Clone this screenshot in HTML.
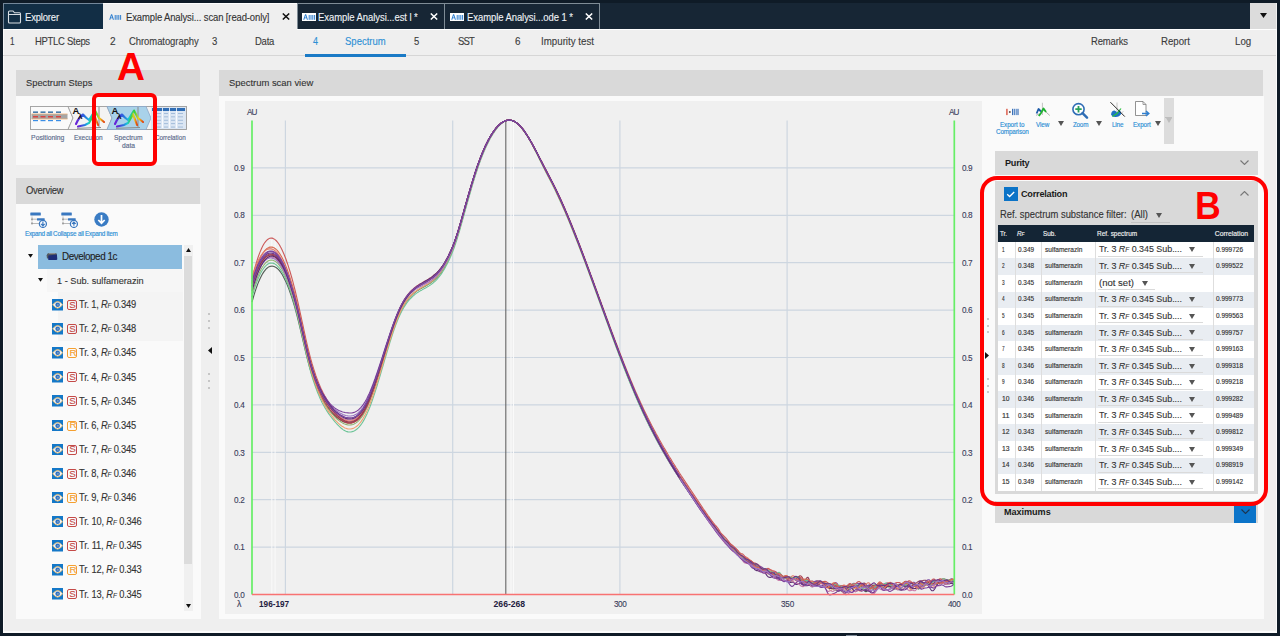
<!DOCTYPE html>
<html><head><meta charset="utf-8"><style>
*{margin:0;padding:0;box-sizing:border-box}
html,body{width:1280px;height:636px;overflow:hidden;background:#0f1b27;font-family:"Liberation Sans",sans-serif;color:#333}
.a{position:absolute}
.t{position:absolute;white-space:nowrap;line-height:1;transform-origin:0 0}
i{font-style:italic}
</style></head><body>
<div class="a" style="left:3px;top:3px;width:1274px;height:629px;background:#efefef"></div>
<div class="a" style="left:3px;top:631px;width:1274px;height:1.5px;background:#fbfbfb"></div>
<div class="a" style="left:846px;top:634.5px;width:11px;height:1.5px;background:#7f8c98"></div>
<div class="a" style="left:1276px;top:29px;width:1px;height:603px;background:#fbfbfb"></div>
<div class="a" style="left:3px;top:29px;width:1px;height:603px;background:#fbfbfb"></div>
<div class="a" style="left:3px;top:3px;width:1273px;height:26px;background:#172635"></div>
<div class="a" style="left:3px;top:29px;width:100px;height:1px;background:#fff"></div>
<div class="a" style="left:297px;top:29px;width:979px;height:1px;background:#fff"></div>
<div class="a" style="left:3px;top:3px;width:100px;height:26px;background:#122e45;border-top:1.5px solid #74879a;border-left:1px solid #74879a"></div>
<svg class="a" style="left:7px;top:10px" width="15" height="14" viewBox="0 0 15 14"><path d="M1.5 3.5 V2 Q1.5 1 2.5 1 H6 L7.5 2.8 H12.5 Q13.5 2.8 13.5 3.8 V12 Q13.5 13 12.5 13 H2.5 Q1.5 13 1.5 12 Z M1.5 4.5 H13.5" fill="none" stroke="#d8dde2" stroke-width="1.1"/></svg>
<div class="t" id="t1" style="left:24.70px;top:13.00px;font-size:10.2px;color:#eef1f4;-webkit-text-stroke:0.12px #eef1f4;transform:scaleX(0.9300);letter-spacing:-0.182px;">Explorer</div>
<div class="a" style="left:103px;top:3px;width:194px;height:27px;background:#efefef;border-top:1px solid #fdfdfd"></div>
<svg class="a" style="left:108px;top:12.5px" width="14" height="8" viewBox="0 0 14 8"><rect width="14" height="8" fill="transparent"/><path d="M1.2 6.8 L3.1 1.2 H4.1 L6 6.8 H4.9 L4.4 5.3 H2.8 L2.3 6.8 Z M3.05 4.4 H4.15 L3.6 2.6 Z" fill="#2f7fd0"/><rect x="6.7" y="2" width="1" height="4.8" fill="#2f7fd0"/><rect x="8.5" y="2" width="1" height="4.8" fill="#2f7fd0"/><rect x="10.3" y="2" width="1" height="4.8" fill="#2f7fd0"/><rect x="12.1" y="2" width="1" height="4.8" fill="#2f7fd0"/></svg>
<div class="t" id="t2" style="left:125.80px;top:13.00px;font-size:10.2px;color:#333;-webkit-text-stroke:0.12px #333;transform:scaleX(0.9300);letter-spacing:-0.128px;">Example Analysi... scan [read-only]</div>
<svg class="a" style="left:282px;top:13px" width="8" height="7" viewBox="0 0 8 7"><path d="M0.8 0.5 L7.2 6.5 M7.2 0.5 L0.8 6.5" stroke="#111" stroke-width="1.5"/></svg>
<div class="a" style="left:297px;top:3px;width:148px;height:26px;background:#172635;border:1px solid #7f8c96;border-bottom:none"></div>
<svg class="a" style="left:301.5px;top:12.5px" width="14" height="8" viewBox="0 0 14 8"><rect width="14" height="8" fill="#fff"/><path d="M1.2 6.8 L3.1 1.2 H4.1 L6 6.8 H4.9 L4.4 5.3 H2.8 L2.3 6.8 Z M3.05 4.4 H4.15 L3.6 2.6 Z" fill="#2f7fd0"/><rect x="6.7" y="2" width="1" height="4.8" fill="#2f7fd0"/><rect x="8.5" y="2" width="1" height="4.8" fill="#2f7fd0"/><rect x="10.3" y="2" width="1" height="4.8" fill="#2f7fd0"/><rect x="12.1" y="2" width="1" height="4.8" fill="#2f7fd0"/></svg>
<div class="t" id="t3" style="left:318.10px;top:13.00px;font-size:10.2px;color:#eef1f4;-webkit-text-stroke:0.12px #eef1f4;transform:scaleX(0.9300);letter-spacing:-0.059px;">Example Analysi...est l *</div>
<svg class="a" style="left:430px;top:13px" width="8" height="7" viewBox="0 0 8 7"><path d="M0.8 0.5 L7.2 6.5 M7.2 0.5 L0.8 6.5" stroke="#fff" stroke-width="1.5"/></svg>
<div class="a" style="left:444px;top:3px;width:156px;height:26px;background:#172635;border:1px solid #7f8c96;border-bottom:none"></div>
<svg class="a" style="left:450px;top:12.5px" width="14" height="8" viewBox="0 0 14 8"><rect width="14" height="8" fill="#fff"/><path d="M1.2 6.8 L3.1 1.2 H4.1 L6 6.8 H4.9 L4.4 5.3 H2.8 L2.3 6.8 Z M3.05 4.4 H4.15 L3.6 2.6 Z" fill="#2f7fd0"/><rect x="6.7" y="2" width="1" height="4.8" fill="#2f7fd0"/><rect x="8.5" y="2" width="1" height="4.8" fill="#2f7fd0"/><rect x="10.3" y="2" width="1" height="4.8" fill="#2f7fd0"/><rect x="12.1" y="2" width="1" height="4.8" fill="#2f7fd0"/></svg>
<div class="t" id="t4" style="left:466.60px;top:13.00px;font-size:10.2px;color:#eef1f4;-webkit-text-stroke:0.12px #eef1f4;transform:scaleX(0.9300);letter-spacing:-0.069px;">Example Analysi...ode 1 *</div>
<svg class="a" style="left:585px;top:13px" width="8" height="7" viewBox="0 0 8 7"><path d="M0.8 0.5 L7.2 6.5 M7.2 0.5 L0.8 6.5" stroke="#fff" stroke-width="1.5"/></svg>
<div class="a" style="left:1250px;top:3px;width:26px;height:26px;background:#dcdcdc"></div>
<svg class="a" style="left:1259.5px;top:12.5px" width="7" height="5" viewBox="0 0 7 5"><path d="M0 0 H7 L3.5 5Z" fill="#111"/></svg>
<div class="a" style="left:3px;top:54.5px;width:1273px;height:1.5px;background:#d6d6d6"></div>
<div class="a" style="left:305px;top:54px;width:101px;height:2.5px;background:#1a7ac6"></div>
<div class="t" id="t5" style="left:10.00px;top:37.00px;font-size:10.2px;color:#3c3c3c;-webkit-text-stroke:0.12px #3c3c3c;transform:scaleX(0.7934);">1</div>
<div class="t" id="t6" style="left:35.10px;top:37.00px;font-size:10.2px;color:#3c3c3c;-webkit-text-stroke:0.12px #3c3c3c;transform:scaleX(0.9300);letter-spacing:-0.303px;">HPTLC Steps</div>
<div class="t" id="t7" style="left:110.40px;top:37.00px;font-size:10.2px;color:#3c3c3c;-webkit-text-stroke:0.12px #3c3c3c;transform:scaleX(0.9873);">2</div>
<div class="t" id="t8" style="left:128.90px;top:37.00px;font-size:10.2px;color:#3c3c3c;-webkit-text-stroke:0.12px #3c3c3c;transform:scaleX(0.9300);letter-spacing:-0.064px;">Chromatography</div>
<div class="t" id="t9" style="left:211.50px;top:37.00px;font-size:10.2px;color:#3c3c3c;-webkit-text-stroke:0.12px #3c3c3c;transform:scaleX(0.9344);">3</div>
<div class="t" id="t10" style="left:254.90px;top:37.00px;font-size:10.2px;color:#3c3c3c;-webkit-text-stroke:0.12px #3c3c3c;transform:scaleX(0.9300);letter-spacing:-0.260px;">Data</div>
<div class="t" id="t11" style="left:312.50px;top:37.00px;font-size:10.2px;color:#2d8fd5;-webkit-text-stroke:0.12px #2d8fd5;transform:scaleX(0.8815);">4</div>
<div class="t" id="t12" style="left:345.40px;top:37.00px;font-size:10.2px;color:#2d8fd5;-webkit-text-stroke:0.12px #2d8fd5;transform:scaleX(0.9333);">Spectrum</div>
<div class="t" id="t13" style="left:413.75px;top:37.00px;font-size:10.2px;color:#3c3c3c;-webkit-text-stroke:0.12px #3c3c3c;transform:scaleX(0.9256);">5</div>
<div class="t" id="t14" style="left:458.25px;top:37.00px;font-size:10.2px;color:#3c3c3c;-webkit-text-stroke:0.12px #3c3c3c;transform:scaleX(0.9300);letter-spacing:-0.909px;">SST</div>
<div class="t" id="t15" style="left:514.50px;top:37.00px;font-size:10.2px;color:#3c3c3c;-webkit-text-stroke:0.12px #3c3c3c;transform:scaleX(0.9697);">6</div>
<div class="t" id="t16" style="left:540.75px;top:37.00px;font-size:10.2px;color:#3c3c3c;-webkit-text-stroke:0.12px #3c3c3c;transform:scaleX(0.9552);">Impurity test</div>
<div class="t" id="t17" style="left:1090.50px;top:37.00px;font-size:10.2px;color:#3c3c3c;-webkit-text-stroke:0.12px #3c3c3c;transform:scaleX(0.9300);letter-spacing:-0.163px;">Remarks</div>
<div class="t" id="t18" style="left:1161.00px;top:37.00px;font-size:10.2px;color:#3c3c3c;-webkit-text-stroke:0.12px #3c3c3c;transform:scaleX(0.9484);">Report</div>
<div class="t" id="t19" style="left:1234.80px;top:37.00px;font-size:10.2px;color:#3c3c3c;-webkit-text-stroke:0.12px #3c3c3c;transform:scaleX(0.9529);">Log</div>
<div class="a" style="left:16px;top:70px;width:184px;height:26px;background:#d9d9d9"></div>
<div class="t" id="t20" style="left:25.70px;top:78.00px;font-size:9.8px;color:#333;-webkit-text-stroke:0.12px #333;transform:scaleX(0.9512);">Spectrum Steps</div>
<div class="a" style="left:16px;top:96px;width:184px;height:68.5px;background:#fafafa"></div>
<svg class="a" style="left:29px;top:105px" width="160" height="27" viewBox="0 0 160 27">
<defs><linearGradient id="rb" x1="0" x2="1"><stop offset="0" stop-color="#6a1fd6"/><stop offset="0.3" stop-color="#2a6ae0"/><stop offset="0.5" stop-color="#18c8d8"/><stop offset="0.7" stop-color="#3ad040"/><stop offset="0.85" stop-color="#f0d020"/><stop offset="1" stop-color="#e04010"/></linearGradient></defs>
<rect x="1.5" y="1.5" width="156" height="23" fill="#f3f3f3" stroke="#9a9a9a" stroke-width="0.9"/>
<path d="M1.5 1.5 H39 L44 13 L39 24.5 H1.5Z" fill="#fafafa" stroke="#9a9a9a" stroke-width="0.8"/>
<rect x="2.5" y="9" width="36" height="5" fill="#a6a6a6"/><rect x="2.5" y="8.6" width="36" height="0.8" fill="#f0b27a"/><rect x="2.5" y="13.6" width="36" height="0.8" fill="#f0b27a"/>
<rect x="4" y="6.5" width="5" height="1.3" fill="#1d5f9a"/><rect x="4" y="11" width="5" height="1.5" fill="#d9433f"/><rect x="4" y="15" width="5" height="1.2" fill="#3a8ee6"/>
<rect x="11.5" y="6.5" width="5" height="1.3" fill="#1d5f9a"/><rect x="11.5" y="11" width="5" height="1.5" fill="#d9433f"/><rect x="11.5" y="15" width="5" height="1.2" fill="#3a8ee6"/>
<rect x="19" y="6.5" width="5" height="1.3" fill="#1d5f9a"/><rect x="19" y="11" width="5" height="1.5" fill="#d9433f"/><rect x="19" y="15" width="5" height="1.2" fill="#3a8ee6"/>
<rect x="27" y="6.5" width="5" height="1.3" fill="#1d5f9a"/><rect x="27" y="11" width="5" height="1.5" fill="#d9433f"/><rect x="27" y="15" width="5" height="1.2" fill="#3a8ee6"/>
<path d="M39 1.5 H78 L83 13 L78 24.5 H39 L44 13Z" fill="#f3f3f3" stroke="#9a9a9a" stroke-width="0.8"/>
<line x1="70" y1="2" x2="70" y2="22.5" stroke="#8a8a8a" stroke-width="1"/><path d="M47 19 Q50 12 54 9.5 Q57 13 60 15 L66 5.5 L70 13 L75 17" fill="none" stroke="url(#rb)" stroke-width="2.1" stroke-linejoin="round" stroke-linecap="round"/><path d="M49 21.5 L56 20 L60 18 L65 9.5 L69 20" fill="none" stroke="url(#rb)" stroke-width="2.1" stroke-linecap="round"/><line x1="48" y1="23.3" x2="72" y2="22.5" stroke="#8a8a8a" stroke-width="1"/><text x="43.5" y="9" font-size="9.5" font-weight="bold" font-family="Liberation Sans" fill="#111">A</text><text x="49" y="13.5" font-size="8" font-weight="bold" font-family="Liberation Sans" fill="#111">&#955;</text>
<path d="M78 1.5 H117 L122 13 L117 24.5 H78 L83 13Z" fill="#a9d2ea" stroke="#8aa6c8" stroke-width="0.8"/>
<line x1="109" y1="2" x2="109" y2="22.5" stroke="#8a8a8a" stroke-width="1"/><path d="M86 19 Q89 12 93 9.5 Q96 13 99 15 L105 5.5 L109 13 L114 17" fill="none" stroke="url(#rb)" stroke-width="2.1" stroke-linejoin="round" stroke-linecap="round"/><path d="M88 21.5 L95 20 L99 18 L104 9.5 L108 20" fill="none" stroke="url(#rb)" stroke-width="2.1" stroke-linecap="round"/><line x1="87" y1="23.3" x2="111" y2="22.5" stroke="#8a8a8a" stroke-width="1"/><text x="82.5" y="9" font-size="9.5" font-weight="bold" font-family="Liberation Sans" fill="#111">A</text><text x="88" y="13.5" font-size="8" font-weight="bold" font-family="Liberation Sans" fill="#111">&#955;</text>
<rect x="122" y="2" width="35" height="22" fill="#dbe6f3"/>
<rect x="123" y="3" width="33" height="3" fill="#2f6db5"/>
<rect x="124" y="8.0" width="8" height="0.9" fill="#9db8d8"/><rect x="135" y="8.0" width="4" height="0.9" fill="#9db8d8"/><rect x="142" y="8.0" width="4" height="0.9" fill="#9db8d8"/><rect x="149" y="8.0" width="5" height="0.9" fill="#9db8d8"/>
<rect x="124" y="11.4" width="8" height="0.9" fill="#9db8d8"/><rect x="135" y="11.4" width="4" height="0.9" fill="#9db8d8"/><rect x="142" y="11.4" width="4" height="0.9" fill="#9db8d8"/><rect x="149" y="11.4" width="5" height="0.9" fill="#9db8d8"/>
<rect x="124" y="14.8" width="8" height="0.9" fill="#9db8d8"/><rect x="135" y="14.8" width="4" height="0.9" fill="#9db8d8"/><rect x="142" y="14.8" width="4" height="0.9" fill="#9db8d8"/><rect x="149" y="14.8" width="5" height="0.9" fill="#9db8d8"/>
<rect x="124" y="18.2" width="8" height="0.9" fill="#9db8d8"/><rect x="135" y="18.2" width="4" height="0.9" fill="#9db8d8"/><rect x="142" y="18.2" width="4" height="0.9" fill="#9db8d8"/><rect x="149" y="18.2" width="5" height="0.9" fill="#9db8d8"/>
<rect x="124" y="21.6" width="8" height="0.9" fill="#9db8d8"/><rect x="135" y="21.6" width="4" height="0.9" fill="#9db8d8"/><rect x="142" y="21.6" width="4" height="0.9" fill="#9db8d8"/><rect x="149" y="21.6" width="5" height="0.9" fill="#9db8d8"/>
<line x1="133.5" y1="3" x2="133.5" y2="23" stroke="#fff" stroke-width="0.8"/>
<line x1="140.5" y1="3" x2="140.5" y2="23" stroke="#fff" stroke-width="0.8"/>
<line x1="147.5" y1="3" x2="147.5" y2="23" stroke="#fff" stroke-width="0.8"/>
</svg>
<div class="t" id="t21" style="left:31.10px;top:135.00px;font-size:6.8px;color:#5a6b8c;-webkit-text-stroke:0.15px #5a6b8c;">Positioning</div>
<div class="t" id="t22" style="left:73.70px;top:135.00px;font-size:6.8px;color:#5a6b8c;-webkit-text-stroke:0.15px #5a6b8c;transform:scaleX(0.9612);">Execution</div>
<div class="t" id="t23" style="left:113.80px;top:135.00px;font-size:6.8px;color:#5a6b8c;-webkit-text-stroke:0.15px #5a6b8c;transform:scaleX(0.9830);">Spectrum</div>
<div class="t" id="t24" style="left:121.60px;top:143.00px;font-size:6.8px;color:#5a6b8c;-webkit-text-stroke:0.15px #5a6b8c;transform:scaleX(0.9823);">data</div>
<div class="t" id="t25" style="left:155.30px;top:135.00px;font-size:6.8px;color:#5a6b8c;-webkit-text-stroke:0.15px #5a6b8c;transform:scaleX(0.9300);letter-spacing:-0.024px;">Correlation</div>
<div class="a" style="left:16px;top:178px;width:184px;height:26px;background:#d9d9d9"></div>
<div class="t" id="t26" style="left:25.90px;top:186.00px;font-size:10.2px;color:#333;-webkit-text-stroke:0.12px #333;transform:scaleX(0.9300);letter-spacing:-0.276px;">Overview</div>
<div class="a" style="left:16px;top:204px;width:184.5px;height:414.5px;background:#fafafa"></div>
<svg class="a" style="left:30px;top:212px" width="18" height="16" viewBox="0 0 18 16"><rect x="0.3" y="0.5" width="10.5" height="3" rx="0.5" fill="#3a78c0"/><path d="M2 3.5 V11.5" stroke="#aaa" stroke-width="0.8" stroke-dasharray="1 0.6" fill="none"/><path d="M2 7.2 H7 M2 11.5 H9" stroke="#aaa" stroke-width="0.8" fill="none"/><circle cx="2" cy="7.2" r="1" fill="#999"/><circle cx="2" cy="11.5" r="1" fill="#999"/><rect x="7" y="6.2" width="7.7" height="2.4" rx="0.4" fill="#3a78c0"/><circle cx="12.9" cy="11.9" r="3.5" fill="#fff" stroke="#3a78c0" stroke-width="1.3"/><path d="M12.9 9.6 V13.6 M11.1 11.9 L12.9 13.8 L14.7 11.9" stroke="#3a78c0" stroke-width="1.2" fill="none"/></svg>
<svg class="a" style="left:61px;top:212px" width="18" height="16" viewBox="0 0 18 16"><rect x="0.3" y="0.5" width="10.5" height="3" rx="0.5" fill="#3a78c0"/><path d="M2 3.5 V11.5" stroke="#aaa" stroke-width="0.8" stroke-dasharray="1 0.6" fill="none"/><path d="M2 7.2 H7 M2 11.5 H9" stroke="#aaa" stroke-width="0.8" fill="none"/><circle cx="2" cy="7.2" r="1" fill="#999"/><circle cx="2" cy="11.5" r="1" fill="#999"/><rect x="7" y="6.2" width="7.7" height="2.4" rx="0.4" fill="#3a78c0"/><circle cx="12.9" cy="11.9" r="3.5" fill="#fff" stroke="#3a78c0" stroke-width="1.3"/><path d="M12.9 13.8 V10 M11.1 11.9 L12.9 10 L14.7 11.9" stroke="#3a78c0" stroke-width="1.2" fill="none"/></svg>
<svg class="a" style="left:94px;top:211.5px" width="15" height="15" viewBox="0 0 15 15"><circle cx="7.5" cy="7.5" r="7.2" fill="#3a7cc4"/><path d="M7.5 3 V11 M4.3 8 L7.5 11.2 L10.7 8" stroke="#fff" stroke-width="1.7" fill="none"/></svg>
<div class="a" style="left:47px;top:268.5px;width:136px;height:23.5px;background:#f6f6f6"></div>
<div class="a" style="left:57.5px;top:292px;width:125.5px;height:49px;background:#f4f4f4"></div>
<div class="t" id="t27" style="left:24.80px;top:231.00px;font-size:6.8px;color:#2d8fd5;-webkit-text-stroke:0.15px #2d8fd5;transform:scaleX(0.9300);letter-spacing:-0.290px;">Expand all</div>
<div class="t" id="t28" style="left:53.10px;top:231.00px;font-size:6.8px;color:#2d8fd5;-webkit-text-stroke:0.15px #2d8fd5;transform:scaleX(0.9300);letter-spacing:-0.174px;">Collapse all</div>
<div class="t" id="t29" style="left:85.20px;top:231.00px;font-size:6.8px;color:#2d8fd5;-webkit-text-stroke:0.15px #2d8fd5;transform:scaleX(0.9300);letter-spacing:-0.251px;">Expand item</div>
<div class="a" style="left:38px;top:245px;width:144px;height:23.5px;background:#8bbcdf"></div>
<svg class="a" style="left:28.2px;top:254px" width="5" height="3.8" viewBox="0 0 5 3.8"><path d="M0 0 H5 L2.5 3.8Z" fill="#111"/></svg>
<svg class="a" style="left:46px;top:252px" width="12" height="9" viewBox="0 0 12 9"><path d="M0.6 3.5 Q0.8 1.2 3 1 H9.5 Q10.6 1 10.8 2.2 L10.8 5 L1 6.5Z" fill="#555a60"/><path d="M3 1.5 H9.5" stroke="#b0b0b0" stroke-width="0.6"/><path d="M2.3 3.4 L10.9 2.6 L11.3 7.2 Q11.2 7.9 10.2 7.9 L3.2 8.1 Q2.2 8.1 2.2 7.2Z" fill="#1c2c78"/></svg>
<div class="t" id="t30" style="left:61.50px;top:251.00px;font-size:10.6px;color:#222;-webkit-text-stroke:0.12px #222;transform:scaleX(0.9300);letter-spacing:-0.465px;">Developed 1c</div>
<svg class="a" style="left:38.2px;top:278px" width="5" height="3.8" viewBox="0 0 5 3.8"><path d="M0 0 H5 L2.5 3.8Z" fill="#111"/></svg>
<div class="t" id="t31" style="left:56.80px;top:276.00px;font-size:9.6px;color:#333;-webkit-text-stroke:0.12px #333;transform:scaleX(0.9564);">1 - Sub. sulfamerazin</div>
<div class="a" style="left:183.5px;top:245px;width:9px;height:366px;background:#f0f0f0"></div>
<div class="a" style="left:184px;top:256px;width:8px;height:308px;background:#dcdcdc"></div>
<svg class="a" style="left:185.5px;top:248px" width="5" height="4" viewBox="0 0 5 4"><path d="M0 4 H5 L2.5 0Z" fill="#111"/></svg>
<svg class="a" style="left:185.5px;top:603.5px" width="5" height="4" viewBox="0 0 5 4"><path d="M0 0 H5 L2.5 4Z" fill="#111"/></svg>
<svg class="a" style="left:52px;top:299.0px" width="11.3" height="11.5" viewBox="0 0 11.3 11.5"><rect width="11.3" height="11.5" fill="#1478c8"/><path d="M0.7 5.8 Q5.65 -0.9 10.6 5.8 Q5.65 12.5 0.7 5.8Z" fill="#eef4fb" stroke="#e9b968" stroke-width="0.9"/><circle cx="5.65" cy="5.8" r="2.3" fill="#2f72c2"/><circle cx="5.9" cy="5.8" r="0.9" fill="#8aa0b8"/></svg>
<div class="a" style="left:67px;top:300.0px;width:10px;height:10px;border:1.1px solid #c44a48;border-radius:2px"></div>
<div class="t" id="t32" style="left:69.20px;top:300.00px;font-size:9.8px;color:#c44a48;-webkit-text-stroke:0.12px #c44a48;">S</div>
<div class="t" id="t33" style="left:78.70px;top:300.00px;font-size:10px;color:#333;-webkit-text-stroke:0.12px #333;transform:scaleX(0.9300);letter-spacing:-0.224px;">Tr. 1, <i>R<span style="font-size:7px">F</span></i> 0.349</div>
<svg class="a" style="left:52px;top:323.1px" width="11.3" height="11.5" viewBox="0 0 11.3 11.5"><rect width="11.3" height="11.5" fill="#1478c8"/><path d="M0.7 5.8 Q5.65 -0.9 10.6 5.8 Q5.65 12.5 0.7 5.8Z" fill="#eef4fb" stroke="#e9b968" stroke-width="0.9"/><circle cx="5.65" cy="5.8" r="2.3" fill="#2f72c2"/><circle cx="5.9" cy="5.8" r="0.9" fill="#8aa0b8"/></svg>
<div class="a" style="left:67px;top:324.1px;width:10px;height:10px;border:1.1px solid #c44a48;border-radius:2px"></div>
<div class="t" id="t34" style="left:69.20px;top:324.00px;font-size:9.8px;color:#c44a48;-webkit-text-stroke:0.12px #c44a48;">S</div>
<div class="t" id="t35" style="left:78.70px;top:324.00px;font-size:10px;color:#333;-webkit-text-stroke:0.12px #333;transform:scaleX(0.9300);letter-spacing:-0.224px;">Tr. 2, <i>R<span style="font-size:7px">F</span></i> 0.348</div>
<svg class="a" style="left:52px;top:347.2px" width="11.3" height="11.5" viewBox="0 0 11.3 11.5"><rect width="11.3" height="11.5" fill="#1478c8"/><path d="M0.7 5.8 Q5.65 -0.9 10.6 5.8 Q5.65 12.5 0.7 5.8Z" fill="#eef4fb" stroke="#e9b968" stroke-width="0.9"/><circle cx="5.65" cy="5.8" r="2.3" fill="#2f72c2"/><circle cx="5.9" cy="5.8" r="0.9" fill="#8aa0b8"/></svg>
<div class="a" style="left:67px;top:348.2px;width:10px;height:10px;border:1.1px solid #f5a030;border-radius:2px"></div>
<div class="t" id="t36" style="left:69.40px;top:348.00px;font-size:9.8px;color:#f5a030;-webkit-text-stroke:0.12px #f5a030;">R</div>
<div class="t" id="t37" style="left:78.70px;top:348.00px;font-size:10px;color:#333;-webkit-text-stroke:0.12px #333;transform:scaleX(0.9300);letter-spacing:-0.224px;">Tr. 3, <i>R<span style="font-size:7px">F</span></i> 0.345</div>
<svg class="a" style="left:52px;top:371.3px" width="11.3" height="11.5" viewBox="0 0 11.3 11.5"><rect width="11.3" height="11.5" fill="#1478c8"/><path d="M0.7 5.8 Q5.65 -0.9 10.6 5.8 Q5.65 12.5 0.7 5.8Z" fill="#eef4fb" stroke="#e9b968" stroke-width="0.9"/><circle cx="5.65" cy="5.8" r="2.3" fill="#2f72c2"/><circle cx="5.9" cy="5.8" r="0.9" fill="#8aa0b8"/></svg>
<div class="a" style="left:67px;top:372.3px;width:10px;height:10px;border:1.1px solid #c44a48;border-radius:2px"></div>
<div class="t" id="t38" style="left:69.20px;top:372.00px;font-size:9.8px;color:#c44a48;-webkit-text-stroke:0.12px #c44a48;">S</div>
<div class="t" id="t39" style="left:78.70px;top:373.00px;font-size:10px;color:#333;-webkit-text-stroke:0.12px #333;transform:scaleX(0.9300);letter-spacing:-0.224px;">Tr. 4, <i>R<span style="font-size:7px">F</span></i> 0.345</div>
<svg class="a" style="left:52px;top:395.4px" width="11.3" height="11.5" viewBox="0 0 11.3 11.5"><rect width="11.3" height="11.5" fill="#1478c8"/><path d="M0.7 5.8 Q5.65 -0.9 10.6 5.8 Q5.65 12.5 0.7 5.8Z" fill="#eef4fb" stroke="#e9b968" stroke-width="0.9"/><circle cx="5.65" cy="5.8" r="2.3" fill="#2f72c2"/><circle cx="5.9" cy="5.8" r="0.9" fill="#8aa0b8"/></svg>
<div class="a" style="left:67px;top:396.4px;width:10px;height:10px;border:1.1px solid #c44a48;border-radius:2px"></div>
<div class="t" id="t40" style="left:69.20px;top:396.00px;font-size:9.8px;color:#c44a48;-webkit-text-stroke:0.12px #c44a48;">S</div>
<div class="t" id="t41" style="left:78.70px;top:397.00px;font-size:10px;color:#333;-webkit-text-stroke:0.12px #333;transform:scaleX(0.9300);letter-spacing:-0.224px;">Tr. 5, <i>R<span style="font-size:7px">F</span></i> 0.345</div>
<svg class="a" style="left:52px;top:419.5px" width="11.3" height="11.5" viewBox="0 0 11.3 11.5"><rect width="11.3" height="11.5" fill="#1478c8"/><path d="M0.7 5.8 Q5.65 -0.9 10.6 5.8 Q5.65 12.5 0.7 5.8Z" fill="#eef4fb" stroke="#e9b968" stroke-width="0.9"/><circle cx="5.65" cy="5.8" r="2.3" fill="#2f72c2"/><circle cx="5.9" cy="5.8" r="0.9" fill="#8aa0b8"/></svg>
<div class="a" style="left:67px;top:420.5px;width:10px;height:10px;border:1.1px solid #f5a030;border-radius:2px"></div>
<div class="t" id="t42" style="left:69.40px;top:420.00px;font-size:9.8px;color:#f5a030;-webkit-text-stroke:0.12px #f5a030;">R</div>
<div class="t" id="t43" style="left:78.70px;top:421.00px;font-size:10px;color:#333;-webkit-text-stroke:0.12px #333;transform:scaleX(0.9300);letter-spacing:-0.224px;">Tr. 6, <i>R<span style="font-size:7px">F</span></i> 0.345</div>
<svg class="a" style="left:52px;top:443.6px" width="11.3" height="11.5" viewBox="0 0 11.3 11.5"><rect width="11.3" height="11.5" fill="#1478c8"/><path d="M0.7 5.8 Q5.65 -0.9 10.6 5.8 Q5.65 12.5 0.7 5.8Z" fill="#eef4fb" stroke="#e9b968" stroke-width="0.9"/><circle cx="5.65" cy="5.8" r="2.3" fill="#2f72c2"/><circle cx="5.9" cy="5.8" r="0.9" fill="#8aa0b8"/></svg>
<div class="a" style="left:67px;top:444.6px;width:10px;height:10px;border:1.1px solid #c44a48;border-radius:2px"></div>
<div class="t" id="t44" style="left:69.20px;top:444.00px;font-size:9.8px;color:#c44a48;-webkit-text-stroke:0.12px #c44a48;">S</div>
<div class="t" id="t45" style="left:78.70px;top:445.00px;font-size:10px;color:#333;-webkit-text-stroke:0.12px #333;transform:scaleX(0.9300);letter-spacing:-0.224px;">Tr. 7, <i>R<span style="font-size:7px">F</span></i> 0.345</div>
<svg class="a" style="left:52px;top:467.7px" width="11.3" height="11.5" viewBox="0 0 11.3 11.5"><rect width="11.3" height="11.5" fill="#1478c8"/><path d="M0.7 5.8 Q5.65 -0.9 10.6 5.8 Q5.65 12.5 0.7 5.8Z" fill="#eef4fb" stroke="#e9b968" stroke-width="0.9"/><circle cx="5.65" cy="5.8" r="2.3" fill="#2f72c2"/><circle cx="5.9" cy="5.8" r="0.9" fill="#8aa0b8"/></svg>
<div class="a" style="left:67px;top:468.7px;width:10px;height:10px;border:1.1px solid #c44a48;border-radius:2px"></div>
<div class="t" id="t46" style="left:69.20px;top:469.00px;font-size:9.8px;color:#c44a48;-webkit-text-stroke:0.12px #c44a48;">S</div>
<div class="t" id="t47" style="left:78.70px;top:469.00px;font-size:10px;color:#333;-webkit-text-stroke:0.12px #333;transform:scaleX(0.9300);letter-spacing:-0.224px;">Tr. 8, <i>R<span style="font-size:7px">F</span></i> 0.346</div>
<svg class="a" style="left:52px;top:491.8px" width="11.3" height="11.5" viewBox="0 0 11.3 11.5"><rect width="11.3" height="11.5" fill="#1478c8"/><path d="M0.7 5.8 Q5.65 -0.9 10.6 5.8 Q5.65 12.5 0.7 5.8Z" fill="#eef4fb" stroke="#e9b968" stroke-width="0.9"/><circle cx="5.65" cy="5.8" r="2.3" fill="#2f72c2"/><circle cx="5.9" cy="5.8" r="0.9" fill="#8aa0b8"/></svg>
<div class="a" style="left:67px;top:492.8px;width:10px;height:10px;border:1.1px solid #f5a030;border-radius:2px"></div>
<div class="t" id="t48" style="left:69.40px;top:493.00px;font-size:9.8px;color:#f5a030;-webkit-text-stroke:0.12px #f5a030;">R</div>
<div class="t" id="t49" style="left:78.70px;top:493.00px;font-size:10px;color:#333;-webkit-text-stroke:0.12px #333;transform:scaleX(0.9300);letter-spacing:-0.224px;">Tr. 9, <i>R<span style="font-size:7px">F</span></i> 0.346</div>
<svg class="a" style="left:52px;top:515.9px" width="11.3" height="11.5" viewBox="0 0 11.3 11.5"><rect width="11.3" height="11.5" fill="#1478c8"/><path d="M0.7 5.8 Q5.65 -0.9 10.6 5.8 Q5.65 12.5 0.7 5.8Z" fill="#eef4fb" stroke="#e9b968" stroke-width="0.9"/><circle cx="5.65" cy="5.8" r="2.3" fill="#2f72c2"/><circle cx="5.9" cy="5.8" r="0.9" fill="#8aa0b8"/></svg>
<div class="a" style="left:67px;top:516.9px;width:10px;height:10px;border:1.1px solid #c44a48;border-radius:2px"></div>
<div class="t" id="t50" style="left:69.20px;top:517.00px;font-size:9.8px;color:#c44a48;-webkit-text-stroke:0.12px #c44a48;">S</div>
<div class="t" id="t51" style="left:78.70px;top:517.00px;font-size:10px;color:#333;-webkit-text-stroke:0.12px #333;transform:scaleX(0.9300);letter-spacing:-0.171px;">Tr. 10, <i>R<span style="font-size:7px">F</span></i> 0.346</div>
<svg class="a" style="left:52px;top:540.0px" width="11.3" height="11.5" viewBox="0 0 11.3 11.5"><rect width="11.3" height="11.5" fill="#1478c8"/><path d="M0.7 5.8 Q5.65 -0.9 10.6 5.8 Q5.65 12.5 0.7 5.8Z" fill="#eef4fb" stroke="#e9b968" stroke-width="0.9"/><circle cx="5.65" cy="5.8" r="2.3" fill="#2f72c2"/><circle cx="5.9" cy="5.8" r="0.9" fill="#8aa0b8"/></svg>
<div class="a" style="left:67px;top:541.0px;width:10px;height:10px;border:1.1px solid #c44a48;border-radius:2px"></div>
<div class="t" id="t52" style="left:69.20px;top:541.00px;font-size:9.8px;color:#c44a48;-webkit-text-stroke:0.12px #c44a48;">S</div>
<div class="t" id="t53" style="left:78.70px;top:541.00px;font-size:10px;color:#333;-webkit-text-stroke:0.12px #333;transform:scaleX(0.9300);letter-spacing:-0.121px;">Tr. 11, <i>R<span style="font-size:7px">F</span></i> 0.345</div>
<svg class="a" style="left:52px;top:564.1px" width="11.3" height="11.5" viewBox="0 0 11.3 11.5"><rect width="11.3" height="11.5" fill="#1478c8"/><path d="M0.7 5.8 Q5.65 -0.9 10.6 5.8 Q5.65 12.5 0.7 5.8Z" fill="#eef4fb" stroke="#e9b968" stroke-width="0.9"/><circle cx="5.65" cy="5.8" r="2.3" fill="#2f72c2"/><circle cx="5.9" cy="5.8" r="0.9" fill="#8aa0b8"/></svg>
<div class="a" style="left:67px;top:565.1px;width:10px;height:10px;border:1.1px solid #f5a030;border-radius:2px"></div>
<div class="t" id="t54" style="left:69.40px;top:565.00px;font-size:9.8px;color:#f5a030;-webkit-text-stroke:0.12px #f5a030;">R</div>
<div class="t" id="t55" style="left:78.70px;top:565.00px;font-size:10px;color:#333;-webkit-text-stroke:0.12px #333;transform:scaleX(0.9300);letter-spacing:-0.171px;">Tr. 12, <i>R<span style="font-size:7px">F</span></i> 0.343</div>
<svg class="a" style="left:52px;top:588.2px" width="11.3" height="11.5" viewBox="0 0 11.3 11.5"><rect width="11.3" height="11.5" fill="#1478c8"/><path d="M0.7 5.8 Q5.65 -0.9 10.6 5.8 Q5.65 12.5 0.7 5.8Z" fill="#eef4fb" stroke="#e9b968" stroke-width="0.9"/><circle cx="5.65" cy="5.8" r="2.3" fill="#2f72c2"/><circle cx="5.9" cy="5.8" r="0.9" fill="#8aa0b8"/></svg>
<div class="a" style="left:67px;top:589.2px;width:10px;height:10px;border:1.1px solid #c44a48;border-radius:2px"></div>
<div class="t" id="t56" style="left:69.20px;top:589.00px;font-size:9.8px;color:#c44a48;-webkit-text-stroke:0.12px #c44a48;">S</div>
<div class="t" id="t57" style="left:78.70px;top:590.00px;font-size:10px;color:#333;-webkit-text-stroke:0.12px #333;transform:scaleX(0.9300);letter-spacing:-0.171px;">Tr. 13, <i>R<span style="font-size:7px">F</span></i> 0.345</div>
<svg class="a" style="left:208px;top:347px" width="4" height="7" viewBox="0 0 4 7"><path d="M4 0 V7 L0 3.5Z" fill="#111"/></svg>
<div class="a" style="left:219px;top:70px;width:1044px;height:26px;background:#d9d9d9"></div>
<div class="t" id="t58" style="left:228.75px;top:78.00px;font-size:9.8px;color:#333;-webkit-text-stroke:0.12px #333;transform:scaleX(0.9610);">Spectrum scan view</div>
<div class="a" style="left:219px;top:96px;width:1044.5px;height:523px;background:#fafafa"></div>
<div class="a" style="left:225px;top:100.5px;width:756.5px;height:513.5px;background:#f0f0f0"></div>
<svg class="a" style="left:0;top:0" width="1280" height="636" viewBox="0 0 1280 636">
<line x1="252" y1="547.1" x2="954.3" y2="547.1" stroke="#cdd6e0" stroke-width="1.2"/>
<line x1="252" y1="499.7" x2="954.3" y2="499.7" stroke="#cdd6e0" stroke-width="1.2"/>
<line x1="252" y1="452.3" x2="954.3" y2="452.3" stroke="#cdd6e0" stroke-width="1.2"/>
<line x1="252" y1="404.9" x2="954.3" y2="404.9" stroke="#cdd6e0" stroke-width="1.2"/>
<line x1="252" y1="357.5" x2="954.3" y2="357.5" stroke="#cdd6e0" stroke-width="1.2"/>
<line x1="252" y1="310.1" x2="954.3" y2="310.1" stroke="#cdd6e0" stroke-width="1.2"/>
<line x1="252" y1="262.7" x2="954.3" y2="262.7" stroke="#cdd6e0" stroke-width="1.2"/>
<line x1="252" y1="215.3" x2="954.3" y2="215.3" stroke="#cdd6e0" stroke-width="1.2"/>
<line x1="252" y1="167.9" x2="954.3" y2="167.9" stroke="#cdd6e0" stroke-width="1.2"/>
<line x1="285.4" y1="120.5" x2="285.4" y2="594.5" stroke="#cdd6e0" stroke-width="1.2"/>
<line x1="452.7" y1="120.5" x2="452.7" y2="594.5" stroke="#cdd6e0" stroke-width="1.2"/>
<line x1="619.9" y1="120.5" x2="619.9" y2="594.5" stroke="#cdd6e0" stroke-width="1.2"/>
<line x1="787.1" y1="120.5" x2="787.1" y2="594.5" stroke="#cdd6e0" stroke-width="1.2"/>
<line x1="271.8" y1="240" x2="271.8" y2="594.5" stroke="#fafafa" stroke-width="1"/>
<line x1="275.1" y1="240" x2="275.1" y2="594.5" stroke="#fafafa" stroke-width="1"/>
<line x1="511" y1="122" x2="511" y2="594.5" stroke="#fafafa" stroke-width="1"/>
<line x1="513.5" y1="122" x2="513.5" y2="594.5" stroke="#fafafa" stroke-width="1"/>
<line x1="505.8" y1="122" x2="505.8" y2="594.5" stroke="#666" stroke-width="1.1"/>
<g fill="none" stroke-width="1.1" stroke-linejoin="round">
<path d="M252,302.2 L253,298.6 L254,295.1 L255,291.9 L256,288.9 L257,286.0 L258,283.4 L259,281.0 L260,278.7 L261,276.7 L262,274.8 L263,273.1 L264,271.6 L265,270.3 L266,269.2 L267,268.2 L268,267.4 L269,266.8 L270,266.4 L271,266.2 L272,266.1 L273,266.2 L274,266.5 L275,266.9 L276,267.5 L277,268.2 L278,269.1 L279,270.2 L280,271.4 L281,272.8 L282,274.3 L283,276.0 L284,277.9 L285,279.9 L286,282.0 L287,284.3 L288,286.8 L289,289.4 L290,292.2 L291,295.1 L292,298.1 L293,301.3 L294,304.7 L295,308.2 L296,311.8 L297,315.6 L298,319.5 L299,323.6 L300,327.8 L301,332.0 L302,336.3 L303,340.6 L304,344.9 L305,349.1 L306,353.3 L307,357.3 L308,361.2 L309,364.9 L310,368.5 L311,371.8 L312,375.0 L313,378.1 L314,380.9 L315,383.6 L316,386.2 L317,388.6 L318,390.9 L319,393.1 L320,395.1 L321,397.1 L322,398.9 L323,400.6 L324,402.3 L325,403.8 L326,405.3 L327,406.7 L328,408.0 L329,409.3 L330,410.5 L331,411.7 L332,412.8 L333,413.8 L334,414.8 L335,415.8 L336,416.7 L337,417.5 L338,418.3 L339,419.1 L340,419.7 L341,420.4 L342,420.9 L343,421.4 L344,421.9 L345,422.3 L346,422.6 L347,422.8 L348,422.9 L349,423.0 L350,423.0 L351,422.9 L352,422.6 L353,422.3 L354,421.9 L355,421.4 L356,420.7 L357,420.0 L358,419.1 L359,418.1 L360,417.0 L361,415.8 L362,414.4 L363,412.9 L364,411.3 L365,409.5 L366,407.6 L367,405.6 L368,403.4 L369,401.1 L370,398.7 L371,396.1 L372,393.5 L373,390.8 L374,388.0 L375,385.2 L376,382.3 L377,379.3 L378,376.2 L379,373.2 L380,370.1 L381,367.0 L382,363.8 L383,360.7 L384,357.5 L385,354.3 L386,351.2 L387,348.1 L388,345.0 L389,341.9 L390,338.9 L391,335.9 L392,333.0 L393,330.2 L394,327.4 L395,324.7 L396,322.1 L397,319.6 L398,317.2 L399,314.9 L400,312.7 L401,310.7 L402,308.7 L403,306.9 L404,305.2 L405,303.6 L406,302.1 L407,300.7 L408,299.4 L409,298.2 L410,297.0 L411,296.0 L412,295.0 L413,294.1 L414,293.2 L415,292.4 L416,291.6 L417,290.9 L418,290.3 L419,289.6 L420,289.0 L421,288.4 L422,287.9 L423,287.3 L424,286.8 L425,286.2 L426,285.7 L427,285.1 L428,284.5 L429,283.9 L430,283.2 L431,282.6 L432,281.8 L433,281.1 L434,280.2 L435,279.3 L436,278.4 L437,277.3 L438,276.2 L439,275.0 L440,273.7 L441,272.4 L442,270.9 L443,269.3 L444,267.7 L445,265.9 L446,264.1 L447,262.2 L448,260.2 L449,258.1 L450,256.0 L451,253.7 L452,251.3 L453,248.8 L454,246.2 L455,243.4 L456,240.4 L457,237.3 L458,234.1 L459,230.8 L460,227.3 L461,223.8 L462,220.3 L463,216.7 L464,213.1 L465,209.5 L466,205.9 L467,202.3 L468,198.8 L469,195.3 L470,191.8 L471,188.3 L472,184.9 L473,181.6 L474,178.3 L475,175.1 L476,172.0 L477,169.0 L478,166.0 L479,163.2 L480,160.4 L481,157.8 L482,155.2 L483,152.8 L484,150.4 L485,148.1 L486,145.9 L487,143.8 L488,141.8 L489,139.9 L490,138.1 L491,136.3 L492,134.6 L493,133.1 L494,131.6 L495,130.1 L496,128.8 L497,127.6 L498,126.4 L499,125.4 L500,124.4 L501,123.6 L502,122.8 L503,122.1 L504,121.5 L505,121.1 L506,120.7 L507,120.4 L508,120.2 L509,120.1 L510,120.2 L511,120.3 L512,120.5 L513,120.9 L514,121.3 L515,121.8 L516,122.5 L517,123.2 L518,124.0 L519,125.0 L520,126.0 L521,127.1 L522,128.3 L523,129.6 L524,130.9 L525,132.4 L526,133.9 L527,135.4 L528,137.0 L529,138.7 L530,140.4 L531,142.2 L532,144.0 L533,145.9 L534,147.8 L535,149.7 L536,151.6 L537,153.6 L538,155.6 L539,157.5 L540,159.5 L541,161.5 L542,163.5 L543,165.5 L544,167.5 L545,169.4 L546,171.4 L547,173.3 L548,175.3 L549,177.2 L550,179.2 L551,181.1 L552,183.1 L553,185.1 L554,187.1 L555,189.1 L556,191.1 L557,193.2 L558,195.3 L559,197.5 L560,199.6 L561,201.8 L562,204.1 L563,206.3 L564,208.6 L565,210.9 L566,213.2 L567,215.6 L568,218.0 L569,220.4 L570,222.8 L571,225.2 L572,227.7 L573,230.2 L574,232.7 L575,235.2 L576,237.8 L577,240.3 L578,242.9 L579,245.5 L580,248.1 L581,250.7 L582,253.4 L583,256.0 L584,258.7 L585,261.4 L586,264.0 L587,266.7 L588,269.4 L589,272.2 L590,274.9 L591,277.6 L592,280.3 L593,283.1 L594,285.8 L595,288.6 L596,291.3 L597,294.1 L598,296.8 L599,299.6 L600,302.3 L601,305.1 L602,307.8 L603,310.6 L604,313.3 L605,316.1 L606,318.8 L607,321.6 L608,324.3 L609,327.1 L610,329.8 L611,332.5 L612,335.2 L613,337.9 L614,340.6 L615,343.3 L616,346.0 L617,348.7 L618,351.3 L619,354.0 L620,356.6 L621,359.2 L622,361.8 L623,364.4 L624,367.0 L625,369.6 L626,372.1 L627,374.7 L628,377.2 L629,379.7 L630,382.2 L631,384.6 L632,387.0 L633,389.4 L634,391.8 L635,394.2 L636,396.6 L637,398.9 L638,401.2 L639,403.5 L640,405.7 L641,407.9 L642,410.1 L643,412.3 L644,414.5 L645,416.6 L646,418.7 L647,420.8 L648,422.8 L649,424.9 L650,426.9 L651,428.9 L652,430.9 L653,432.8 L654,434.7 L655,436.6 L656,438.5 L657,440.4 L658,442.2 L659,444.1 L660,445.9 L661,447.7 L662,449.5 L663,451.2 L664,453.0 L665,454.7 L666,456.4 L667,458.1 L668,459.8 L669,461.4 L670,463.1 L671,464.7 L672,466.3 L673,467.9 L674,469.5 L675,471.1 L676,472.7 L677,474.2 L678,475.8 L679,477.3 L680,478.9" stroke="#505c52"/>
<path d="M252,297.2 L253,293.7 L254,290.3 L255,287.2 L256,284.3 L257,281.6 L258,279.0 L259,276.7 L260,274.6 L261,272.6 L262,270.8 L263,269.2 L264,267.8 L265,266.6 L266,265.6 L267,264.7 L268,264.0 L269,263.5 L270,263.2 L271,263.1 L272,263.1 L273,263.3 L274,263.6 L275,264.1 L276,264.8 L277,265.6 L278,266.6 L279,267.7 L280,269.0 L281,270.4 L282,272.0 L283,273.7 L284,275.6 L285,277.6 L286,279.8 L287,282.2 L288,284.7 L289,287.3 L290,290.1 L291,293.1 L292,296.2 L293,299.5 L294,302.9 L295,306.5 L296,310.3 L297,314.2 L298,318.2 L299,322.4 L300,326.8 L301,331.2 L302,335.6 L303,340.1 L304,344.6 L305,349.0 L306,353.4 L307,357.6 L308,361.7 L309,365.6 L310,369.4 L311,373.0 L312,376.4 L313,379.6 L314,382.7 L315,385.6 L316,388.4 L317,391.0 L318,393.5 L319,395.9 L320,398.2 L321,400.3 L322,402.4 L323,404.3 L324,406.1 L325,407.9 L326,409.5 L327,411.1 L328,412.6 L329,414.1 L330,415.5 L331,416.8 L332,418.2 L333,419.4 L334,420.7 L335,421.9 L336,423.0 L337,424.1 L338,425.2 L339,426.2 L340,427.1 L341,428.0 L342,428.8 L343,429.6 L344,430.2 L345,430.8 L346,431.3 L347,431.6 L348,431.9 L349,432.0 L350,432.0 L351,431.9 L352,431.7 L353,431.4 L354,431.0 L355,430.5 L356,429.8 L357,429.0 L358,428.1 L359,427.1 L360,425.9 L361,424.6 L362,423.2 L363,421.6 L364,419.9 L365,418.0 L366,416.0 L367,413.9 L368,411.6 L369,409.2 L370,406.7 L371,404.0 L372,401.3 L373,398.4 L374,395.4 L375,392.3 L376,389.2 L377,386.0 L378,382.7 L379,379.4 L380,376.0 L381,372.6 L382,369.2 L383,365.8 L384,362.4 L385,358.9 L386,355.5 L387,352.1 L388,348.8 L389,345.5 L390,342.2 L391,339.0 L392,335.9 L393,332.9 L394,329.9 L395,327.1 L396,324.3 L397,321.7 L398,319.3 L399,316.9 L400,314.7 L401,312.7 L402,310.7 L403,308.9 L404,307.2 L405,305.6 L406,304.1 L407,302.7 L408,301.4 L409,300.2 L410,299.0 L411,298.0 L412,297.0 L413,296.1 L414,295.2 L415,294.4 L416,293.6 L417,292.9 L418,292.3 L419,291.6 L420,291.0 L421,290.4 L422,289.9 L423,289.3 L424,288.8 L425,288.2 L426,287.7 L427,287.1 L428,286.5 L429,285.9 L430,285.2 L431,284.6 L432,283.8 L433,283.1 L434,282.2 L435,281.3 L436,280.4 L437,279.3 L438,278.2 L439,277.0 L440,275.7 L441,274.4 L442,272.9 L443,271.3 L444,269.7 L445,268.0 L446,266.1 L447,264.2 L448,262.2 L449,260.2 L450,258.0 L451,255.7 L452,253.3 L453,250.8 L454,248.2 L455,245.4 L456,242.4 L457,239.3 L458,236.1 L459,232.7 L460,229.3 L461,225.7 L462,222.2 L463,218.6 L464,215.0 L465,211.4 L466,207.7 L467,204.1 L468,200.6 L469,197.0 L470,193.5 L471,190.0 L472,186.6 L473,183.2 L474,179.9 L475,176.7 L476,173.5 L477,170.5 L478,167.5 L479,164.6 L480,161.8 L481,159.1 L482,156.6 L483,154.1 L484,151.6 L485,149.3 L486,147.1 L487,145.0 L488,142.9 L489,140.9 L490,139.1 L491,137.3 L492,135.5 L493,133.9 L494,132.4 L495,130.9 L496,129.5 L497,128.2 L498,127.0 L499,125.9 L500,124.8 L501,123.9 L502,123.1 L503,122.3 L504,121.7 L505,121.2 L506,120.8 L507,120.4 L508,120.2 L509,120.2 L510,120.2 L511,120.3 L512,120.6 L513,120.9 L514,121.3 L515,121.9 L516,122.5 L517,123.3 L518,124.1 L519,125.1 L520,126.1 L521,127.2 L522,128.4 L523,129.8 L524,131.1 L525,132.6 L526,134.1 L527,135.7 L528,137.3 L529,139.0 L530,140.8 L531,142.6 L532,144.4 L533,146.3 L534,148.2 L535,150.2 L536,152.2 L537,154.1 L538,156.1 L539,158.2 L540,160.2 L541,162.2 L542,164.2 L543,166.2 L544,168.3 L545,170.2 L546,172.2 L547,174.2 L548,176.2 L549,178.1 L550,180.1 L551,182.0 L552,184.0 L553,186.0 L554,188.0 L555,190.1 L556,192.1 L557,194.2 L558,196.3 L559,198.5 L560,200.7 L561,202.9 L562,205.1 L563,207.3 L564,209.6 L565,211.9 L566,214.3 L567,216.6 L568,219.0 L569,221.4 L570,223.8 L571,226.3 L572,228.7 L573,231.2 L574,233.7 L575,236.2 L576,238.8 L577,241.3 L578,243.9 L579,246.5 L580,249.1 L581,251.7 L582,254.3 L583,257.0 L584,259.6 L585,262.3 L586,265.0 L587,267.7 L588,270.4 L589,273.1 L590,275.8 L591,278.5 L592,281.2 L593,284.0 L594,286.7 L595,289.4 L596,292.2 L597,294.9 L598,297.7 L599,300.4 L600,303.2 L601,305.9 L602,308.7 L603,311.4 L604,314.1 L605,316.9 L606,319.6 L607,322.4 L608,325.1 L609,327.8 L610,330.5 L611,333.3 L612,336.0 L613,338.7 L614,341.4 L615,344.0 L616,346.7 L617,349.4 L618,352.0 L619,354.7 L620,357.3 L621,359.9 L622,362.5 L623,365.1 L624,367.7 L625,370.3 L626,372.8 L627,375.3 L628,377.9 L629,380.4 L630,382.8 L631,385.3 L632,387.7 L633,390.1 L634,392.5 L635,394.8 L636,397.2 L637,399.5 L638,401.8 L639,404.0 L640,406.3 L641,408.5 L642,410.7 L643,412.9 L644,415.0 L645,417.1 L646,419.2 L647,421.3 L648,423.3 L649,425.4 L650,427.4 L651,429.4 L652,431.3 L653,433.3 L654,435.2 L655,437.1 L656,439.0 L657,440.8 L658,442.7 L659,444.5 L660,446.3 L661,448.1 L662,449.9 L663,451.6 L664,453.3 L665,455.1 L666,456.8 L667,458.5 L668,460.1 L669,461.8 L670,463.4 L671,465.1 L672,466.7 L673,468.3 L674,469.9 L675,471.4 L676,473.0 L677,474.5 L678,476.1 L679,477.6 L680,479.1" stroke="#6cc497"/>
<path d="M252,294.2 L253,290.6 L254,287.3 L255,284.2 L256,281.3 L257,278.5 L258,276.0 L259,273.7 L260,271.5 L261,269.5 L262,267.8 L263,266.2 L264,264.8 L265,263.6 L266,262.5 L267,261.7 L268,261.0 L269,260.5 L270,260.2 L271,260.1 L272,260.1 L273,260.3 L274,260.7 L275,261.2 L276,261.9 L277,262.7 L278,263.7 L279,264.9 L280,266.2 L281,267.6 L282,269.3 L283,271.0 L284,273.0 L285,275.1 L286,277.3 L287,279.7 L288,282.3 L289,285.0 L290,287.9 L291,290.9 L292,294.0 L293,297.4 L294,300.8 L295,304.4 L296,308.2 L297,312.1 L298,316.2 L299,320.4 L300,324.8 L301,329.2 L302,333.6 L303,338.1 L304,342.5 L305,346.9 L306,351.2 L307,355.4 L308,359.5 L309,363.4 L310,367.1 L311,370.6 L312,373.9 L313,377.1 L314,380.1 L315,383.0 L316,385.7 L317,388.2 L318,390.7 L319,393.0 L320,395.1 L321,397.2 L322,399.1 L323,401.0 L324,402.7 L325,404.4 L326,405.9 L327,407.4 L328,408.8 L329,410.2 L330,411.5 L331,412.7 L332,413.9 L333,415.0 L334,416.1 L335,417.1 L336,418.1 L337,419.0 L338,419.8 L339,420.6 L340,421.3 L341,422.0 L342,422.6 L343,423.2 L344,423.7 L345,424.1 L346,424.4 L347,424.7 L348,424.9 L349,425.0 L350,425.0 L351,424.9 L352,424.8 L353,424.5 L354,424.1 L355,423.6 L356,422.9 L357,422.2 L358,421.3 L359,420.3 L360,419.2 L361,418.0 L362,416.6 L363,415.1 L364,413.5 L365,411.7 L366,409.7 L367,407.7 L368,405.5 L369,403.1 L370,400.7 L371,398.1 L372,395.4 L373,392.6 L374,389.8 L375,386.8 L376,383.8 L377,380.7 L378,377.6 L379,374.4 L380,371.1 L381,367.9 L382,364.6 L383,361.3 L384,358.0 L385,354.7 L386,351.4 L387,348.1 L388,344.9 L389,341.7 L390,338.6 L391,335.5 L392,332.5 L393,329.5 L394,326.7 L395,323.9 L396,321.2 L397,318.7 L398,316.2 L399,313.9 L400,311.7 L401,309.7 L402,307.7 L403,305.9 L404,304.2 L405,302.7 L406,301.2 L407,299.8 L408,298.6 L409,297.4 L410,296.3 L411,295.3 L412,294.3 L413,293.5 L414,292.6 L415,291.9 L416,291.2 L417,290.5 L418,289.9 L419,289.3 L420,288.8 L421,288.2 L422,287.7 L423,287.2 L424,286.7 L425,286.1 L426,285.6 L427,285.1 L428,284.5 L429,283.9 L430,283.2 L431,282.6 L432,281.8 L433,281.1 L434,280.2 L435,279.3 L436,278.4 L437,277.3 L438,276.2 L439,275.0 L440,273.7 L441,272.4 L442,270.9 L443,269.3 L444,267.7 L445,265.9 L446,264.1 L447,262.2 L448,260.2 L449,258.1 L450,256.0 L451,253.7 L452,251.3 L453,248.8 L454,246.2 L455,243.4 L456,240.4 L457,237.3 L458,234.1 L459,230.8 L460,227.3 L461,223.8 L462,220.3 L463,216.7 L464,213.1 L465,209.5 L466,205.9 L467,202.3 L468,198.8 L469,195.3 L470,191.8 L471,188.3 L472,184.9 L473,181.6 L474,178.3 L475,175.1 L476,172.0 L477,169.0 L478,166.0 L479,163.2 L480,160.4 L481,157.8 L482,155.2 L483,152.8 L484,150.4 L485,148.1 L486,145.9 L487,143.8 L488,141.8 L489,139.9 L490,138.1 L491,136.3 L492,134.6 L493,133.1 L494,131.6 L495,130.1 L496,128.8 L497,127.6 L498,126.4 L499,125.4 L500,124.4 L501,123.6 L502,122.8 L503,122.1 L504,121.5 L505,121.1 L506,120.7 L507,120.4 L508,120.2 L509,120.1 L510,120.2 L511,120.3 L512,120.5 L513,120.9 L514,121.3 L515,121.8 L516,122.5 L517,123.2 L518,124.0 L519,125.0 L520,126.0 L521,127.1 L522,128.3 L523,129.6 L524,130.9 L525,132.4 L526,133.9 L527,135.4 L528,137.0 L529,138.7 L530,140.4 L531,142.2 L532,144.0 L533,145.9 L534,147.8 L535,149.7 L536,151.6 L537,153.6 L538,155.5 L539,157.5 L540,159.5 L541,161.5 L542,163.5 L543,165.5 L544,167.5 L545,169.4 L546,171.4 L547,173.3 L548,175.3 L549,177.2 L550,179.2 L551,181.1 L552,183.1 L553,185.0 L554,187.0 L555,189.1 L556,191.1 L557,193.2 L558,195.3 L559,197.5 L560,199.6 L561,201.8 L562,204.0 L563,206.3 L564,208.6 L565,210.9 L566,213.2 L567,215.5 L568,217.9 L569,220.3 L570,222.7 L571,225.2 L572,227.6 L573,230.1 L574,232.6 L575,235.1 L576,237.6 L577,240.2 L578,242.7 L579,245.3 L580,247.9 L581,250.5 L582,253.1 L583,255.8 L584,258.4 L585,261.1 L586,263.7 L587,266.4 L588,269.1 L589,271.8 L590,274.5 L591,277.2 L592,279.9 L593,282.6 L594,285.3 L595,288.1 L596,290.8 L597,293.5 L598,296.3 L599,299.0 L600,301.7 L601,304.5 L602,307.2 L603,309.9 L604,312.7 L605,315.4 L606,318.1 L607,320.8 L608,323.5 L609,326.2 L610,328.9 L611,331.6 L612,334.3 L613,337.0 L614,339.7 L615,342.4 L616,345.0 L617,347.7 L618,350.3 L619,352.9 L620,355.5 L621,358.1 L622,360.7 L623,363.3 L624,365.9 L625,368.4 L626,371.0 L627,373.5 L628,376.0 L629,378.5 L630,380.9 L631,383.4 L632,385.8 L633,388.2 L634,390.6 L635,393.0 L636,395.4 L637,397.7 L638,400.0 L639,402.3 L640,404.5 L641,406.8 L642,409.0 L643,411.2 L644,413.3 L645,415.5 L646,417.6 L647,419.7 L648,421.8 L649,423.8 L650,425.8 L651,427.8 L652,429.8 L653,431.8 L654,433.7 L655,435.7 L656,437.6 L657,439.5 L658,441.3 L659,443.2 L660,445.0 L661,446.8 L662,448.6 L663,450.4 L664,452.2 L665,453.9 L666,455.6 L667,457.4 L668,459.1 L669,460.8 L670,462.4 L671,464.1 L672,465.7 L673,467.4 L674,469.0 L675,470.6 L676,472.2 L677,473.8 L678,475.4 L679,476.9 L680,478.5" stroke="#94b070"/>
<path d="M252,289.2 L253,285.6 L254,282.2 L255,279.1 L256,276.1 L257,273.3 L258,270.8 L259,268.4 L260,266.2 L261,264.3 L262,262.5 L263,260.9 L264,259.5 L265,258.3 L266,257.3 L267,256.4 L268,255.8 L269,255.4 L270,255.1 L271,255.0 L272,255.1 L273,255.4 L274,255.8 L275,256.4 L276,257.2 L277,258.2 L278,259.3 L279,260.6 L280,262.0 L281,263.6 L282,265.4 L283,267.3 L284,269.4 L285,271.7 L286,274.1 L287,276.6 L288,279.3 L289,282.1 L290,285.1 L291,288.3 L292,291.6 L293,295.0 L294,298.5 L295,302.2 L296,306.1 L297,310.1 L298,314.2 L299,318.4 L300,322.8 L301,327.2 L302,331.7 L303,336.2 L304,340.7 L305,345.1 L306,349.5 L307,353.8 L308,358.0 L309,362.0 L310,365.9 L311,369.5 L312,373.0 L313,376.3 L314,379.5 L315,382.5 L316,385.4 L317,388.2 L318,390.8 L319,393.2 L320,395.6 L321,397.8 L322,399.9 L323,401.9 L324,403.9 L325,405.7 L326,407.4 L327,409.0 L328,410.6 L329,412.1 L330,413.5 L331,414.8 L332,416.2 L333,417.4 L334,418.6 L335,419.8 L336,420.9 L337,421.9 L338,422.9 L339,423.8 L340,424.7 L341,425.5 L342,426.2 L343,426.8 L344,427.4 L345,427.9 L346,428.3 L347,428.7 L348,428.9 L349,429.0 L350,429.0 L351,428.9 L352,428.7 L353,428.4 L354,428.0 L355,427.4 L356,426.8 L357,426.0 L358,425.1 L359,424.0 L360,422.9 L361,421.6 L362,420.1 L363,418.6 L364,416.8 L365,415.0 L366,413.0 L367,410.9 L368,408.6 L369,406.2 L370,403.7 L371,401.0 L372,398.3 L373,395.5 L374,392.5 L375,389.5 L376,386.4 L377,383.2 L378,380.0 L379,376.8 L380,373.5 L381,370.1 L382,366.8 L383,363.4 L384,360.0 L385,356.7 L386,353.3 L387,350.0 L388,346.7 L389,343.4 L390,340.2 L391,337.0 L392,334.0 L393,330.9 L394,328.0 L395,325.2 L396,322.5 L397,319.8 L398,317.3 L399,315.0 L400,312.7 L401,310.6 L402,308.6 L403,306.8 L404,305.0 L405,303.4 L406,301.8 L407,300.4 L408,299.0 L409,297.8 L410,296.6 L411,295.5 L412,294.5 L413,293.6 L414,292.7 L415,291.8 L416,291.1 L417,290.3 L418,289.6 L419,289.0 L420,288.3 L421,287.7 L422,287.1 L423,286.5 L424,286.0 L425,285.4 L426,284.8 L427,284.2 L428,283.6 L429,282.9 L430,282.2 L431,281.5 L432,280.8 L433,280.0 L434,279.1 L435,278.2 L436,277.2 L437,276.2 L438,275.1 L439,273.9 L440,272.6 L441,271.2 L442,269.7 L443,268.2 L444,266.5 L445,264.8 L446,263.0 L447,261.1 L448,259.1 L449,257.1 L450,254.9 L451,252.6 L452,250.3 L453,247.8 L454,245.2 L455,242.4 L456,239.5 L457,236.4 L458,233.2 L459,229.8 L460,226.4 L461,222.9 L462,219.4 L463,215.9 L464,212.3 L465,208.7 L466,205.2 L467,201.6 L468,198.1 L469,194.6 L470,191.2 L471,187.8 L472,184.4 L473,181.1 L474,177.8 L475,174.7 L476,171.6 L477,168.6 L478,165.7 L479,162.9 L480,160.2 L481,157.6 L482,155.0 L483,152.6 L484,150.3 L485,148.0 L486,145.9 L487,143.8 L488,141.8 L489,139.9 L490,138.1 L491,136.3 L492,134.7 L493,133.1 L494,131.6 L495,130.2 L496,128.9 L497,127.6 L498,126.5 L499,125.4 L500,124.5 L501,123.6 L502,122.8 L503,122.1 L504,121.6 L505,121.1 L506,120.7 L507,120.4 L508,120.2 L509,120.1 L510,120.2 L511,120.3 L512,120.5 L513,120.9 L514,121.3 L515,121.8 L516,122.5 L517,123.2 L518,124.0 L519,125.0 L520,126.0 L521,127.1 L522,128.3 L523,129.6 L524,130.9 L525,132.4 L526,133.9 L527,135.4 L528,137.0 L529,138.7 L530,140.4 L531,142.2 L532,144.0 L533,145.9 L534,147.8 L535,149.7 L536,151.6 L537,153.6 L538,155.5 L539,157.5 L540,159.5 L541,161.5 L542,163.5 L543,165.5 L544,167.5 L545,169.4 L546,171.4 L547,173.3 L548,175.2 L549,177.2 L550,179.1 L551,181.1 L552,183.0 L553,185.0 L554,187.0 L555,189.0 L556,191.1 L557,193.1 L558,195.2 L559,197.4 L560,199.5 L561,201.7 L562,204.0 L563,206.2 L564,208.5 L565,210.8 L566,213.1 L567,215.5 L568,217.8 L569,220.2 L570,222.6 L571,225.1 L572,227.5 L573,230.0 L574,232.5 L575,235.0 L576,237.6 L577,240.1 L578,242.7 L579,245.3 L580,247.9 L581,250.5 L582,253.1 L583,255.7 L584,258.4 L585,261.0 L586,263.7 L587,266.4 L588,269.1 L589,271.8 L590,274.5 L591,277.2 L592,279.9 L593,282.6 L594,285.3 L595,288.1 L596,290.8 L597,293.5 L598,296.3 L599,299.0 L600,301.7 L601,304.4 L602,307.2 L603,309.9 L604,312.6 L605,315.3 L606,318.1 L607,320.8 L608,323.5 L609,326.2 L610,328.9 L611,331.6 L612,334.3 L613,336.9 L614,339.6 L615,342.2 L616,344.9 L617,347.5 L618,350.2 L619,352.8 L620,355.4 L621,357.9 L622,360.5 L623,363.1 L624,365.6 L625,368.2 L626,370.7 L627,373.2 L628,375.6 L629,378.1 L630,380.5 L631,383.0 L632,385.4 L633,387.8 L634,390.1 L635,392.5 L636,394.8 L637,397.1 L638,399.4 L639,401.7 L640,403.9 L641,406.1 L642,408.3 L643,410.5 L644,412.6 L645,414.7 L646,416.8 L647,418.9 L648,420.9 L649,422.9 L650,424.9 L651,426.9 L652,428.9 L653,430.8 L654,432.7 L655,434.6 L656,436.5 L657,438.3 L658,440.2 L659,442.0 L660,443.8 L661,445.6 L662,447.4 L663,449.1 L664,450.9 L665,452.6 L666,454.3 L667,456.0 L668,457.7 L669,459.4 L670,461.0 L671,462.7 L672,464.3 L673,465.9 L674,467.5 L675,469.1 L676,470.7 L677,472.3 L678,473.8 L679,475.4 L680,477.0" stroke="#f0a070"/>
<path d="M252,279.2 L253,275.0 L254,271.1 L255,267.4 L256,263.9 L257,260.6 L258,257.5 L259,254.7 L260,252.1 L261,249.7 L262,247.5 L263,245.6 L264,243.8 L265,242.3 L266,241.1 L267,240.0 L268,239.2 L269,238.6 L270,238.2 L271,238.0 L272,238.1 L273,238.4 L274,238.9 L275,239.6 L276,240.5 L277,241.5 L278,242.8 L279,244.3 L280,245.9 L281,247.7 L282,249.7 L283,251.9 L284,254.2 L285,256.7 L286,259.3 L287,262.2 L288,265.1 L289,268.3 L290,271.5 L291,275.0 L292,278.5 L293,282.2 L294,286.1 L295,290.0 L296,294.1 L297,298.4 L298,302.7 L299,307.2 L300,311.8 L301,316.4 L302,321.0 L303,325.7 L304,330.4 L305,334.9 L306,339.5 L307,343.9 L308,348.1 L309,352.2 L310,356.1 L311,359.8 L312,363.4 L313,366.7 L314,369.9 L315,373.0 L316,375.9 L317,378.6 L318,381.3 L319,383.8 L320,386.1 L321,388.4 L322,390.5 L323,392.6 L324,394.5 L325,396.4 L326,398.1 L327,399.8 L328,401.4 L329,403.0 L330,404.5 L331,405.9 L332,407.4 L333,408.7 L334,410.1 L335,411.3 L336,412.6 L337,413.8 L338,414.9 L339,415.9 L340,416.9 L341,417.9 L342,418.7 L343,419.5 L344,420.2 L345,420.8 L346,421.2 L347,421.6 L348,421.9 L349,422.0 L350,422.0 L351,422.0 L352,421.8 L353,421.5 L354,421.1 L355,420.6 L356,420.0 L357,419.2 L358,418.4 L359,417.4 L360,416.3 L361,415.0 L362,413.7 L363,412.2 L364,410.5 L365,408.7 L366,406.8 L367,404.7 L368,402.5 L369,400.1 L370,397.7 L371,395.1 L372,392.4 L373,389.6 L374,386.7 L375,383.7 L376,380.6 L377,377.5 L378,374.3 L379,371.1 L380,367.8 L381,364.5 L382,361.2 L383,357.8 L384,354.5 L385,351.1 L386,347.8 L387,344.5 L388,341.2 L389,338.0 L390,334.8 L391,331.7 L392,328.6 L393,325.7 L394,322.8 L395,320.0 L396,317.3 L397,314.7 L398,312.2 L399,309.9 L400,307.7 L401,305.7 L402,303.7 L403,301.9 L404,300.2 L405,298.6 L406,297.1 L407,295.7 L408,294.4 L409,293.2 L410,292.0 L411,291.0 L412,290.0 L413,289.1 L414,288.2 L415,287.4 L416,286.6 L417,285.9 L418,285.3 L419,284.6 L420,284.0 L421,283.4 L422,282.9 L423,282.3 L424,281.8 L425,281.2 L426,280.7 L427,280.1 L428,279.5 L429,278.9 L430,278.2 L431,277.6 L432,276.9 L433,276.1 L434,275.3 L435,274.5 L436,273.6 L437,272.7 L438,271.6 L439,270.5 L440,269.3 L441,268.0 L442,266.7 L443,265.2 L444,263.7 L445,262.1 L446,260.4 L447,258.6 L448,256.7 L449,254.7 L450,252.6 L451,250.4 L452,248.1 L453,245.7 L454,243.1 L455,240.4 L456,237.5 L457,234.4 L458,231.3 L459,228.0 L460,224.6 L461,221.1 L462,217.6 L463,214.1 L464,210.6 L465,207.0 L466,203.5 L467,200.0 L468,196.5 L469,193.0 L470,189.6 L471,186.2 L472,182.9 L473,179.6 L474,176.4 L475,173.2 L476,170.2 L477,167.2 L478,164.3 L479,161.6 L480,158.9 L481,156.3 L482,153.8 L483,151.4 L484,149.1 L485,146.8 L486,144.7 L487,142.7 L488,140.7 L489,138.8 L490,137.1 L491,135.4 L492,133.8 L493,132.2 L494,130.8 L495,129.5 L496,128.2 L497,127.0 L498,125.9 L499,125.0 L500,124.1 L501,123.3 L502,122.5 L503,121.9 L504,121.4 L505,120.9 L506,120.6 L507,120.4 L508,120.2 L509,120.1 L510,120.2 L511,120.3 L512,120.5 L513,120.9 L514,121.3 L515,121.8 L516,122.4 L517,123.1 L518,123.9 L519,124.8 L520,125.8 L521,126.8 L522,128.0 L523,129.2 L524,130.5 L525,131.9 L526,133.4 L527,134.9 L528,136.4 L529,138.1 L530,139.7 L531,141.4 L532,143.2 L533,145.0 L534,146.8 L535,148.7 L536,150.5 L537,152.4 L538,154.3 L539,156.3 L540,158.2 L541,160.1 L542,162.1 L543,164.0 L544,165.9 L545,167.8 L546,169.7 L547,171.6 L548,173.5 L549,175.4 L550,177.3 L551,179.2 L552,181.2 L553,183.1 L554,185.1 L555,187.1 L556,189.1 L557,191.2 L558,193.2 L559,195.4 L560,197.5 L561,199.7 L562,201.9 L563,204.2 L564,206.5 L565,208.8 L566,211.1 L567,213.4 L568,215.8 L569,218.2 L570,220.6 L571,223.0 L572,225.5 L573,228.0 L574,230.5 L575,233.0 L576,235.5 L577,238.1 L578,240.6 L579,243.2 L580,245.8 L581,248.4 L582,251.0 L583,253.7 L584,256.3 L585,259.0 L586,261.7 L587,264.3 L588,267.0 L589,269.7 L590,272.4 L591,275.1 L592,277.8 L593,280.5 L594,283.3 L595,286.0 L596,288.7 L597,291.4 L598,294.2 L599,296.9 L600,299.6 L601,302.3 L602,305.1 L603,307.8 L604,310.5 L605,313.2 L606,315.9 L607,318.6 L608,321.3 L609,324.0 L610,326.7 L611,329.4 L612,332.1 L613,334.8 L614,337.4 L615,340.1 L616,342.7 L617,345.3 L618,348.0 L619,350.6 L620,353.2 L621,355.7 L622,358.3 L623,360.9 L624,363.4 L625,365.9 L626,368.4 L627,370.9 L628,373.4 L629,375.8 L630,378.3 L631,380.7 L632,383.0 L633,385.4 L634,387.7 L635,390.1 L636,392.4 L637,394.6 L638,396.9 L639,399.1 L640,401.3 L641,403.5 L642,405.6 L643,407.8 L644,409.9 L645,411.9 L646,414.0 L647,416.0 L648,418.1 L649,420.0 L650,422.0 L651,424.0 L652,425.9 L653,427.8 L654,429.7 L655,431.6 L656,433.5 L657,435.3 L658,437.1 L659,438.9 L660,440.7 L661,442.5 L662,444.3 L663,446.0 L664,447.7 L665,449.4 L666,451.1 L667,452.8 L668,454.5 L669,456.2 L670,457.8 L671,459.4 L672,461.1 L673,462.7 L674,464.3 L675,465.9 L676,467.5 L677,469.0 L678,470.6 L679,472.2 L680,473.7" stroke="#cc5a5a"/>
<path d="M252,282.2 L253,278.5 L254,275.1 L255,271.8 L256,268.8 L257,265.9 L258,263.3 L259,260.9 L260,258.6 L261,256.6 L262,254.8 L263,253.1 L264,251.7 L265,250.4 L266,249.4 L267,248.5 L268,247.9 L269,247.4 L270,247.1 L271,247.0 L272,247.1 L273,247.4 L274,247.8 L275,248.5 L276,249.3 L277,250.2 L278,251.4 L279,252.7 L280,254.1 L281,255.8 L282,257.6 L283,259.5 L284,261.7 L285,263.9 L286,266.4 L287,269.0 L288,271.7 L289,274.6 L290,277.6 L291,280.8 L292,284.1 L293,287.6 L294,291.2 L295,295.0 L296,298.9 L297,302.9 L298,307.1 L299,311.4 L300,315.8 L301,320.2 L302,324.8 L303,329.3 L304,333.8 L305,338.3 L306,342.7 L307,347.0 L308,351.2 L309,355.2 L310,359.1 L311,362.7 L312,366.2 L313,369.5 L314,372.6 L315,375.6 L316,378.5 L317,381.2 L318,383.8 L319,386.2 L320,388.6 L321,390.8 L322,392.9 L323,394.9 L324,396.8 L325,398.6 L326,400.3 L327,402.0 L328,403.5 L329,405.0 L330,406.5 L331,407.9 L332,409.2 L333,410.5 L334,411.8 L335,413.0 L336,414.2 L337,415.3 L338,416.3 L339,417.3 L340,418.3 L341,419.1 L342,419.9 L343,420.6 L344,421.3 L345,421.8 L346,422.3 L347,422.6 L348,422.9 L349,423.0 L350,423.0 L351,423.0 L352,422.8 L353,422.5 L354,422.1 L355,421.6 L356,421.0 L357,420.2 L358,419.4 L359,418.4 L360,417.3 L361,416.0 L362,414.7 L363,413.2 L364,411.5 L365,409.7 L366,407.8 L367,405.7 L368,403.5 L369,401.1 L370,398.7 L371,396.1 L372,393.4 L373,390.6 L374,387.7 L375,384.7 L376,381.6 L377,378.5 L378,375.3 L379,372.1 L380,368.8 L381,365.5 L382,362.2 L383,358.8 L384,355.5 L385,352.1 L386,348.8 L387,345.5 L388,342.2 L389,339.0 L390,335.8 L391,332.7 L392,329.6 L393,326.7 L394,323.8 L395,321.0 L396,318.3 L397,315.7 L398,313.2 L399,310.9 L400,308.7 L401,306.7 L402,304.7 L403,302.9 L404,301.2 L405,299.6 L406,298.1 L407,296.7 L408,295.4 L409,294.2 L410,293.0 L411,292.0 L412,291.0 L413,290.1 L414,289.2 L415,288.4 L416,287.6 L417,286.9 L418,286.3 L419,285.6 L420,285.0 L421,284.4 L422,283.9 L423,283.3 L424,282.8 L425,282.2 L426,281.7 L427,281.1 L428,280.5 L429,279.9 L430,279.2 L431,278.6 L432,277.9 L433,277.1 L434,276.3 L435,275.4 L436,274.5 L437,273.5 L438,272.4 L439,271.2 L440,270.0 L441,268.6 L442,267.2 L443,265.7 L444,264.1 L445,262.4 L446,260.6 L447,258.8 L448,256.9 L449,254.8 L450,252.7 L451,250.5 L452,248.2 L453,245.7 L454,243.1 L455,240.4 L456,237.5 L457,234.4 L458,231.3 L459,228.0 L460,224.6 L461,221.1 L462,217.6 L463,214.1 L464,210.6 L465,207.0 L466,203.5 L467,200.0 L468,196.5 L469,193.0 L470,189.6 L471,186.2 L472,182.9 L473,179.6 L474,176.4 L475,173.2 L476,170.2 L477,167.2 L478,164.3 L479,161.6 L480,158.9 L481,156.3 L482,153.8 L483,151.4 L484,149.1 L485,146.8 L486,144.7 L487,142.7 L488,140.7 L489,138.8 L490,137.1 L491,135.4 L492,133.8 L493,132.2 L494,130.8 L495,129.5 L496,128.2 L497,127.0 L498,125.9 L499,125.0 L500,124.1 L501,123.3 L502,122.5 L503,121.9 L504,121.4 L505,120.9 L506,120.6 L507,120.4 L508,120.2 L509,120.1 L510,120.2 L511,120.3 L512,120.5 L513,120.9 L514,121.3 L515,121.8 L516,122.4 L517,123.1 L518,124.0 L519,124.9 L520,125.9 L521,127.0 L522,128.2 L523,129.4 L524,130.7 L525,132.1 L526,133.6 L527,135.2 L528,136.7 L529,138.4 L530,140.1 L531,141.8 L532,143.6 L533,145.4 L534,147.3 L535,149.2 L536,151.1 L537,153.0 L538,154.9 L539,156.9 L540,158.9 L541,160.8 L542,162.8 L543,164.8 L544,166.7 L545,168.6 L546,170.6 L547,172.5 L548,174.4 L549,176.3 L550,178.2 L551,180.2 L552,182.1 L553,184.1 L554,186.0 L555,188.1 L556,190.1 L557,192.2 L558,194.3 L559,196.4 L560,198.6 L561,200.8 L562,203.0 L563,205.2 L564,207.5 L565,209.8 L566,212.1 L567,214.5 L568,216.8 L569,219.2 L570,221.7 L571,224.1 L572,226.6 L573,229.0 L574,231.5 L575,234.1 L576,236.6 L577,239.2 L578,241.7 L579,244.3 L580,246.9 L581,249.5 L582,252.1 L583,254.8 L584,257.4 L585,260.1 L586,262.8 L587,265.4 L588,268.1 L589,270.8 L590,273.5 L591,276.3 L592,279.0 L593,281.7 L594,284.4 L595,287.1 L596,289.9 L597,292.6 L598,295.3 L599,298.1 L600,300.8 L601,303.6 L602,306.3 L603,309.0 L604,311.7 L605,314.5 L606,317.2 L607,319.9 L608,322.6 L609,325.3 L610,328.0 L611,330.7 L612,333.4 L613,336.1 L614,338.8 L615,341.4 L616,344.1 L617,346.7 L618,349.3 L619,352.0 L620,354.6 L621,357.2 L622,359.7 L623,362.3 L624,364.9 L625,367.4 L626,369.9 L627,372.4 L628,374.9 L629,377.4 L630,379.8 L631,382.2 L632,384.7 L633,387.1 L634,389.4 L635,391.8 L636,394.1 L637,396.5 L638,398.7 L639,401.0 L640,403.2 L641,405.5 L642,407.7 L643,409.8 L644,412.0 L645,414.1 L646,416.2 L647,418.3 L648,420.3 L649,422.3 L650,424.3 L651,426.3 L652,428.3 L653,430.3 L654,432.2 L655,434.1 L656,436.0 L657,437.8 L658,439.7 L659,441.5 L660,443.4 L661,445.2 L662,446.9 L663,448.7 L664,450.5 L665,452.2 L666,453.9 L667,455.6 L668,457.3 L669,459.0 L670,460.7 L671,462.3 L672,464.0 L673,465.6 L674,467.2 L675,468.9 L676,470.5 L677,472.1 L678,473.6 L679,475.2 L680,476.8" stroke="#d86a50"/>
<path d="M252,287.2 L253,283.7 L254,280.4 L255,277.3 L256,274.4 L257,271.7 L258,269.2 L259,266.9 L260,264.8 L261,262.9 L262,261.2 L263,259.6 L264,258.3 L265,257.1 L266,256.1 L267,255.4 L268,254.7 L269,254.3 L270,254.1 L271,254.0 L272,254.1 L273,254.4 L274,254.8 L275,255.4 L276,256.2 L277,257.1 L278,258.2 L279,259.4 L280,260.8 L281,262.4 L282,264.1 L283,266.0 L284,268.0 L285,270.2 L286,272.6 L287,275.1 L288,277.7 L289,280.5 L290,283.4 L291,286.5 L292,289.8 L293,293.1 L294,296.7 L295,300.3 L296,304.1 L297,308.1 L298,312.2 L299,316.4 L300,320.8 L301,325.2 L302,329.6 L303,334.1 L304,338.6 L305,343.1 L306,347.4 L307,351.7 L308,355.9 L309,359.8 L310,363.6 L311,367.2 L312,370.7 L313,373.9 L314,377.0 L315,380.0 L316,382.8 L317,385.4 L318,388.0 L319,390.4 L320,392.6 L321,394.8 L322,396.8 L323,398.7 L324,400.5 L325,402.2 L326,403.8 L327,405.4 L328,406.8 L329,408.2 L330,409.5 L331,410.7 L332,411.9 L333,413.0 L334,414.1 L335,415.1 L336,416.1 L337,417.0 L338,417.8 L339,418.6 L340,419.3 L341,420.0 L342,420.6 L343,421.2 L344,421.7 L345,422.1 L346,422.4 L347,422.7 L348,422.9 L349,423.0 L350,423.0 L351,422.9 L352,422.8 L353,422.5 L354,422.1 L355,421.6 L356,420.9 L357,420.2 L358,419.3 L359,418.3 L360,417.2 L361,416.0 L362,414.6 L363,413.1 L364,411.5 L365,409.7 L366,407.7 L367,405.7 L368,403.5 L369,401.1 L370,398.7 L371,396.1 L372,393.4 L373,390.6 L374,387.8 L375,384.8 L376,381.8 L377,378.7 L378,375.6 L379,372.4 L380,369.2 L381,365.9 L382,362.7 L383,359.4 L384,356.1 L385,352.8 L386,349.5 L387,346.3 L388,343.1 L389,339.9 L390,336.7 L391,333.6 L392,330.6 L393,327.7 L394,324.8 L395,322.0 L396,319.3 L397,316.8 L398,314.3 L399,311.9 L400,309.7 L401,307.6 L402,305.7 L403,303.8 L404,302.1 L405,300.4 L406,298.9 L407,297.4 L408,296.1 L409,294.8 L410,293.6 L411,292.5 L412,291.5 L413,290.5 L414,289.6 L415,288.8 L416,288.0 L417,287.2 L418,286.5 L419,285.9 L420,285.2 L421,284.6 L422,284.0 L423,283.4 L424,282.8 L425,282.3 L426,281.7 L427,281.1 L428,280.5 L429,279.9 L430,279.2 L431,278.6 L432,277.9 L433,277.1 L434,276.3 L435,275.5 L436,274.6 L437,273.7 L438,272.6 L439,271.5 L440,270.3 L441,269.0 L442,267.7 L443,266.2 L444,264.7 L445,263.1 L446,261.4 L447,259.6 L448,257.7 L449,255.7 L450,253.6 L451,251.4 L452,249.1 L453,246.7 L454,244.1 L455,241.4 L456,238.5 L457,235.4 L458,232.2 L459,228.9 L460,225.5 L461,222.0 L462,218.5 L463,215.0 L464,211.4 L465,207.8 L466,204.3 L467,200.7 L468,197.2 L469,193.7 L470,190.2 L471,186.8 L472,183.4 L473,180.1 L474,176.8 L475,173.6 L476,170.5 L477,167.5 L478,164.6 L479,161.8 L480,159.1 L481,156.4 L482,153.9 L483,151.5 L484,149.1 L485,146.9 L486,144.7 L487,142.7 L488,140.7 L489,138.8 L490,137.1 L491,135.4 L492,133.8 L493,132.2 L494,130.8 L495,129.5 L496,128.2 L497,127.0 L498,125.9 L499,125.0 L500,124.1 L501,123.3 L502,122.5 L503,121.9 L504,121.4 L505,121.0 L506,120.6 L507,120.4 L508,120.2 L509,120.1 L510,120.2 L511,120.3 L512,120.5 L513,120.9 L514,121.3 L515,121.8 L516,122.4 L517,123.1 L518,124.0 L519,124.9 L520,125.9 L521,127.0 L522,128.2 L523,129.4 L524,130.7 L525,132.2 L526,133.6 L527,135.2 L528,136.7 L529,138.4 L530,140.1 L531,141.8 L532,143.6 L533,145.4 L534,147.3 L535,149.2 L536,151.1 L537,153.0 L538,155.0 L539,156.9 L540,158.9 L541,160.8 L542,162.8 L543,164.8 L544,166.7 L545,168.7 L546,170.6 L547,172.5 L548,174.4 L549,176.3 L550,178.3 L551,180.2 L552,182.1 L553,184.1 L554,186.1 L555,188.1 L556,190.1 L557,192.2 L558,194.3 L559,196.4 L560,198.6 L561,200.8 L562,203.0 L563,205.3 L564,207.6 L565,209.9 L566,212.2 L567,214.5 L568,216.9 L569,219.3 L570,221.7 L571,224.2 L572,226.6 L573,229.1 L574,231.6 L575,234.2 L576,236.7 L577,239.3 L578,241.8 L579,244.4 L580,247.0 L581,249.7 L582,252.3 L583,254.9 L584,257.6 L585,260.3 L586,262.9 L587,265.6 L588,268.3 L589,271.0 L590,273.7 L591,276.5 L592,279.2 L593,281.9 L594,284.7 L595,287.4 L596,290.1 L597,292.9 L598,295.6 L599,298.4 L600,301.1 L601,303.9 L602,306.6 L603,309.4 L604,312.1 L605,314.8 L606,317.6 L607,320.3 L608,323.0 L609,325.8 L610,328.5 L611,331.2 L612,333.9 L613,336.6 L614,339.3 L615,342.0 L616,344.6 L617,347.3 L618,349.9 L619,352.6 L620,355.2 L621,357.8 L622,360.4 L623,363.0 L624,365.5 L625,368.1 L626,370.6 L627,373.2 L628,375.7 L629,378.1 L630,380.6 L631,383.1 L632,385.5 L633,387.9 L634,390.3 L635,392.6 L636,395.0 L637,397.3 L638,399.6 L639,401.8 L640,404.1 L641,406.3 L642,408.5 L643,410.7 L644,412.8 L645,414.9 L646,417.0 L647,419.1 L648,421.2 L649,423.2 L650,425.2 L651,427.2 L652,429.2 L653,431.1 L654,433.1 L655,435.0 L656,436.9 L657,438.7 L658,440.6 L659,442.4 L660,444.2 L661,446.0 L662,447.8 L663,449.6 L664,451.3 L665,453.1 L666,454.8 L667,456.5 L668,458.2 L669,459.8 L670,461.5 L671,463.1 L672,464.8 L673,466.4 L674,468.0 L675,469.6 L676,471.2 L677,472.8 L678,474.3 L679,475.9 L680,477.4" stroke="#a8404e"/>
<path d="M252,290.2 L253,286.7 L254,283.4 L255,280.3 L256,277.4 L257,274.7 L258,272.2 L259,269.9 L260,267.8 L261,265.9 L262,264.2 L263,262.6 L264,261.3 L265,260.1 L266,259.1 L267,258.4 L268,257.7 L269,257.3 L270,257.1 L271,257.0 L272,257.1 L273,257.4 L274,257.8 L275,258.4 L276,259.1 L277,260.0 L278,261.0 L279,262.2 L280,263.5 L281,265.0 L282,266.7 L283,268.5 L284,270.4 L285,272.5 L286,274.7 L287,277.1 L288,279.7 L289,282.4 L290,285.2 L291,288.2 L292,291.4 L293,294.6 L294,298.1 L295,301.7 L296,305.4 L297,309.3 L298,313.3 L299,317.5 L300,321.8 L301,326.1 L302,330.5 L303,334.9 L304,339.3 L305,343.7 L306,348.0 L307,352.1 L308,356.2 L309,360.0 L310,363.7 L311,367.2 L312,370.5 L313,373.6 L314,376.6 L315,379.4 L316,382.1 L317,384.7 L318,387.1 L319,389.3 L320,391.5 L321,393.5 L322,395.4 L323,397.2 L324,398.9 L325,400.5 L326,402.1 L327,403.5 L328,404.9 L329,406.2 L330,407.5 L331,408.7 L332,409.8 L333,410.9 L334,411.9 L335,412.8 L336,413.7 L337,414.5 L338,415.3 L339,416.0 L340,416.7 L341,417.3 L342,417.8 L343,418.3 L344,418.8 L345,419.2 L346,419.5 L347,419.7 L348,419.9 L349,420.0 L350,420.0 L351,420.0 L352,419.8 L353,419.5 L354,419.2 L355,418.7 L356,418.1 L357,417.4 L358,416.6 L359,415.7 L360,414.7 L361,413.5 L362,412.2 L363,410.7 L364,409.1 L365,407.4 L366,405.5 L367,403.5 L368,401.4 L369,399.1 L370,396.7 L371,394.1 L372,391.5 L373,388.8 L374,386.0 L375,383.1 L376,380.1 L377,377.1 L378,374.1 L379,371.0 L380,367.8 L381,364.6 L382,361.5 L383,358.2 L384,355.0 L385,351.8 L386,348.6 L387,345.5 L388,342.3 L389,339.2 L390,336.2 L391,333.1 L392,330.2 L393,327.3 L394,324.5 L395,321.8 L396,319.2 L397,316.6 L398,314.2 L399,311.9 L400,309.7 L401,307.7 L402,305.7 L403,303.9 L404,302.2 L405,300.6 L406,299.1 L407,297.7 L408,296.4 L409,295.2 L410,294.0 L411,293.0 L412,292.0 L413,291.1 L414,290.2 L415,289.4 L416,288.6 L417,287.9 L418,287.3 L419,286.6 L420,286.0 L421,285.4 L422,284.9 L423,284.3 L424,283.8 L425,283.2 L426,282.7 L427,282.1 L428,281.5 L429,280.9 L430,280.2 L431,279.6 L432,278.9 L433,278.1 L434,277.3 L435,276.4 L436,275.5 L437,274.5 L438,273.4 L439,272.2 L440,271.0 L441,269.6 L442,268.2 L443,266.7 L444,265.1 L445,263.4 L446,261.6 L447,259.8 L448,257.9 L449,255.8 L450,253.7 L451,251.5 L452,249.2 L453,246.7 L454,244.1 L455,241.4 L456,238.5 L457,235.4 L458,232.2 L459,228.9 L460,225.5 L461,222.0 L462,218.5 L463,215.0 L464,211.4 L465,207.8 L466,204.3 L467,200.7 L468,197.2 L469,193.7 L470,190.2 L471,186.8 L472,183.4 L473,180.1 L474,176.8 L475,173.6 L476,170.5 L477,167.5 L478,164.6 L479,161.8 L480,159.1 L481,156.4 L482,153.9 L483,151.5 L484,149.1 L485,146.9 L486,144.7 L487,142.7 L488,140.7 L489,138.8 L490,137.1 L491,135.4 L492,133.8 L493,132.2 L494,130.8 L495,129.5 L496,128.2 L497,127.0 L498,125.9 L499,125.0 L500,124.1 L501,123.3 L502,122.5 L503,121.9 L504,121.4 L505,121.0 L506,120.6 L507,120.4 L508,120.2 L509,120.1 L510,120.2 L511,120.3 L512,120.5 L513,120.9 L514,121.3 L515,121.8 L516,122.4 L517,123.1 L518,124.0 L519,124.9 L520,125.9 L521,127.0 L522,128.2 L523,129.4 L524,130.7 L525,132.2 L526,133.6 L527,135.2 L528,136.8 L529,138.4 L530,140.1 L531,141.8 L532,143.6 L533,145.4 L534,147.3 L535,149.2 L536,151.1 L537,153.0 L538,155.0 L539,156.9 L540,158.9 L541,160.8 L542,162.8 L543,164.8 L544,166.7 L545,168.7 L546,170.6 L547,172.5 L548,174.4 L549,176.3 L550,178.3 L551,180.2 L552,182.1 L553,184.1 L554,186.1 L555,188.1 L556,190.1 L557,192.2 L558,194.3 L559,196.5 L560,198.6 L561,200.8 L562,203.0 L563,205.3 L564,207.6 L565,209.9 L566,212.2 L567,214.6 L568,216.9 L569,219.3 L570,221.8 L571,224.2 L572,226.7 L573,229.2 L574,231.7 L575,234.2 L576,236.7 L577,239.3 L578,241.9 L579,244.5 L580,247.1 L581,249.7 L582,252.3 L583,255.0 L584,257.6 L585,260.3 L586,263.0 L587,265.7 L588,268.4 L589,271.1 L590,273.8 L591,276.5 L592,279.3 L593,282.0 L594,284.7 L595,287.5 L596,290.2 L597,293.0 L598,295.7 L599,298.5 L600,301.2 L601,304.0 L602,306.7 L603,309.5 L604,312.2 L605,315.0 L606,317.7 L607,320.4 L608,323.2 L609,325.9 L610,328.6 L611,331.3 L612,334.1 L613,336.8 L614,339.4 L615,342.1 L616,344.8 L617,347.5 L618,350.1 L619,352.8 L620,355.4 L621,358.0 L622,360.6 L623,363.2 L624,365.8 L625,368.3 L626,370.9 L627,373.4 L628,375.9 L629,378.4 L630,380.9 L631,383.4 L632,385.8 L633,388.2 L634,390.7 L635,393.0 L636,395.4 L637,397.8 L638,400.1 L639,402.4 L640,404.6 L641,406.9 L642,409.1 L643,411.3 L644,413.5 L645,415.6 L646,417.8 L647,419.9 L648,422.0 L649,424.0 L650,426.1 L651,428.1 L652,430.1 L653,432.0 L654,434.0 L655,435.9 L656,437.9 L657,439.8 L658,441.6 L659,443.5 L660,445.3 L661,447.2 L662,449.0 L663,450.8 L664,452.5 L665,454.3 L666,456.0 L667,457.8 L668,459.5 L669,461.2 L670,462.9 L671,464.5 L672,466.2 L673,467.8 L674,469.5 L675,471.1 L676,472.7 L677,474.3 L678,475.9 L679,477.5 L680,479.0" stroke="#c77aa8"/>
<path d="M252,288.2 L253,284.9 L254,281.9 L255,279.1 L256,276.4 L257,273.9 L258,271.7 L259,269.6 L260,267.6 L261,265.9 L262,264.3 L263,263.0 L264,261.7 L265,260.7 L266,259.8 L267,259.1 L268,258.6 L269,258.2 L270,258.0 L271,258.0 L272,258.1 L273,258.4 L274,258.8 L275,259.4 L276,260.1 L277,260.9 L278,262.0 L279,263.1 L280,264.5 L281,265.9 L282,267.6 L283,269.3 L284,271.3 L285,273.3 L286,275.5 L287,277.9 L288,280.4 L289,283.1 L290,285.9 L291,288.8 L292,291.9 L293,295.1 L294,298.5 L295,302.0 L296,305.7 L297,309.5 L298,313.5 L299,317.6 L300,321.8 L301,326.0 L302,330.3 L303,334.7 L304,339.0 L305,343.2 L306,347.4 L307,351.5 L308,355.4 L309,359.1 L310,362.7 L311,366.1 L312,369.3 L313,372.3 L314,375.2 L315,377.9 L316,380.5 L317,382.9 L318,385.2 L319,387.3 L320,389.4 L321,391.3 L322,393.1 L323,394.8 L324,396.4 L325,398.0 L326,399.4 L327,400.8 L328,402.1 L329,403.3 L330,404.5 L331,405.6 L332,406.7 L333,407.6 L334,408.6 L335,409.4 L336,410.3 L337,411.0 L338,411.7 L339,412.4 L340,413.0 L341,413.5 L342,414.0 L343,414.5 L344,414.9 L345,415.2 L346,415.5 L347,415.7 L348,415.9 L349,416.0 L350,416.0 L351,416.0 L352,415.8 L353,415.6 L354,415.3 L355,414.8 L356,414.3 L357,413.7 L358,412.9 L359,412.0 L360,411.0 L361,409.9 L362,408.7 L363,407.3 L364,405.8 L365,404.1 L366,402.3 L367,400.3 L368,398.2 L369,396.0 L370,393.7 L371,391.2 L372,388.6 L373,386.0 L374,383.2 L375,380.4 L376,377.5 L377,374.6 L378,371.6 L379,368.5 L380,365.4 L381,362.3 L382,359.2 L383,356.1 L384,352.9 L385,349.8 L386,346.6 L387,343.5 L388,340.5 L389,337.4 L390,334.4 L391,331.5 L392,328.6 L393,325.8 L394,323.1 L395,320.4 L396,317.8 L397,315.4 L398,313.1 L399,310.8 L400,308.7 L401,306.8 L402,304.9 L403,303.2 L404,301.5 L405,300.0 L406,298.6 L407,297.3 L408,296.1 L409,294.9 L410,293.9 L411,292.9 L412,292.0 L413,291.2 L414,290.4 L415,289.7 L416,289.0 L417,288.4 L418,287.8 L419,287.2 L420,286.7 L421,286.2 L422,285.7 L423,285.1 L424,284.6 L425,284.1 L426,283.6 L427,283.1 L428,282.5 L429,281.9 L430,281.2 L431,280.6 L432,279.9 L433,279.1 L434,278.3 L435,277.4 L436,276.5 L437,275.5 L438,274.4 L439,273.2 L440,272.0 L441,270.6 L442,269.2 L443,267.7 L444,266.1 L445,264.4 L446,262.6 L447,260.8 L448,258.9 L449,256.8 L450,254.7 L451,252.5 L452,250.2 L453,247.7 L454,245.1 L455,242.4 L456,239.5 L457,236.4 L458,233.2 L459,229.9 L460,226.5 L461,223.1 L462,219.6 L463,216.0 L464,212.5 L465,208.9 L466,205.4 L467,201.8 L468,198.3 L469,194.8 L470,191.3 L471,187.9 L472,184.5 L473,181.2 L474,178.0 L475,174.8 L476,171.7 L477,168.7 L478,165.8 L479,163.0 L480,160.3 L481,157.6 L482,155.1 L483,152.7 L484,150.3 L485,148.0 L486,145.9 L487,143.8 L488,141.8 L489,139.9 L490,138.1 L491,136.3 L492,134.7 L493,133.1 L494,131.6 L495,130.2 L496,128.9 L497,127.6 L498,126.5 L499,125.4 L500,124.5 L501,123.6 L502,122.8 L503,122.1 L504,121.6 L505,121.1 L506,120.7 L507,120.4 L508,120.2 L509,120.1 L510,120.2 L511,120.3 L512,120.5 L513,120.9 L514,121.3 L515,121.8 L516,122.4 L517,123.1 L518,124.0 L519,124.9 L520,125.9 L521,127.0 L522,128.2 L523,129.4 L524,130.7 L525,132.1 L526,133.6 L527,135.2 L528,136.7 L529,138.4 L530,140.1 L531,141.8 L532,143.6 L533,145.4 L534,147.3 L535,149.2 L536,151.1 L537,153.0 L538,155.0 L539,156.9 L540,158.9 L541,160.8 L542,162.8 L543,164.8 L544,166.7 L545,168.6 L546,170.6 L547,172.5 L548,174.4 L549,176.3 L550,178.2 L551,180.2 L552,182.1 L553,184.1 L554,186.1 L555,188.1 L556,190.1 L557,192.2 L558,194.3 L559,196.4 L560,198.6 L561,200.8 L562,203.0 L563,205.3 L564,207.5 L565,209.8 L566,212.2 L567,214.5 L568,216.9 L569,219.3 L570,221.7 L571,224.2 L572,226.6 L573,229.1 L574,231.6 L575,234.1 L576,236.7 L577,239.2 L578,241.8 L579,244.4 L580,247.0 L581,249.6 L582,252.2 L583,254.9 L584,257.5 L585,260.2 L586,262.9 L587,265.6 L588,268.3 L589,271.0 L590,273.7 L591,276.4 L592,279.1 L593,281.8 L594,284.6 L595,287.3 L596,290.1 L597,292.8 L598,295.5 L599,298.3 L600,301.0 L601,303.8 L602,306.5 L603,309.2 L604,312.0 L605,314.7 L606,317.5 L607,320.2 L608,322.9 L609,325.6 L610,328.3 L611,331.0 L612,333.7 L613,336.4 L614,339.1 L615,341.8 L616,344.4 L617,347.1 L618,349.7 L619,352.4 L620,355.0 L621,357.6 L622,360.2 L623,362.8 L624,365.3 L625,367.9 L626,370.4 L627,372.9 L628,375.4 L629,377.9 L630,380.3 L631,382.8 L632,385.3 L633,387.7 L634,390.1 L635,392.5 L636,394.8 L637,397.2 L638,399.5 L639,401.8 L640,404.0 L641,406.3 L642,408.5 L643,410.7 L644,412.8 L645,415.0 L646,417.1 L647,419.2 L648,421.3 L649,423.3 L650,425.4 L651,427.4 L652,429.4 L653,431.3 L654,433.3 L655,435.2 L656,437.1 L657,439.0 L658,440.9 L659,442.8 L660,444.6 L661,446.4 L662,448.2 L663,450.0 L664,451.8 L665,453.5 L666,455.3 L667,457.0 L668,458.7 L669,460.4 L670,462.1 L671,463.8 L672,465.4 L673,467.1 L674,468.7 L675,470.3 L676,472.0 L677,473.6 L678,475.2 L679,476.7 L680,478.3" stroke="#9b75c4"/>
<path d="M252,277.2 L253,274.0 L254,271.0 L255,268.3 L256,265.7 L257,263.3 L258,261.1 L259,259.1 L260,257.3 L261,255.6 L262,254.2 L263,252.9 L264,251.8 L265,250.9 L266,250.1 L267,249.6 L268,249.1 L269,248.9 L270,248.8 L271,248.9 L272,249.1 L273,249.5 L274,250.0 L275,250.8 L276,251.6 L277,252.7 L278,253.9 L279,255.3 L280,256.8 L281,258.5 L282,260.3 L283,262.3 L284,264.5 L285,266.8 L286,269.2 L287,271.8 L288,274.6 L289,277.5 L290,280.5 L291,283.7 L292,287.1 L293,290.5 L294,294.2 L295,297.9 L296,301.8 L297,305.9 L298,310.0 L299,314.3 L300,318.8 L301,323.2 L302,327.8 L303,332.3 L304,336.8 L305,341.3 L306,345.7 L307,350.0 L308,354.2 L309,358.1 L310,361.9 L311,365.5 L312,368.9 L313,372.2 L314,375.3 L315,378.2 L316,381.0 L317,383.7 L318,386.2 L319,388.5 L320,390.8 L321,392.9 L322,394.9 L323,396.8 L324,398.6 L325,400.3 L326,401.9 L327,403.4 L328,404.8 L329,406.2 L330,407.5 L331,408.7 L332,409.9 L333,411.0 L334,412.1 L335,413.1 L336,414.1 L337,415.0 L338,415.8 L339,416.6 L340,417.3 L341,418.0 L342,418.6 L343,419.2 L344,419.7 L345,420.1 L346,420.4 L347,420.7 L348,420.9 L349,421.0 L350,421.0 L351,420.9 L352,420.7 L353,420.4 L354,420.0 L355,419.5 L356,418.9 L357,418.1 L358,417.2 L359,416.2 L360,415.1 L361,413.9 L362,412.5 L363,411.0 L364,409.3 L365,407.6 L366,405.6 L367,403.6 L368,401.4 L369,399.1 L370,396.7 L371,394.1 L372,391.5 L373,388.8 L374,385.9 L375,383.0 L376,380.0 L377,377.0 L378,373.9 L379,370.7 L380,367.6 L381,364.3 L382,361.1 L383,357.8 L384,354.6 L385,351.3 L386,348.1 L387,344.9 L388,341.7 L389,338.5 L390,335.4 L391,332.4 L392,329.4 L393,326.4 L394,323.6 L395,320.9 L396,318.2 L397,315.7 L398,313.2 L399,310.9 L400,308.7 L401,306.7 L402,304.7 L403,302.9 L404,301.2 L405,299.5 L406,298.0 L407,296.6 L408,295.2 L409,293.9 L410,292.8 L411,291.7 L412,290.6 L413,289.7 L414,288.7 L415,287.9 L416,287.1 L417,286.3 L418,285.6 L419,284.9 L420,284.3 L421,283.7 L422,283.1 L423,282.5 L424,281.9 L425,281.3 L426,280.7 L427,280.1 L428,279.5 L429,278.9 L430,278.2 L431,277.6 L432,276.9 L433,276.1 L434,275.3 L435,274.5 L436,273.6 L437,272.7 L438,271.6 L439,270.5 L440,269.3 L441,268.0 L442,266.7 L443,265.2 L444,263.7 L445,262.1 L446,260.4 L447,258.6 L448,256.7 L449,254.7 L450,252.6 L451,250.4 L452,248.1 L453,245.7 L454,243.1 L455,240.4 L456,237.5 L457,234.4 L458,231.3 L459,228.0 L460,224.6 L461,221.1 L462,217.6 L463,214.1 L464,210.6 L465,207.0 L466,203.5 L467,200.0 L468,196.5 L469,193.0 L470,189.6 L471,186.2 L472,182.9 L473,179.6 L474,176.4 L475,173.2 L476,170.2 L477,167.2 L478,164.3 L479,161.6 L480,158.9 L481,156.3 L482,153.8 L483,151.4 L484,149.1 L485,146.8 L486,144.7 L487,142.7 L488,140.7 L489,138.8 L490,137.1 L491,135.4 L492,133.8 L493,132.2 L494,130.8 L495,129.5 L496,128.2 L497,127.0 L498,125.9 L499,125.0 L500,124.1 L501,123.3 L502,122.5 L503,121.9 L504,121.4 L505,120.9 L506,120.6 L507,120.4 L508,120.2 L509,120.1 L510,120.2 L511,120.3 L512,120.5 L513,120.9 L514,121.3 L515,121.8 L516,122.5 L517,123.2 L518,124.0 L519,125.0 L520,126.0 L521,127.1 L522,128.3 L523,129.6 L524,130.9 L525,132.4 L526,133.9 L527,135.4 L528,137.0 L529,138.7 L530,140.4 L531,142.2 L532,144.0 L533,145.9 L534,147.8 L535,149.7 L536,151.6 L537,153.6 L538,155.5 L539,157.5 L540,159.5 L541,161.5 L542,163.5 L543,165.5 L544,167.5 L545,169.4 L546,171.4 L547,173.3 L548,175.2 L549,177.2 L550,179.1 L551,181.1 L552,183.0 L553,185.0 L554,187.0 L555,189.0 L556,191.1 L557,193.2 L558,195.3 L559,197.4 L560,199.6 L561,201.8 L562,204.0 L563,206.2 L564,208.5 L565,210.8 L566,213.1 L567,215.5 L568,217.8 L569,220.2 L570,222.6 L571,225.0 L572,227.5 L573,230.0 L574,232.5 L575,235.0 L576,237.5 L577,240.0 L578,242.6 L579,245.2 L580,247.7 L581,250.3 L582,253.0 L583,255.6 L584,258.2 L585,260.9 L586,263.5 L587,266.2 L588,268.9 L589,271.5 L590,274.2 L591,276.9 L592,279.6 L593,282.3 L594,285.0 L595,287.7 L596,290.5 L597,293.2 L598,295.9 L599,298.6 L600,301.3 L601,304.0 L602,306.7 L603,309.5 L604,312.2 L605,314.9 L606,317.6 L607,320.3 L608,323.0 L609,325.7 L610,328.4 L611,331.0 L612,333.7 L613,336.4 L614,339.0 L615,341.7 L616,344.3 L617,346.9 L618,349.5 L619,352.1 L620,354.7 L621,357.3 L622,359.9 L623,362.4 L624,365.0 L625,367.5 L626,370.0 L627,372.5 L628,375.0 L629,377.4 L630,379.8 L631,382.3 L632,384.6 L633,387.0 L634,389.4 L635,391.7 L636,394.0 L637,396.3 L638,398.6 L639,400.8 L640,403.0 L641,405.2 L642,407.4 L643,409.5 L644,411.7 L645,413.8 L646,415.8 L647,417.9 L648,419.9 L649,421.9 L650,423.9 L651,425.9 L652,427.8 L653,429.7 L654,431.7 L655,433.5 L656,435.4 L657,437.3 L658,439.1 L659,440.9 L660,442.7 L661,444.5 L662,446.2 L663,448.0 L664,449.7 L665,451.4 L666,453.1 L667,454.8 L668,456.5 L669,458.2 L670,459.8 L671,461.5 L672,463.1 L673,464.7 L674,466.3 L675,467.9 L676,469.5 L677,471.0 L678,472.6 L679,474.1 L680,475.7" stroke="#e07a6a"/>
<path d="M252,281.2 L253,277.9 L254,274.8 L255,271.9 L256,269.3 L257,266.8 L258,264.5 L259,262.4 L260,260.5 L261,258.7 L262,257.2 L263,255.8 L264,254.6 L265,253.6 L266,252.8 L267,252.1 L268,251.6 L269,251.2 L270,251.0 L271,251.0 L272,251.1 L273,251.4 L274,251.8 L275,252.4 L276,253.2 L277,254.2 L278,255.3 L279,256.6 L280,258.0 L281,259.6 L282,261.4 L283,263.3 L284,265.4 L285,267.7 L286,270.1 L287,272.6 L288,275.3 L289,278.1 L290,281.1 L291,284.3 L292,287.6 L293,291.0 L294,294.5 L295,298.2 L296,302.1 L297,306.1 L298,310.2 L299,314.4 L300,318.8 L301,323.2 L302,327.6 L303,332.1 L304,336.5 L305,340.9 L306,345.1 L307,349.3 L308,353.3 L309,357.2 L310,360.8 L311,364.3 L312,367.5 L313,370.7 L314,373.6 L315,376.4 L316,379.0 L317,381.5 L318,383.8 L319,386.0 L320,388.1 L321,390.1 L322,391.9 L323,393.7 L324,395.3 L325,396.9 L326,398.3 L327,399.7 L328,401.1 L329,402.3 L330,403.5 L331,404.6 L332,405.6 L333,406.5 L334,407.4 L335,408.1 L336,408.8 L337,409.4 L338,410.0 L339,410.5 L340,410.9 L341,411.3 L342,411.7 L343,412.0 L344,412.2 L345,412.5 L346,412.7 L347,412.8 L348,412.9 L349,413.0 L350,413.0 L351,413.0 L352,412.9 L353,412.7 L354,412.4 L355,412.0 L356,411.5 L357,410.9 L358,410.2 L359,409.4 L360,408.4 L361,407.4 L362,406.2 L363,404.9 L364,403.4 L365,401.8 L366,400.1 L367,398.2 L368,396.1 L369,394.0 L370,391.7 L371,389.2 L372,386.7 L373,384.1 L374,381.4 L375,378.7 L376,375.8 L377,372.9 L378,370.0 L379,367.0 L380,364.0 L381,360.9 L382,357.8 L383,354.7 L384,351.6 L385,348.5 L386,345.5 L387,342.4 L388,339.4 L389,336.4 L390,333.4 L391,330.5 L392,327.6 L393,324.8 L394,322.1 L395,319.5 L396,316.9 L397,314.4 L398,312.1 L399,309.9 L400,307.7 L401,305.7 L402,303.8 L403,302.1 L404,300.4 L405,298.9 L406,297.4 L407,296.0 L408,294.8 L409,293.6 L410,292.5 L411,291.5 L412,290.6 L413,289.7 L414,288.9 L415,288.1 L416,287.4 L417,286.7 L418,286.1 L419,285.5 L420,284.9 L421,284.3 L422,283.8 L423,283.2 L424,282.7 L425,282.2 L426,281.6 L427,281.1 L428,280.5 L429,279.9 L430,279.2 L431,278.6 L432,277.9 L433,277.1 L434,276.3 L435,275.4 L436,274.5 L437,273.5 L438,272.4 L439,271.2 L440,270.0 L441,268.6 L442,267.2 L443,265.7 L444,264.1 L445,262.4 L446,260.6 L447,258.8 L448,256.9 L449,254.8 L450,252.7 L451,250.5 L452,248.2 L453,245.7 L454,243.1 L455,240.4 L456,237.5 L457,234.4 L458,231.3 L459,228.0 L460,224.6 L461,221.1 L462,217.6 L463,214.1 L464,210.6 L465,207.0 L466,203.5 L467,200.0 L468,196.5 L469,193.0 L470,189.6 L471,186.2 L472,182.9 L473,179.6 L474,176.4 L475,173.2 L476,170.2 L477,167.2 L478,164.3 L479,161.6 L480,158.9 L481,156.3 L482,153.8 L483,151.4 L484,149.1 L485,146.8 L486,144.7 L487,142.7 L488,140.7 L489,138.8 L490,137.1 L491,135.4 L492,133.8 L493,132.2 L494,130.8 L495,129.5 L496,128.2 L497,127.0 L498,125.9 L499,125.0 L500,124.1 L501,123.3 L502,122.5 L503,121.9 L504,121.4 L505,121.0 L506,120.6 L507,120.4 L508,120.2 L509,120.1 L510,120.2 L511,120.3 L512,120.5 L513,120.9 L514,121.3 L515,121.8 L516,122.4 L517,123.1 L518,124.0 L519,124.9 L520,125.9 L521,127.0 L522,128.2 L523,129.4 L524,130.7 L525,132.2 L526,133.6 L527,135.2 L528,136.8 L529,138.4 L530,140.1 L531,141.8 L532,143.6 L533,145.4 L534,147.3 L535,149.2 L536,151.1 L537,153.0 L538,155.0 L539,156.9 L540,158.9 L541,160.8 L542,162.8 L543,164.8 L544,166.7 L545,168.7 L546,170.6 L547,172.5 L548,174.4 L549,176.3 L550,178.3 L551,180.2 L552,182.1 L553,184.1 L554,186.1 L555,188.1 L556,190.1 L557,192.2 L558,194.3 L559,196.5 L560,198.6 L561,200.8 L562,203.0 L563,205.3 L564,207.6 L565,209.9 L566,212.2 L567,214.6 L568,216.9 L569,219.3 L570,221.8 L571,224.2 L572,226.7 L573,229.2 L574,231.7 L575,234.2 L576,236.7 L577,239.3 L578,241.9 L579,244.5 L580,247.1 L581,249.7 L582,252.3 L583,255.0 L584,257.6 L585,260.3 L586,263.0 L587,265.7 L588,268.4 L589,271.1 L590,273.8 L591,276.5 L592,279.3 L593,282.0 L594,284.7 L595,287.5 L596,290.2 L597,293.0 L598,295.7 L599,298.5 L600,301.2 L601,304.0 L602,306.7 L603,309.5 L604,312.2 L605,315.0 L606,317.7 L607,320.4 L608,323.2 L609,325.9 L610,328.6 L611,331.3 L612,334.1 L613,336.8 L614,339.4 L615,342.1 L616,344.8 L617,347.5 L618,350.1 L619,352.8 L620,355.4 L621,358.0 L622,360.6 L623,363.2 L624,365.8 L625,368.3 L626,370.9 L627,373.4 L628,375.9 L629,378.4 L630,380.9 L631,383.4 L632,385.8 L633,388.2 L634,390.7 L635,393.0 L636,395.4 L637,397.8 L638,400.1 L639,402.4 L640,404.6 L641,406.9 L642,409.1 L643,411.3 L644,413.5 L645,415.6 L646,417.8 L647,419.9 L648,422.0 L649,424.0 L650,426.1 L651,428.1 L652,430.1 L653,432.0 L654,434.0 L655,435.9 L656,437.9 L657,439.8 L658,441.6 L659,443.5 L660,445.3 L661,447.2 L662,449.0 L663,450.8 L664,452.5 L665,454.3 L666,456.0 L667,457.8 L668,459.5 L669,461.2 L670,462.9 L671,464.5 L672,466.2 L673,467.8 L674,469.5 L675,471.1 L676,472.7 L677,474.3 L678,475.9 L679,477.5 L680,479.0" stroke="#7b3f9a"/>
<path d="M252,286.2 L253,282.8 L254,279.7 L255,276.8 L256,274.0 L257,271.5 L258,269.1 L259,267.0 L260,265.0 L261,263.2 L262,261.6 L263,260.2 L264,258.9 L265,257.8 L266,256.9 L267,256.2 L268,255.7 L269,255.3 L270,255.0 L271,255.0 L272,255.1 L273,255.4 L274,255.8 L275,256.4 L276,257.1 L277,258.0 L278,259.1 L279,260.3 L280,261.6 L281,263.2 L282,264.8 L283,266.7 L284,268.6 L285,270.8 L286,273.1 L287,275.5 L288,278.1 L289,280.8 L290,283.7 L291,286.8 L292,289.9 L293,293.3 L294,296.8 L295,300.4 L296,304.2 L297,308.1 L298,312.2 L299,316.4 L300,320.8 L301,325.2 L302,329.6 L303,334.1 L304,338.5 L305,342.9 L306,347.2 L307,351.4 L308,355.5 L309,359.4 L310,363.1 L311,366.6 L312,369.9 L313,373.1 L314,376.1 L315,379.0 L316,381.7 L317,384.2 L318,386.7 L319,389.0 L320,391.1 L321,393.2 L322,395.1 L323,397.0 L324,398.7 L325,400.4 L326,401.9 L327,403.4 L328,404.8 L329,406.2 L330,407.5 L331,408.7 L332,409.9 L333,411.1 L334,412.2 L335,413.3 L336,414.3 L337,415.3 L338,416.2 L339,417.0 L340,417.9 L341,418.6 L342,419.3 L343,419.9 L344,420.5 L345,421.0 L346,421.4 L347,421.7 L348,421.9 L349,422.0 L350,422.0 L351,421.9 L352,421.8 L353,421.5 L354,421.1 L355,420.6 L356,419.9 L357,419.2 L358,418.3 L359,417.3 L360,416.2 L361,415.0 L362,413.6 L363,412.1 L364,410.5 L365,408.7 L366,406.7 L367,404.7 L368,402.5 L369,400.1 L370,397.7 L371,395.1 L372,392.4 L373,389.6 L374,386.8 L375,383.8 L376,380.8 L377,377.7 L378,374.6 L379,371.4 L380,368.1 L381,364.9 L382,361.6 L383,358.3 L384,355.0 L385,351.7 L386,348.4 L387,345.1 L388,341.9 L389,338.7 L390,335.6 L391,332.5 L392,329.5 L393,326.5 L394,323.7 L395,320.9 L396,318.2 L397,315.7 L398,313.2 L399,310.9 L400,308.7 L401,306.7 L402,304.7 L403,302.9 L404,301.2 L405,299.6 L406,298.1 L407,296.7 L408,295.4 L409,294.2 L410,293.0 L411,292.0 L412,291.0 L413,290.1 L414,289.2 L415,288.4 L416,287.6 L417,286.9 L418,286.3 L419,285.6 L420,285.0 L421,284.4 L422,283.9 L423,283.3 L424,282.8 L425,282.2 L426,281.7 L427,281.1 L428,280.5 L429,279.9 L430,279.2 L431,278.6 L432,277.9 L433,277.1 L434,276.3 L435,275.4 L436,274.5 L437,273.5 L438,272.4 L439,271.2 L440,270.0 L441,268.6 L442,267.2 L443,265.7 L444,264.1 L445,262.4 L446,260.6 L447,258.8 L448,256.9 L449,254.8 L450,252.7 L451,250.5 L452,248.2 L453,245.7 L454,243.1 L455,240.4 L456,237.5 L457,234.4 L458,231.3 L459,228.0 L460,224.6 L461,221.1 L462,217.6 L463,214.1 L464,210.6 L465,207.0 L466,203.5 L467,200.0 L468,196.5 L469,193.0 L470,189.6 L471,186.2 L472,182.9 L473,179.6 L474,176.4 L475,173.2 L476,170.2 L477,167.2 L478,164.3 L479,161.6 L480,158.9 L481,156.3 L482,153.8 L483,151.4 L484,149.1 L485,146.8 L486,144.7 L487,142.7 L488,140.7 L489,138.8 L490,137.1 L491,135.4 L492,133.8 L493,132.2 L494,130.8 L495,129.5 L496,128.2 L497,127.0 L498,125.9 L499,125.0 L500,124.1 L501,123.3 L502,122.5 L503,121.9 L504,121.4 L505,120.9 L506,120.6 L507,120.4 L508,120.2 L509,120.1 L510,120.2 L511,120.3 L512,120.5 L513,120.9 L514,121.3 L515,121.8 L516,122.4 L517,123.1 L518,124.0 L519,124.9 L520,125.9 L521,127.0 L522,128.2 L523,129.4 L524,130.7 L525,132.1 L526,133.6 L527,135.2 L528,136.7 L529,138.4 L530,140.1 L531,141.8 L532,143.6 L533,145.4 L534,147.3 L535,149.2 L536,151.1 L537,153.0 L538,154.9 L539,156.9 L540,158.9 L541,160.8 L542,162.8 L543,164.8 L544,166.7 L545,168.6 L546,170.6 L547,172.5 L548,174.4 L549,176.3 L550,178.2 L551,180.2 L552,182.1 L553,184.1 L554,186.1 L555,188.1 L556,190.1 L557,192.2 L558,194.3 L559,196.4 L560,198.6 L561,200.8 L562,203.0 L563,205.2 L564,207.5 L565,209.8 L566,212.1 L567,214.5 L568,216.9 L569,219.3 L570,221.7 L571,224.1 L572,226.6 L573,229.1 L574,231.6 L575,234.1 L576,236.6 L577,239.2 L578,241.8 L579,244.3 L580,246.9 L581,249.6 L582,252.2 L583,254.8 L584,257.5 L585,260.1 L586,262.8 L587,265.5 L588,268.2 L589,270.9 L590,273.6 L591,276.3 L592,279.0 L593,281.8 L594,284.5 L595,287.2 L596,290.0 L597,292.7 L598,295.4 L599,298.2 L600,300.9 L601,303.7 L602,306.4 L603,309.1 L604,311.9 L605,314.6 L606,317.3 L607,320.0 L608,322.8 L609,325.5 L610,328.2 L611,330.9 L612,333.6 L613,336.3 L614,338.9 L615,341.6 L616,344.3 L617,346.9 L618,349.5 L619,352.2 L620,354.8 L621,357.4 L622,360.0 L623,362.5 L624,365.1 L625,367.6 L626,370.1 L627,372.7 L628,375.1 L629,377.6 L630,380.1 L631,382.5 L632,384.9 L633,387.3 L634,389.7 L635,392.1 L636,394.4 L637,396.7 L638,399.0 L639,401.2 L640,403.5 L641,405.7 L642,407.9 L643,410.0 L644,412.2 L645,414.3 L646,416.4 L647,418.5 L648,420.5 L649,422.5 L650,424.5 L651,426.5 L652,428.5 L653,430.4 L654,432.3 L655,434.2 L656,436.1 L657,438.0 L658,439.8 L659,441.7 L660,443.5 L661,445.3 L662,447.1 L663,448.8 L664,450.6 L665,452.3 L666,454.0 L667,455.7 L668,457.4 L669,459.1 L670,460.7 L671,462.4 L672,464.0 L673,465.7 L674,467.3 L675,468.9 L676,470.5 L677,472.0 L678,473.6 L679,475.2 L680,476.7" stroke="#8e3a5a"/>
<path d="M252,283.2 L253,279.9 L254,276.8 L255,274.0 L256,271.3 L257,268.8 L258,266.5 L259,264.4 L260,262.5 L261,260.8 L262,259.2 L263,257.9 L264,256.7 L265,255.6 L266,254.8 L267,254.1 L268,253.6 L269,253.2 L270,253.0 L271,253.0 L272,253.1 L273,253.4 L274,253.8 L275,254.4 L276,255.2 L277,256.1 L278,257.2 L279,258.5 L280,259.9 L281,261.5 L282,263.2 L283,265.1 L284,267.1 L285,269.3 L286,271.7 L287,274.2 L288,276.8 L289,279.6 L290,282.6 L291,285.7 L292,288.9 L293,292.3 L294,295.8 L295,299.4 L296,303.2 L297,307.2 L298,311.2 L299,315.4 L300,319.8 L301,324.1 L302,328.6 L303,333.0 L304,337.4 L305,341.8 L306,346.0 L307,350.2 L308,354.2 L309,358.1 L310,361.8 L311,365.3 L312,368.6 L313,371.7 L314,374.7 L315,377.5 L316,380.2 L317,382.7 L318,385.1 L319,387.4 L320,389.5 L321,391.5 L322,393.4 L323,395.2 L324,396.9 L325,398.6 L326,400.1 L327,401.5 L328,402.9 L329,404.2 L330,405.5 L331,406.7 L332,407.8 L333,408.9 L334,409.9 L335,410.8 L336,411.7 L337,412.5 L338,413.3 L339,414.0 L340,414.7 L341,415.3 L342,415.8 L343,416.3 L344,416.8 L345,417.2 L346,417.5 L347,417.7 L348,417.9 L349,418.0 L350,418.0 L351,418.0 L352,417.8 L353,417.5 L354,417.2 L355,416.7 L356,416.1 L357,415.4 L358,414.6 L359,413.7 L360,412.7 L361,411.5 L362,410.2 L363,408.7 L364,407.1 L365,405.4 L366,403.5 L367,401.5 L368,399.4 L369,397.1 L370,394.7 L371,392.1 L372,389.5 L373,386.8 L374,384.0 L375,381.2 L376,378.3 L377,375.3 L378,372.2 L379,369.2 L380,366.1 L381,363.0 L382,359.8 L383,356.7 L384,353.5 L385,350.3 L386,347.2 L387,344.1 L388,341.0 L389,337.9 L390,334.9 L391,331.9 L392,329.0 L393,326.2 L394,323.4 L395,320.7 L396,318.1 L397,315.6 L398,313.2 L399,310.9 L400,308.7 L401,306.7 L402,304.7 L403,302.9 L404,301.2 L405,299.6 L406,298.1 L407,296.7 L408,295.4 L409,294.2 L410,293.0 L411,292.0 L412,291.0 L413,290.1 L414,289.2 L415,288.4 L416,287.6 L417,286.9 L418,286.3 L419,285.6 L420,285.0 L421,284.4 L422,283.9 L423,283.3 L424,282.8 L425,282.2 L426,281.7 L427,281.1 L428,280.5 L429,279.9 L430,279.2 L431,278.6 L432,277.9 L433,277.1 L434,276.3 L435,275.4 L436,274.5 L437,273.5 L438,272.4 L439,271.2 L440,270.0 L441,268.6 L442,267.2 L443,265.7 L444,264.1 L445,262.4 L446,260.6 L447,258.8 L448,256.9 L449,254.8 L450,252.7 L451,250.5 L452,248.2 L453,245.7 L454,243.1 L455,240.4 L456,237.5 L457,234.4 L458,231.3 L459,228.0 L460,224.6 L461,221.1 L462,217.6 L463,214.1 L464,210.6 L465,207.0 L466,203.5 L467,200.0 L468,196.5 L469,193.0 L470,189.6 L471,186.2 L472,182.9 L473,179.6 L474,176.4 L475,173.2 L476,170.2 L477,167.2 L478,164.3 L479,161.6 L480,158.9 L481,156.3 L482,153.8 L483,151.4 L484,149.1 L485,146.8 L486,144.7 L487,142.7 L488,140.7 L489,138.8 L490,137.1 L491,135.4 L492,133.8 L493,132.2 L494,130.8 L495,129.5 L496,128.2 L497,127.0 L498,125.9 L499,125.0 L500,124.1 L501,123.3 L502,122.5 L503,121.9 L504,121.4 L505,121.0 L506,120.6 L507,120.4 L508,120.2 L509,120.1 L510,120.2 L511,120.3 L512,120.5 L513,120.9 L514,121.3 L515,121.8 L516,122.4 L517,123.1 L518,124.0 L519,124.9 L520,125.9 L521,127.0 L522,128.2 L523,129.4 L524,130.7 L525,132.2 L526,133.6 L527,135.2 L528,136.7 L529,138.4 L530,140.1 L531,141.8 L532,143.6 L533,145.4 L534,147.3 L535,149.2 L536,151.1 L537,153.0 L538,155.0 L539,156.9 L540,158.9 L541,160.8 L542,162.8 L543,164.8 L544,166.7 L545,168.7 L546,170.6 L547,172.5 L548,174.4 L549,176.3 L550,178.3 L551,180.2 L552,182.1 L553,184.1 L554,186.1 L555,188.1 L556,190.1 L557,192.2 L558,194.3 L559,196.4 L560,198.6 L561,200.8 L562,203.0 L563,205.3 L564,207.6 L565,209.9 L566,212.2 L567,214.5 L568,216.9 L569,219.3 L570,221.7 L571,224.2 L572,226.6 L573,229.1 L574,231.6 L575,234.2 L576,236.7 L577,239.3 L578,241.8 L579,244.4 L580,247.0 L581,249.7 L582,252.3 L583,254.9 L584,257.6 L585,260.3 L586,262.9 L587,265.6 L588,268.3 L589,271.0 L590,273.7 L591,276.5 L592,279.2 L593,281.9 L594,284.7 L595,287.4 L596,290.1 L597,292.9 L598,295.6 L599,298.4 L600,301.1 L601,303.9 L602,306.6 L603,309.4 L604,312.1 L605,314.8 L606,317.6 L607,320.3 L608,323.0 L609,325.8 L610,328.5 L611,331.2 L612,333.9 L613,336.6 L614,339.3 L615,342.0 L616,344.6 L617,347.3 L618,349.9 L619,352.6 L620,355.2 L621,357.8 L622,360.4 L623,363.0 L624,365.5 L625,368.1 L626,370.6 L627,373.2 L628,375.7 L629,378.1 L630,380.6 L631,383.1 L632,385.5 L633,387.9 L634,390.3 L635,392.6 L636,395.0 L637,397.3 L638,399.6 L639,401.8 L640,404.1 L641,406.3 L642,408.5 L643,410.7 L644,412.8 L645,414.9 L646,417.0 L647,419.1 L648,421.2 L649,423.2 L650,425.2 L651,427.2 L652,429.2 L653,431.1 L654,433.1 L655,435.0 L656,436.9 L657,438.7 L658,440.6 L659,442.4 L660,444.2 L661,446.0 L662,447.8 L663,449.6 L664,451.3 L665,453.1 L666,454.8 L667,456.5 L668,458.2 L669,459.8 L670,461.5 L671,463.1 L672,464.8 L673,466.4 L674,468.0 L675,469.6 L676,471.2 L677,472.8 L678,474.3 L679,475.9 L680,477.4" stroke="#6a3488"/>
<path d="M252,291.2 L253,287.6 L254,284.2 L255,281.0 L256,278.0 L257,275.2 L258,272.6 L259,270.2 L260,268.0 L261,266.0 L262,264.2 L263,262.5 L264,261.1 L265,259.8 L266,258.8 L267,257.9 L268,257.2 L269,256.6 L270,256.3 L271,256.1 L272,256.1 L273,256.3 L274,256.6 L275,257.1 L276,257.8 L277,258.6 L278,259.7 L279,260.8 L280,262.2 L281,263.7 L282,265.3 L283,267.1 L284,269.1 L285,271.2 L286,273.5 L287,275.9 L288,278.5 L289,281.2 L290,284.1 L291,287.1 L292,290.3 L293,293.6 L294,297.1 L295,300.7 L296,304.4 L297,308.3 L298,312.3 L299,316.5 L300,320.8 L301,325.1 L302,329.5 L303,333.8 L304,338.2 L305,342.5 L306,346.7 L307,350.8 L308,354.8 L309,358.6 L310,362.2 L311,365.6 L312,368.9 L313,372.0 L314,374.9 L315,377.7 L316,380.3 L317,382.8 L318,385.1 L319,387.4 L320,389.5 L321,391.5 L322,393.4 L323,395.1 L324,396.8 L325,398.5 L326,400.0 L327,401.5 L328,402.9 L329,404.2 L330,405.5 L331,406.7 L332,407.9 L333,409.0 L334,410.1 L335,411.1 L336,412.1 L337,413.0 L338,413.8 L339,414.6 L340,415.3 L341,416.0 L342,416.6 L343,417.2 L344,417.7 L345,418.1 L346,418.4 L347,418.7 L348,418.9 L349,419.0 L350,419.0 L351,419.0 L352,418.8 L353,418.5 L354,418.2 L355,417.7 L356,417.1 L357,416.4 L358,415.6 L359,414.7 L360,413.7 L361,412.5 L362,411.2 L363,409.7 L364,408.1 L365,406.4 L366,404.5 L367,402.5 L368,400.4 L369,398.1 L370,395.7 L371,393.1 L372,390.5 L373,387.8 L374,385.0 L375,382.1 L376,379.1 L377,376.1 L378,373.1 L379,370.0 L380,366.8 L381,363.6 L382,360.5 L383,357.2 L384,354.0 L385,350.8 L386,347.6 L387,344.5 L388,341.3 L389,338.2 L390,335.2 L391,332.1 L392,329.2 L393,326.3 L394,323.5 L395,320.8 L396,318.2 L397,315.6 L398,313.2 L399,310.9 L400,308.7 L401,306.7 L402,304.7 L403,302.9 L404,301.2 L405,299.5 L406,298.0 L407,296.6 L408,295.2 L409,293.9 L410,292.8 L411,291.7 L412,290.6 L413,289.7 L414,288.7 L415,287.9 L416,287.1 L417,286.3 L418,285.6 L419,284.9 L420,284.3 L421,283.7 L422,283.1 L423,282.5 L424,281.9 L425,281.3 L426,280.7 L427,280.1 L428,279.5 L429,278.9 L430,278.2 L431,277.6 L432,276.9 L433,276.1 L434,275.3 L435,274.5 L436,273.6 L437,272.7 L438,271.6 L439,270.5 L440,269.3 L441,268.0 L442,266.7 L443,265.2 L444,263.7 L445,262.1 L446,260.4 L447,258.6 L448,256.7 L449,254.7 L450,252.6 L451,250.4 L452,248.1 L453,245.7 L454,243.1 L455,240.4 L456,237.5 L457,234.4 L458,231.3 L459,228.0 L460,224.6 L461,221.1 L462,217.6 L463,214.1 L464,210.6 L465,207.0 L466,203.5 L467,200.0 L468,196.5 L469,193.0 L470,189.6 L471,186.2 L472,182.9 L473,179.6 L474,176.4 L475,173.2 L476,170.2 L477,167.2 L478,164.3 L479,161.6 L480,158.9 L481,156.3 L482,153.8 L483,151.4 L484,149.1 L485,146.8 L486,144.7 L487,142.7 L488,140.7 L489,138.8 L490,137.1 L491,135.4 L492,133.8 L493,132.2 L494,130.8 L495,129.5 L496,128.2 L497,127.0 L498,125.9 L499,125.0 L500,124.1 L501,123.3 L502,122.5 L503,121.9 L504,121.4 L505,121.0 L506,120.6 L507,120.4 L508,120.2 L509,120.1 L510,120.2 L511,120.3 L512,120.5 L513,120.9 L514,121.3 L515,121.8 L516,122.4 L517,123.1 L518,124.0 L519,124.9 L520,125.9 L521,127.0 L522,128.2 L523,129.4 L524,130.7 L525,132.1 L526,133.6 L527,135.2 L528,136.7 L529,138.4 L530,140.1 L531,141.8 L532,143.6 L533,145.4 L534,147.3 L535,149.2 L536,151.1 L537,153.0 L538,155.0 L539,156.9 L540,158.9 L541,160.8 L542,162.8 L543,164.8 L544,166.7 L545,168.6 L546,170.6 L547,172.5 L548,174.4 L549,176.3 L550,178.2 L551,180.2 L552,182.1 L553,184.1 L554,186.1 L555,188.1 L556,190.1 L557,192.2 L558,194.3 L559,196.4 L560,198.6 L561,200.8 L562,203.0 L563,205.3 L564,207.5 L565,209.8 L566,212.2 L567,214.5 L568,216.9 L569,219.3 L570,221.7 L571,224.2 L572,226.6 L573,229.1 L574,231.6 L575,234.1 L576,236.7 L577,239.2 L578,241.8 L579,244.4 L580,247.0 L581,249.6 L582,252.2 L583,254.9 L584,257.5 L585,260.2 L586,262.9 L587,265.6 L588,268.3 L589,271.0 L590,273.7 L591,276.4 L592,279.1 L593,281.8 L594,284.6 L595,287.3 L596,290.1 L597,292.8 L598,295.5 L599,298.3 L600,301.0 L601,303.8 L602,306.5 L603,309.2 L604,312.0 L605,314.7 L606,317.5 L607,320.2 L608,322.9 L609,325.6 L610,328.3 L611,331.0 L612,333.7 L613,336.4 L614,339.1 L615,341.8 L616,344.4 L617,347.1 L618,349.7 L619,352.4 L620,355.0 L621,357.6 L622,360.2 L623,362.8 L624,365.3 L625,367.9 L626,370.4 L627,372.9 L628,375.4 L629,377.9 L630,380.3 L631,382.8 L632,385.3 L633,387.7 L634,390.1 L635,392.5 L636,394.8 L637,397.2 L638,399.5 L639,401.8 L640,404.0 L641,406.3 L642,408.5 L643,410.7 L644,412.8 L645,415.0 L646,417.1 L647,419.2 L648,421.3 L649,423.3 L650,425.4 L651,427.4 L652,429.4 L653,431.3 L654,433.3 L655,435.2 L656,437.1 L657,439.0 L658,440.9 L659,442.8 L660,444.6 L661,446.4 L662,448.2 L663,450.0 L664,451.8 L665,453.5 L666,455.3 L667,457.0 L668,458.7 L669,460.4 L670,462.1 L671,463.8 L672,465.4 L673,467.1 L674,468.7 L675,470.3 L676,472.0 L677,473.6 L678,475.2 L679,476.7 L680,478.3" stroke="#5b2d72"/>
<path d="M252,284.2 L253,280.7 L254,277.4 L255,274.4 L256,271.5 L257,268.8 L258,266.4 L259,264.1 L260,262.0 L261,260.1 L262,258.4 L263,256.9 L264,255.6 L265,254.5 L266,253.5 L267,252.7 L268,252.2 L269,251.8 L270,251.5 L271,251.5 L272,251.6 L273,251.9 L274,252.4 L275,253.0 L276,253.8 L277,254.8 L278,255.9 L279,257.3 L280,258.7 L281,260.4 L282,262.2 L283,264.1 L284,266.2 L285,268.5 L286,270.9 L287,273.5 L288,276.2 L289,279.0 L290,282.0 L291,285.2 L292,288.5 L293,291.9 L294,295.5 L295,299.2 L296,303.1 L297,307.0 L298,311.2 L299,315.4 L300,319.8 L301,324.2 L302,328.6 L303,333.1 L304,337.5 L305,341.9 L306,346.2 L307,350.4 L308,354.5 L309,358.4 L310,362.1 L311,365.6 L312,368.9 L313,372.1 L314,375.1 L315,378.0 L316,380.7 L317,383.2 L318,385.7 L319,388.0 L320,390.1 L321,392.2 L322,394.1 L323,396.0 L324,397.7 L325,399.4 L326,400.9 L327,402.4 L328,403.8 L329,405.2 L330,406.5 L331,407.7 L332,408.8 L333,409.9 L334,410.9 L335,411.8 L336,412.6 L337,413.3 L338,414.0 L339,414.7 L340,415.2 L341,415.8 L342,416.2 L343,416.6 L344,417.0 L345,417.3 L346,417.6 L347,417.8 L348,417.9 L349,418.0 L350,418.0 L351,418.0 L352,417.8 L353,417.5 L354,417.2 L355,416.7 L356,416.1 L357,415.4 L358,414.6 L359,413.7 L360,412.7 L361,411.5 L362,410.2 L363,408.7 L364,407.1 L365,405.4 L366,403.5 L367,401.5 L368,399.4 L369,397.1 L370,394.7 L371,392.1 L372,389.5 L373,386.8 L374,384.0 L375,381.1 L376,378.1 L377,375.1 L378,372.0 L379,368.9 L380,365.7 L381,362.6 L382,359.4 L383,356.1 L384,352.9 L385,349.7 L386,346.5 L387,343.3 L388,340.2 L389,337.1 L390,334.0 L391,331.0 L392,328.0 L393,325.2 L394,322.4 L395,319.7 L396,317.1 L397,314.5 L398,312.2 L399,309.9 L400,307.7 L401,305.7 L402,303.8 L403,302.0 L404,300.3 L405,298.8 L406,297.3 L407,296.0 L408,294.7 L409,293.5 L410,292.4 L411,291.4 L412,290.5 L413,289.6 L414,288.8 L415,288.0 L416,287.3 L417,286.6 L418,286.0 L419,285.4 L420,284.8 L421,284.3 L422,283.8 L423,283.2 L424,282.7 L425,282.2 L426,281.6 L427,281.1 L428,280.5 L429,279.9 L430,279.2 L431,278.6 L432,277.9 L433,277.1 L434,276.3 L435,275.4 L436,274.5 L437,273.5 L438,272.4 L439,271.2 L440,270.0 L441,268.6 L442,267.2 L443,265.7 L444,264.1 L445,262.4 L446,260.6 L447,258.8 L448,256.9 L449,254.8 L450,252.7 L451,250.5 L452,248.2 L453,245.7 L454,243.1 L455,240.4 L456,237.5 L457,234.4 L458,231.3 L459,228.0 L460,224.6 L461,221.1 L462,217.6 L463,214.1 L464,210.6 L465,207.0 L466,203.5 L467,200.0 L468,196.5 L469,193.0 L470,189.6 L471,186.2 L472,182.9 L473,179.6 L474,176.4 L475,173.2 L476,170.2 L477,167.2 L478,164.3 L479,161.6 L480,158.9 L481,156.3 L482,153.8 L483,151.4 L484,149.1 L485,146.8 L486,144.7 L487,142.7 L488,140.7 L489,138.8 L490,137.1 L491,135.4 L492,133.8 L493,132.2 L494,130.8 L495,129.5 L496,128.2 L497,127.0 L498,125.9 L499,125.0 L500,124.1 L501,123.3 L502,122.5 L503,121.9 L504,121.4 L505,120.9 L506,120.6 L507,120.4 L508,120.2 L509,120.1 L510,120.2 L511,120.3 L512,120.5 L513,120.9 L514,121.3 L515,121.8 L516,122.4 L517,123.1 L518,124.0 L519,124.9 L520,125.9 L521,127.0 L522,128.2 L523,129.4 L524,130.7 L525,132.1 L526,133.6 L527,135.2 L528,136.7 L529,138.4 L530,140.1 L531,141.8 L532,143.6 L533,145.4 L534,147.3 L535,149.2 L536,151.1 L537,153.0 L538,154.9 L539,156.9 L540,158.9 L541,160.8 L542,162.8 L543,164.8 L544,166.7 L545,168.6 L546,170.6 L547,172.5 L548,174.4 L549,176.3 L550,178.2 L551,180.2 L552,182.1 L553,184.1 L554,186.0 L555,188.1 L556,190.1 L557,192.2 L558,194.3 L559,196.4 L560,198.6 L561,200.8 L562,203.0 L563,205.2 L564,207.5 L565,209.8 L566,212.1 L567,214.5 L568,216.8 L569,219.2 L570,221.7 L571,224.1 L572,226.6 L573,229.0 L574,231.5 L575,234.1 L576,236.6 L577,239.2 L578,241.7 L579,244.3 L580,246.9 L581,249.5 L582,252.1 L583,254.8 L584,257.4 L585,260.1 L586,262.8 L587,265.4 L588,268.1 L589,270.8 L590,273.5 L591,276.3 L592,279.0 L593,281.7 L594,284.4 L595,287.1 L596,289.9 L597,292.6 L598,295.3 L599,298.1 L600,300.8 L601,303.6 L602,306.3 L603,309.0 L604,311.7 L605,314.5 L606,317.2 L607,319.9 L608,322.6 L609,325.3 L610,328.0 L611,330.7 L612,333.4 L613,336.1 L614,338.8 L615,341.4 L616,344.1 L617,346.7 L618,349.3 L619,352.0 L620,354.6 L621,357.2 L622,359.7 L623,362.3 L624,364.9 L625,367.4 L626,369.9 L627,372.4 L628,374.9 L629,377.4 L630,379.8 L631,382.2 L632,384.7 L633,387.0 L634,389.4 L635,391.8 L636,394.1 L637,396.4 L638,398.7 L639,401.0 L640,403.2 L641,405.4 L642,407.6 L643,409.8 L644,411.9 L645,414.0 L646,416.1 L647,418.2 L648,420.2 L649,422.2 L650,424.2 L651,426.2 L652,428.2 L653,430.1 L654,432.0 L655,434.0 L656,435.8 L657,437.7 L658,439.5 L659,441.4 L660,443.2 L661,445.0 L662,446.8 L663,448.5 L664,450.3 L665,452.0 L666,453.7 L667,455.4 L668,457.1 L669,458.8 L670,460.5 L671,462.1 L672,463.8 L673,465.4 L674,467.0 L675,468.6 L676,470.2 L677,471.8 L678,473.4 L679,474.9 L680,476.5" stroke="#7d4aa2"/>
<path d="M680,478.9 L681,480.4 L682,481.9 L683,483.4 L684,484.9 L685,486.4 L686,487.8 L687,489.3 L688,490.8 L689,492.2 L690,493.7 L691,495.1 L692,496.6 L693,498.0 L694,499.4 L695,500.9 L696,502.2 L697,503.6 L698,505.1 L699,506.5 L700,507.9 L701,509.4 L702,510.8 L703,512.2 L704,513.7 L705,515.1 L706,516.5 L707,517.9 L708,519.2 L709,520.6 L710,521.9 L711,523.2 L712,524.5 L713,525.7 L714,526.8 L715,528.0 L716,529.2 L717,530.4 L718,531.7 L719,533.0 L720,534.3 L721,535.7 L722,537.2 L723,538.7 L724,539.9 L725,540.9 L726,541.9 L727,542.9 L728,543.9 L729,544.8 L730,545.7 L731,546.6 L732,547.4 L733,548.2 L734,549.1 L735,550.2 L736,551.4 L737,552.6 L738,553.6 L739,554.4 L740,555.1 L741,556.0 L742,557.2 L743,558.4 L744,559.3 L745,559.9 L746,560.6 L747,561.4 L748,562.0 L749,562.4 L750,562.6 L751,562.8 L752,563.3 L753,563.8 L754,564.3 L755,564.6 L756,564.6 L757,564.7 L758,565.4 L759,566.4 L760,567.5 L761,568.5 L762,569.5 L763,570.1 L764,570.2 L765,570.1 L766,570.0 L767,570.0 L768,570.3 L769,570.9 L770,571.9 L771,573.0 L772,573.8 L773,574.1 L774,574.3 L775,574.8 L776,575.3 L777,575.6 L778,575.8 L779,576.1 L780,576.7 L781,577.2 L782,577.6 L783,577.9 L784,578.3 L785,578.6 L786,578.2 L787,577.3 L788,576.7 L789,576.8 L790,577.7 L791,578.4 L792,578.3 L793,578.2 L794,578.7 L795,579.7 L796,580.4 L797,580.5 L798,580.1 L799,579.9 L800,580.6 L801,582.1 L802,583.8 L803,584.8 L804,584.7 L805,583.5 L806,581.9 L807,580.5 L808,580.2 L809,580.8 L810,581.9 L811,583.0 L812,583.8 L813,584.2 L814,583.9 L815,583.5 L816,583.6 L817,584.2 L818,584.5 L819,584.1 L820,583.3 L821,582.6 L822,582.0 L823,581.8 L824,582.1 L825,582.9 L826,583.9 L827,584.7 L828,585.4 L829,586.0 L830,586.8 L831,587.9 L832,588.7 L833,588.6 L834,587.4 L835,585.9 L836,585.7 L837,587.1 L838,588.8 L839,589.4 L840,588.9 L841,587.9 L842,587.0 L843,586.6 L844,587.0 L845,588.2 L846,589.3 L847,589.6 L848,589.0 L849,588.1 L850,587.5 L851,587.6 L852,587.9 L853,588.1 L854,587.9 L855,587.3 L856,586.9 L857,586.7 L858,586.3 L859,585.9 L860,585.9 L861,586.7 L862,587.8 L863,589.0 L864,590.3 L865,591.4 L866,591.7 L867,591.2 L868,590.0 L869,588.9 L870,588.2 L871,587.6 L872,586.6 L873,585.6 L874,585.1 L875,585.1 L876,585.2 L877,585.1 L878,584.9 L879,585.2 L880,585.8 L881,586.8 L882,587.8 L883,588.5 L884,588.3 L885,587.3 L886,586.3 L887,585.6 L888,585.4 L889,585.1 L890,584.9 L891,584.9 L892,585.5 L893,586.5 L894,587.3 L895,587.3 L896,586.7 L897,586.1 L898,585.7 L899,585.3 L900,585.0 L901,584.9 L902,584.9 L903,584.2 L904,582.8 L905,581.6 L906,581.5 L907,582.3 L908,583.9 L909,585.6 L910,586.8 L911,587.5 L912,587.5 L913,586.8 L914,585.9 L915,585.7 L916,586.6 L917,588.0 L918,588.9 L919,588.9 L920,588.1 L921,587.0 L922,586.0 L923,585.6 L924,585.7 L925,585.5 L926,584.6 L927,583.8 L928,583.8 L929,584.3 L930,584.8 L931,585.2 L932,585.3 L933,585.1 L934,584.7 L935,584.3 L936,584.1 L937,583.8 L938,583.5 L939,583.4 L940,583.5 L941,583.6 L942,583.3 L943,582.5 L944,581.5 L945,580.8 L946,581.0 L947,582.1 L948,583.4 L949,583.9 L950,583.6 L951,583.0 L952,582.9 L953,583.1 L954,583.0" stroke="#505c52"/>
<path d="M680,478.5 L681,480.0 L682,481.6 L683,483.1 L684,484.6 L685,486.1 L686,487.7 L687,489.2 L688,490.6 L689,492.1 L690,493.6 L691,495.1 L692,496.6 L693,498.1 L694,499.6 L695,501.0 L696,502.5 L697,503.9 L698,505.4 L699,506.9 L700,508.3 L701,509.8 L702,511.2 L703,512.7 L704,514.2 L705,515.6 L706,517.1 L707,518.5 L708,519.8 L709,521.2 L710,522.6 L711,524.0 L712,525.5 L713,526.9 L714,528.1 L715,529.2 L716,530.3 L717,531.5 L718,532.8 L719,534.1 L720,535.4 L721,536.6 L722,537.8 L723,538.9 L724,540.0 L725,541.1 L726,542.3 L727,543.5 L728,544.6 L729,545.7 L730,546.6 L731,547.5 L732,548.4 L733,549.4 L734,550.4 L735,551.4 L736,552.3 L737,553.2 L738,554.3 L739,555.3 L740,556.3 L741,557.2 L742,558.0 L743,558.7 L744,559.6 L745,560.4 L746,561.1 L747,561.7 L748,562.5 L749,563.2 L750,563.7 L751,564.1 L752,564.7 L753,565.7 L754,566.8 L755,567.6 L756,567.9 L757,567.9 L758,567.7 L759,567.7 L760,568.0 L761,568.8 L762,569.7 L763,570.5 L764,571.2 L765,571.7 L766,572.1 L767,572.8 L768,573.6 L769,574.4 L770,574.8 L771,575.0 L772,575.1 L773,575.0 L774,574.7 L775,574.5 L776,574.4 L777,574.6 L778,575.3 L779,576.4 L780,577.4 L781,577.9 L782,577.9 L783,577.8 L784,577.9 L785,578.1 L786,578.4 L787,578.9 L788,579.8 L789,581.0 L790,581.4 L791,580.7 L792,579.3 L793,578.1 L794,577.6 L795,577.5 L796,577.5 L797,577.0 L798,576.5 L799,576.7 L800,578.0 L801,580.0 L802,581.5 L803,581.9 L804,581.6 L805,581.2 L806,580.9 L807,580.9 L808,581.2 L809,581.5 L810,581.8 L811,582.2 L812,582.7 L813,583.1 L814,582.9 L815,582.0 L816,581.2 L817,581.1 L818,581.5 L819,582.0 L820,582.2 L821,582.3 L822,582.4 L823,582.8 L824,583.6 L825,584.7 L826,585.8 L827,586.7 L828,587.1 L829,587.2 L830,587.2 L831,587.5 L832,588.2 L833,589.0 L834,589.7 L835,590.2 L836,590.6 L837,590.7 L838,590.1 L839,589.5 L840,589.8 L841,591.0 L842,591.8 L843,591.9 L844,591.7 L845,591.2 L846,590.3 L847,589.4 L848,588.7 L849,587.9 L850,587.0 L851,586.1 L852,585.6 L853,585.6 L854,586.3 L855,587.5 L856,588.3 L857,588.7 L858,588.7 L859,588.0 L860,586.7 L861,585.1 L862,583.8 L863,583.7 L864,585.1 L865,587.2 L866,588.6 L867,588.7 L868,588.5 L869,588.2 L870,587.8 L871,587.1 L872,586.7 L873,587.1 L874,587.9 L875,588.4 L876,588.3 L877,587.5 L878,586.4 L879,585.4 L880,585.3 L881,585.9 L882,586.8 L883,587.1 L884,586.8 L885,586.4 L886,586.3 L887,586.7 L888,587.0 L889,587.1 L890,587.2 L891,587.8 L892,588.7 L893,589.4 L894,589.6 L895,589.1 L896,588.6 L897,588.6 L898,589.1 L899,589.4 L900,589.3 L901,588.6 L902,587.6 L903,586.6 L904,585.6 L905,584.8 L906,584.6 L907,584.9 L908,585.5 L909,585.9 L910,586.0 L911,585.9 L912,585.4 L913,584.7 L914,584.4 L915,584.6 L916,584.9 L917,585.2 L918,585.9 L919,587.2 L920,588.1 L921,588.1 L922,587.6 L923,587.0 L924,586.5 L925,585.5 L926,584.1 L927,583.0 L928,582.8 L929,583.5 L930,584.5 L931,585.1 L932,585.2 L933,584.9 L934,584.4 L935,583.4 L936,582.5 L937,582.0 L938,581.8 L939,581.3 L940,580.7 L941,580.3 L942,580.5 L943,581.0 L944,581.4 L945,581.5 L946,581.7 L947,582.1 L948,582.3 L949,582.3 L950,582.1 L951,581.7 L952,581.1 L953,580.8 L954,580.8" stroke="#94b070"/>
<path d="M680,477.4 L681,479.0 L682,480.5 L683,482.0 L684,483.5 L685,485.0 L686,486.5 L687,488.0 L688,489.5 L689,491.0 L690,492.5 L691,493.9 L692,495.4 L693,496.9 L694,498.4 L695,499.8 L696,501.3 L697,502.8 L698,504.2 L699,505.7 L700,507.2 L701,508.7 L702,510.1 L703,511.5 L704,512.9 L705,514.3 L706,515.8 L707,517.2 L708,518.5 L709,519.8 L710,521.1 L711,522.4 L712,523.7 L713,525.1 L714,526.4 L715,527.7 L716,528.9 L717,530.1 L718,531.2 L719,532.5 L720,533.7 L721,534.9 L722,536.2 L723,537.6 L724,539.0 L725,540.3 L726,541.5 L727,542.4 L728,543.3 L729,544.1 L730,545.0 L731,545.9 L732,546.6 L733,547.2 L734,547.9 L735,548.8 L736,549.8 L737,551.0 L738,552.2 L739,553.2 L740,554.1 L741,554.9 L742,555.9 L743,557.1 L744,558.1 L745,558.9 L746,559.8 L747,560.9 L748,562.2 L749,563.2 L750,563.8 L751,564.0 L752,564.2 L753,564.5 L754,564.9 L755,565.4 L756,565.7 L757,565.9 L758,566.4 L759,567.3 L760,568.3 L761,569.2 L762,569.9 L763,570.4 L764,570.6 L765,570.5 L766,570.2 L767,570.1 L768,570.7 L769,571.8 L770,573.0 L771,574.1 L772,574.8 L773,575.2 L774,575.3 L775,575.2 L776,574.9 L777,574.8 L778,575.0 L779,575.3 L780,575.4 L781,575.4 L782,575.6 L783,576.2 L784,576.6 L785,576.7 L786,576.5 L787,576.4 L788,576.7 L789,577.8 L790,579.2 L791,580.2 L792,580.4 L793,580.0 L794,579.4 L795,578.9 L796,578.6 L797,578.2 L798,577.5 L799,576.5 L800,575.8 L801,576.0 L802,577.1 L803,578.7 L804,580.4 L805,581.9 L806,582.8 L807,582.7 L808,582.1 L809,581.6 L810,581.4 L811,581.2 L812,581.1 L813,581.4 L814,581.9 L815,582.1 L816,581.6 L817,581.1 L818,581.0 L819,581.1 L820,581.1 L821,581.4 L822,582.6 L823,584.3 L824,585.9 L825,586.8 L826,587.1 L827,587.1 L828,587.0 L829,586.8 L830,586.1 L831,585.3 L832,584.9 L833,585.1 L834,585.5 L835,586.0 L836,586.9 L837,587.8 L838,588.3 L839,588.2 L840,588.1 L841,588.1 L842,587.9 L843,587.6 L844,587.5 L845,588.2 L846,589.0 L847,588.8 L848,587.2 L849,585.0 L850,583.9 L851,584.5 L852,586.1 L853,587.3 L854,587.6 L855,587.0 L856,586.0 L857,585.4 L858,585.3 L859,585.5 L860,585.8 L861,586.3 L862,586.9 L863,587.1 L864,586.9 L865,586.6 L866,586.5 L867,586.4 L868,586.0 L869,585.2 L870,584.6 L871,584.6 L872,585.1 L873,586.1 L874,586.9 L875,587.2 L876,586.8 L877,585.6 L878,583.9 L879,582.5 L880,582.2 L881,582.8 L882,584.0 L883,585.2 L884,585.9 L885,585.9 L886,585.7 L887,585.9 L888,586.2 L889,586.2 L890,585.8 L891,585.6 L892,585.9 L893,586.5 L894,587.1 L895,587.5 L896,587.5 L897,586.9 L898,586.0 L899,585.2 L900,584.6 L901,584.0 L902,583.5 L903,583.0 L904,582.6 L905,582.4 L906,582.6 L907,583.3 L908,584.7 L909,586.4 L910,587.5 L911,587.1 L912,585.9 L913,585.0 L914,585.2 L915,586.3 L916,587.2 L917,587.4 L918,586.6 L919,585.2 L920,583.5 L921,582.4 L922,582.1 L923,582.4 L924,582.7 L925,582.8 L926,582.9 L927,583.1 L928,583.0 L929,582.2 L930,581.7 L931,582.1 L932,583.0 L933,583.7 L934,583.7 L935,583.2 L936,582.7 L937,582.4 L938,582.1 L939,581.9 L940,581.6 L941,581.4 L942,581.1 L943,580.5 L944,579.9 L945,579.7 L946,580.3 L947,581.0 L948,581.3 L949,581.0 L950,580.8 L951,581.0 L952,581.3 L953,581.3 L954,581.3" stroke="#a8404e"/>
<path d="M680,476.7 L681,478.3 L682,479.8 L683,481.3 L684,482.8 L685,484.4 L686,485.9 L687,487.4 L688,488.9 L689,490.3 L690,491.8 L691,493.3 L692,494.8 L693,496.3 L694,497.7 L695,499.2 L696,500.6 L697,502.1 L698,503.6 L699,505.1 L700,506.5 L701,508.0 L702,509.4 L703,510.9 L704,512.3 L705,513.7 L706,515.1 L707,516.4 L708,517.9 L709,519.3 L710,520.7 L711,522.1 L712,523.4 L713,524.8 L714,526.2 L715,527.5 L716,528.8 L717,530.1 L718,531.4 L719,532.6 L720,533.7 L721,534.9 L722,536.1 L723,537.2 L724,538.4 L725,539.6 L726,540.9 L727,542.2 L728,543.6 L729,544.9 L730,546.0 L731,546.7 L732,547.4 L733,548.0 L734,548.7 L735,549.7 L736,550.6 L737,551.6 L738,552.7 L739,553.9 L740,555.1 L741,556.0 L742,556.7 L743,557.1 L744,557.4 L745,557.7 L746,558.3 L747,559.4 L748,560.8 L749,562.0 L750,563.0 L751,563.6 L752,564.2 L753,564.8 L754,565.2 L755,565.4 L756,565.5 L757,565.9 L758,566.5 L759,567.0 L760,567.3 L761,567.5 L762,568.0 L763,568.6 L764,568.8 L765,569.0 L766,569.4 L767,570.2 L768,570.9 L769,571.6 L770,572.2 L771,572.8 L772,573.1 L773,573.2 L774,573.3 L775,573.7 L776,574.5 L777,575.3 L778,576.0 L779,576.7 L780,577.1 L781,577.2 L782,577.2 L783,576.8 L784,576.2 L785,576.1 L786,576.8 L787,577.7 L788,578.4 L789,578.9 L790,579.5 L791,580.0 L792,580.1 L793,579.5 L794,578.7 L795,578.2 L796,578.0 L797,577.7 L798,577.4 L799,577.3 L800,577.8 L801,579.0 L802,580.2 L803,580.9 L804,580.9 L805,580.2 L806,579.0 L807,577.6 L808,577.4 L809,579.1 L810,582.1 L811,584.9 L812,585.8 L813,584.8 L814,583.2 L815,582.4 L816,582.9 L817,584.0 L818,584.8 L819,584.7 L820,583.8 L821,582.7 L822,582.2 L823,583.1 L824,584.6 L825,585.8 L826,586.1 L827,585.9 L828,585.9 L829,586.3 L830,587.0 L831,587.3 L832,586.8 L833,585.8 L834,585.0 L835,584.8 L836,585.2 L837,586.0 L838,587.2 L839,588.6 L840,589.6 L841,590.0 L842,589.6 L843,588.8 L844,587.9 L845,587.2 L846,586.4 L847,585.7 L848,585.4 L849,585.8 L850,586.4 L851,586.6 L852,586.3 L853,586.3 L854,586.9 L855,587.7 L856,588.0 L857,587.7 L858,587.4 L859,587.1 L860,586.7 L861,585.8 L862,584.6 L863,583.5 L864,583.1 L865,583.4 L866,584.3 L867,585.8 L868,587.2 L869,587.9 L870,588.1 L871,588.2 L872,588.7 L873,589.3 L874,590.0 L875,590.3 L876,589.9 L877,588.7 L878,587.1 L879,586.1 L880,586.1 L881,587.0 L882,588.3 L883,588.8 L884,588.1 L885,586.4 L886,584.4 L887,583.1 L888,583.3 L889,584.7 L890,586.1 L891,586.7 L892,586.3 L893,585.8 L894,585.6 L895,585.9 L896,586.4 L897,586.6 L898,586.6 L899,586.1 L900,585.4 L901,584.8 L902,584.3 L903,583.6 L904,582.5 L905,581.5 L906,581.2 L907,581.9 L908,583.8 L909,586.2 L910,587.9 L911,588.3 L912,587.6 L913,586.3 L914,584.9 L915,583.6 L916,582.9 L917,582.4 L918,581.7 L919,581.1 L920,580.9 L921,581.0 L922,580.9 L923,580.5 L924,580.3 L925,580.3 L926,580.4 L927,580.7 L928,581.6 L929,583.1 L930,584.7 L931,585.7 L932,585.7 L933,584.5 L934,582.9 L935,581.8 L936,581.4 L937,581.1 L938,580.4 L939,579.8 L940,579.7 L941,580.4 L942,581.5 L943,582.5 L944,583.0 L945,583.0 L946,582.8 L947,582.8 L948,582.8 L949,582.8 L950,583.0 L951,583.0 L952,582.4 L953,581.3 L954,580.1" stroke="#8e3a5a"/>
<path d="M680,477.0 L681,478.5 L682,480.0 L683,481.5 L684,483.1 L685,484.6 L686,486.1 L687,487.6 L688,489.1 L689,490.6 L690,492.0 L691,493.5 L692,495.0 L693,496.5 L694,498.0 L695,499.4 L696,500.9 L697,502.4 L698,503.8 L699,505.3 L700,506.8 L701,508.2 L702,509.6 L703,511.0 L704,512.4 L705,513.9 L706,515.3 L707,516.7 L708,518.1 L709,519.4 L710,520.8 L711,522.2 L712,523.6 L713,525.0 L714,526.4 L715,527.8 L716,529.3 L717,530.7 L718,532.1 L719,533.4 L720,534.5 L721,535.6 L722,536.7 L723,537.7 L724,538.8 L725,539.7 L726,540.8 L727,542.1 L728,543.6 L729,545.0 L730,545.9 L731,546.5 L732,547.1 L733,547.9 L734,548.9 L735,549.9 L736,550.9 L737,552.0 L738,553.3 L739,554.6 L740,555.6 L741,556.4 L742,557.3 L743,558.1 L744,558.7 L745,559.1 L746,559.3 L747,559.6 L748,560.1 L749,560.9 L750,561.9 L751,562.8 L752,563.8 L753,565.0 L754,566.4 L755,567.5 L756,567.8 L757,567.7 L758,567.6 L759,568.1 L760,569.0 L761,569.7 L762,570.0 L763,570.1 L764,570.4 L765,571.2 L766,572.2 L767,573.0 L768,573.5 L769,573.8 L770,573.6 L771,573.2 L772,572.9 L773,573.3 L774,574.5 L775,575.8 L776,576.9 L777,577.7 L778,578.1 L779,578.2 L780,577.8 L781,577.4 L782,577.0 L783,577.2 L784,577.7 L785,578.2 L786,578.4 L787,578.5 L788,579.1 L789,580.3 L790,581.3 L791,581.3 L792,580.5 L793,579.4 L794,578.9 L795,579.2 L796,579.8 L797,580.3 L798,580.5 L799,580.8 L800,581.2 L801,581.5 L802,581.8 L803,582.5 L804,583.5 L805,584.2 L806,584.2 L807,584.0 L808,583.8 L809,583.7 L810,583.5 L811,583.2 L812,583.4 L813,584.1 L814,584.7 L815,584.8 L816,584.3 L817,583.4 L818,582.5 L819,582.1 L820,582.1 L821,582.2 L822,582.3 L823,582.5 L824,582.7 L825,582.8 L826,583.2 L827,584.2 L828,586.1 L829,588.4 L830,590.2 L831,590.6 L832,589.7 L833,588.5 L834,587.9 L835,587.8 L836,587.6 L837,587.3 L838,587.1 L839,586.8 L840,586.5 L841,586.6 L842,586.9 L843,587.4 L844,588.3 L845,589.5 L846,590.3 L847,590.1 L848,589.6 L849,589.4 L850,589.8 L851,590.3 L852,590.3 L853,589.6 L854,588.7 L855,588.2 L856,588.3 L857,589.0 L858,589.9 L859,590.7 L860,591.2 L861,591.1 L862,590.5 L863,589.6 L864,589.0 L865,588.9 L866,589.2 L867,589.9 L868,590.6 L869,590.8 L870,590.1 L871,588.9 L872,588.0 L873,587.6 L874,587.7 L875,588.1 L876,588.5 L877,588.9 L878,588.7 L879,588.0 L880,587.2 L881,587.2 L882,588.0 L883,588.5 L884,588.2 L885,587.2 L886,586.1 L887,585.3 L888,584.9 L889,584.9 L890,585.4 L891,586.0 L892,585.8 L893,584.9 L894,583.9 L895,583.3 L896,583.5 L897,584.3 L898,585.0 L899,585.4 L900,585.4 L901,584.9 L902,584.3 L903,583.9 L904,583.6 L905,583.0 L906,582.7 L907,583.3 L908,585.3 L909,587.6 L910,589.3 L911,589.7 L912,589.2 L913,588.1 L914,586.9 L915,585.9 L916,585.2 L917,584.8 L918,584.7 L919,585.3 L920,586.3 L921,587.4 L922,587.9 L923,587.9 L924,587.0 L925,585.5 L926,584.3 L927,584.0 L928,584.4 L929,584.9 L930,585.5 L931,586.5 L932,587.4 L933,587.4 L934,586.4 L935,584.7 L936,583.0 L937,581.8 L938,581.5 L939,582.0 L940,582.8 L941,583.0 L942,582.9 L943,582.7 L944,582.8 L945,583.1 L946,583.6 L947,583.9 L948,583.7 L949,583.1 L950,582.2 L951,581.1 L952,580.2 L953,579.8 L954,580.0" stroke="#f0a070"/>
<path d="M680,478.3 L681,479.9 L682,481.4 L683,483.0 L684,484.5 L685,486.1 L686,487.6 L687,489.1 L688,490.6 L689,492.1 L690,493.6 L691,495.1 L692,496.6 L693,498.2 L694,499.7 L695,501.2 L696,502.7 L697,504.2 L698,505.7 L699,507.2 L700,508.7 L701,510.1 L702,511.6 L703,513.0 L704,514.4 L705,515.8 L706,517.2 L707,518.7 L708,520.1 L709,521.6 L710,523.0 L711,524.4 L712,525.6 L713,526.9 L714,528.1 L715,529.4 L716,530.9 L717,532.3 L718,533.7 L719,535.0 L720,536.1 L721,537.2 L722,538.5 L723,539.9 L724,541.4 L725,542.8 L726,543.9 L727,544.9 L728,545.8 L729,546.9 L730,548.1 L731,549.2 L732,550.3 L733,551.1 L734,551.9 L735,552.5 L736,553.3 L737,554.2 L738,555.3 L739,556.5 L740,557.6 L741,558.6 L742,559.3 L743,559.9 L744,560.6 L745,561.4 L746,562.1 L747,562.6 L748,562.9 L749,563.4 L750,564.2 L751,565.1 L752,566.2 L753,567.4 L754,568.7 L755,569.8 L756,570.4 L757,570.6 L758,570.8 L759,571.2 L760,571.7 L761,572.0 L762,571.8 L763,571.6 L764,571.9 L765,572.8 L766,574.1 L767,575.6 L768,576.7 L769,577.2 L770,577.4 L771,577.2 L772,576.7 L773,576.3 L774,576.4 L775,576.9 L776,577.4 L777,577.8 L778,578.4 L779,579.3 L780,580.1 L781,580.5 L782,580.3 L783,580.2 L784,580.2 L785,580.3 L786,580.3 L787,580.3 L788,580.7 L789,581.6 L790,582.4 L791,582.5 L792,582.1 L793,582.1 L794,582.9 L795,583.9 L796,584.5 L797,584.5 L798,584.1 L799,583.5 L800,583.0 L801,583.0 L802,583.5 L803,584.4 L804,585.2 L805,585.7 L806,585.8 L807,585.7 L808,585.4 L809,585.2 L810,585.4 L811,586.1 L812,586.7 L813,586.6 L814,586.0 L815,585.4 L816,585.3 L817,585.6 L818,585.9 L819,586.1 L820,586.1 L821,586.0 L822,585.6 L823,585.3 L824,585.1 L825,585.3 L826,585.9 L827,586.7 L828,587.5 L829,588.1 L830,588.4 L831,588.4 L832,588.2 L833,588.2 L834,588.3 L835,588.6 L836,589.3 L837,590.4 L838,591.3 L839,591.2 L840,590.4 L841,590.0 L842,590.6 L843,592.0 L844,593.1 L845,593.4 L846,592.8 L847,591.6 L848,590.5 L849,589.8 L850,589.1 L851,588.5 L852,588.5 L853,589.6 L854,590.9 L855,591.6 L856,591.4 L857,590.8 L858,590.2 L859,590.1 L860,590.0 L861,589.7 L862,589.2 L863,589.2 L864,589.8 L865,590.4 L866,590.6 L867,590.8 L868,590.9 L869,591.2 L870,591.8 L871,592.7 L872,593.1 L873,592.8 L874,592.3 L875,591.9 L876,590.9 L877,589.0 L878,586.9 L879,585.7 L880,585.6 L881,586.2 L882,587.1 L883,587.8 L884,588.4 L885,588.5 L886,587.8 L887,586.8 L888,586.1 L889,586.1 L890,586.6 L891,587.2 L892,587.7 L893,588.1 L894,588.3 L895,588.4 L896,588.8 L897,589.4 L898,589.7 L899,589.8 L900,589.9 L901,590.1 L902,590.1 L903,589.6 L904,588.7 L905,587.6 L906,586.9 L907,586.7 L908,586.5 L909,586.2 L910,586.1 L911,587.0 L912,588.1 L913,588.7 L914,588.6 L915,588.5 L916,588.4 L917,588.0 L918,587.5 L919,587.3 L920,587.2 L921,586.6 L922,586.1 L923,586.0 L924,585.9 L925,585.3 L926,584.5 L927,584.5 L928,585.3 L929,586.7 L930,588.3 L931,589.8 L932,590.8 L933,590.8 L934,589.9 L935,588.5 L936,586.8 L937,584.9 L938,583.3 L939,582.3 L940,582.0 L941,582.4 L942,582.8 L943,583.1 L944,583.7 L945,584.2 L946,584.4 L947,584.0 L948,583.5 L949,583.3 L950,583.2 L951,583.1 L952,583.4 L953,584.1 L954,584.9" stroke="#5b2d72"/>
<path d="M680,479.0 L681,480.6 L682,482.1 L683,483.7 L684,485.2 L685,486.7 L686,488.3 L687,489.8 L688,491.3 L689,492.8 L690,494.3 L691,495.8 L692,497.3 L693,498.8 L694,500.2 L695,501.7 L696,503.2 L697,504.7 L698,506.2 L699,507.6 L700,509.1 L701,510.5 L702,512.0 L703,513.5 L704,514.9 L705,516.4 L706,517.8 L707,519.2 L708,520.7 L709,522.1 L710,523.5 L711,524.9 L712,526.2 L713,527.5 L714,528.7 L715,530.1 L716,531.5 L717,532.9 L718,534.3 L719,535.7 L720,536.9 L721,538.1 L722,539.4 L723,540.7 L724,541.9 L725,543.0 L726,543.9 L727,544.7 L728,545.5 L729,546.6 L730,548.0 L731,549.3 L732,550.3 L733,551.1 L734,551.9 L735,552.9 L736,554.0 L737,554.8 L738,555.4 L739,556.0 L740,556.9 L741,558.1 L742,559.6 L743,561.1 L744,562.3 L745,563.0 L746,563.3 L747,563.5 L748,563.6 L749,563.7 L750,563.9 L751,564.4 L752,565.4 L753,566.4 L754,567.1 L755,567.6 L756,568.2 L757,568.8 L758,569.5 L759,570.3 L760,571.1 L761,571.7 L762,572.1 L763,572.1 L764,572.3 L765,572.6 L766,573.1 L767,573.5 L768,573.7 L769,573.8 L770,574.1 L771,574.5 L772,575.2 L773,575.9 L774,576.7 L775,577.5 L776,578.3 L777,579.3 L778,580.2 L779,580.5 L780,580.3 L781,580.0 L782,580.0 L783,580.3 L784,581.0 L785,581.4 L786,581.0 L787,580.0 L788,579.5 L789,579.5 L790,579.6 L791,579.8 L792,580.4 L793,581.2 L794,582.2 L795,583.0 L796,583.3 L797,583.4 L798,583.6 L799,584.2 L800,585.2 L801,586.0 L802,586.4 L803,586.6 L804,586.3 L805,584.9 L806,582.9 L807,581.7 L808,582.0 L809,583.6 L810,585.2 L811,586.4 L812,586.8 L813,586.7 L814,586.2 L815,585.1 L816,584.1 L817,583.6 L818,583.7 L819,583.6 L820,583.4 L821,583.5 L822,584.0 L823,584.5 L824,585.3 L825,586.9 L826,588.9 L827,590.7 L828,591.5 L829,591.4 L830,590.8 L831,590.8 L832,591.3 L833,591.5 L834,590.8 L835,589.9 L836,589.6 L837,589.8 L838,589.9 L839,589.5 L840,589.4 L841,589.9 L842,591.1 L843,592.5 L844,593.8 L845,594.5 L846,594.7 L847,594.5 L848,593.9 L849,593.0 L850,592.3 L851,592.1 L852,592.1 L853,591.8 L854,591.5 L855,591.5 L856,591.6 L857,591.1 L858,590.4 L859,589.6 L860,588.5 L861,587.6 L862,587.5 L863,588.4 L864,589.5 L865,589.8 L866,589.2 L867,588.4 L868,588.2 L869,588.9 L870,590.1 L871,591.5 L872,592.8 L873,593.7 L874,593.7 L875,592.6 L876,590.7 L877,589.0 L878,588.1 L879,588.4 L880,589.1 L881,589.6 L882,589.7 L883,589.5 L884,589.5 L885,589.9 L886,590.3 L887,590.2 L888,589.8 L889,589.0 L890,588.4 L891,588.0 L892,587.9 L893,587.8 L894,587.9 L895,588.2 L896,588.9 L897,589.6 L898,589.4 L899,588.5 L900,587.5 L901,587.2 L902,587.6 L903,588.2 L904,588.2 L905,588.0 L906,588.1 L907,588.8 L908,589.8 L909,590.6 L910,590.8 L911,590.4 L912,590.1 L913,590.3 L914,590.7 L915,590.7 L916,589.9 L917,588.5 L918,587.4 L919,587.5 L920,588.0 L921,588.2 L922,587.6 L923,586.3 L924,584.6 L925,583.4 L926,583.1 L927,583.7 L928,584.5 L929,585.4 L930,586.1 L931,586.2 L932,585.6 L933,585.3 L934,585.6 L935,586.2 L936,586.5 L937,586.3 L938,585.7 L939,584.9 L940,584.1 L941,583.3 L942,583.0 L943,583.3 L944,583.8 L945,584.2 L946,584.3 L947,584.4 L948,584.2 L949,583.6 L950,582.6 L951,581.8 L952,581.6 L953,581.8 L954,581.9" stroke="#c77aa8"/>
<path d="M680,475.7 L681,477.2 L682,478.7 L683,480.2 L684,481.8 L685,483.3 L686,484.8 L687,486.2 L688,487.7 L689,489.2 L690,490.7 L691,492.2 L692,493.6 L693,495.1 L694,496.6 L695,498.0 L696,499.5 L697,501.0 L698,502.5 L699,504.0 L700,505.5 L701,506.9 L702,508.3 L703,509.7 L704,511.1 L705,512.5 L706,513.9 L707,515.3 L708,516.7 L709,518.0 L710,519.4 L711,520.9 L712,522.4 L713,523.8 L714,525.2 L715,526.6 L716,527.8 L717,529.0 L718,530.2 L719,531.5 L720,532.8 L721,534.1 L722,535.6 L723,536.9 L724,538.1 L725,539.2 L726,540.1 L727,541.1 L728,542.1 L729,543.0 L730,543.8 L731,544.8 L732,545.7 L733,546.6 L734,547.3 L735,547.9 L736,548.7 L737,549.7 L738,550.8 L739,552.1 L740,553.3 L741,554.5 L742,555.5 L743,556.2 L744,556.6 L745,556.8 L746,557.0 L747,557.5 L748,558.2 L749,559.1 L750,560.0 L751,560.8 L752,561.8 L753,562.8 L754,563.9 L755,564.6 L756,565.0 L757,565.1 L758,565.0 L759,565.2 L760,565.9 L761,567.0 L762,568.1 L763,568.8 L764,569.2 L765,569.4 L766,569.5 L767,569.7 L768,569.8 L769,569.7 L770,569.7 L771,569.8 L772,570.3 L773,571.2 L774,572.3 L775,573.1 L776,573.3 L777,573.1 L778,573.0 L779,573.6 L780,574.7 L781,576.0 L782,577.1 L783,577.7 L784,577.8 L785,577.3 L786,576.6 L787,576.3 L788,576.5 L789,577.0 L790,577.1 L791,576.7 L792,576.1 L793,575.7 L794,576.1 L795,577.4 L796,579.1 L797,580.3 L798,580.5 L799,580.3 L800,580.4 L801,581.0 L802,581.9 L803,582.7 L804,583.1 L805,583.1 L806,583.0 L807,583.0 L808,582.6 L809,581.9 L810,581.4 L811,581.2 L812,581.5 L813,582.0 L814,582.7 L815,583.2 L816,583.3 L817,583.1 L818,582.9 L819,582.8 L820,582.7 L821,582.6 L822,582.6 L823,582.9 L824,583.1 L825,583.2 L826,583.5 L827,584.2 L828,585.2 L829,586.0 L830,586.0 L831,585.4 L832,584.6 L833,584.0 L834,583.6 L835,583.7 L836,584.3 L837,585.2 L838,585.8 L839,586.0 L840,586.1 L841,586.1 L842,585.9 L843,585.4 L844,585.1 L845,585.4 L846,586.2 L847,586.7 L848,586.7 L849,586.4 L850,586.2 L851,586.1 L852,586.1 L853,586.1 L854,586.2 L855,586.8 L856,587.8 L857,588.5 L858,588.3 L859,587.3 L860,585.9 L861,584.5 L862,583.7 L863,583.8 L864,584.3 L865,584.6 L866,584.2 L867,583.4 L868,582.8 L869,582.9 L870,583.8 L871,585.3 L872,586.9 L873,588.2 L874,588.8 L875,588.5 L876,587.2 L877,585.4 L878,583.5 L879,582.2 L880,581.9 L881,582.4 L882,583.3 L883,584.3 L884,584.8 L885,584.5 L886,583.7 L887,583.5 L888,584.1 L889,584.8 L890,585.0 L891,584.8 L892,585.1 L893,585.9 L894,586.4 L895,586.7 L896,587.2 L897,588.0 L898,588.4 L899,587.7 L900,586.3 L901,584.7 L902,583.7 L903,583.2 L904,583.0 L905,582.9 L906,582.5 L907,582.0 L908,581.9 L909,582.1 L910,582.6 L911,583.1 L912,583.7 L913,584.4 L914,585.4 L915,586.3 L916,587.1 L917,587.8 L918,587.9 L919,587.4 L920,586.3 L921,585.0 L922,584.0 L923,583.7 L924,584.3 L925,584.9 L926,585.3 L927,585.2 L928,584.5 L929,583.4 L930,582.3 L931,581.8 L932,581.6 L933,581.6 L934,581.4 L935,581.1 L936,580.8 L937,580.7 L938,580.9 L939,581.1 L940,580.9 L941,580.0 L942,579.1 L943,578.5 L944,578.5 L945,579.1 L946,580.1 L947,581.2 L948,582.0 L949,582.3 L950,581.4 L951,579.8 L952,578.8 L953,578.9 L954,579.9" stroke="#e07a6a"/>
<path d="M680,476.5 L681,478.0 L682,479.6 L683,481.1 L684,482.6 L685,484.2 L686,485.7 L687,487.2 L688,488.7 L689,490.2 L690,491.7 L691,493.2 L692,494.6 L693,496.1 L694,497.6 L695,499.1 L696,500.5 L697,502.0 L698,503.5 L699,504.9 L700,506.4 L701,507.9 L702,509.4 L703,510.9 L704,512.4 L705,513.8 L706,515.2 L707,516.5 L708,517.8 L709,519.1 L710,520.4 L711,521.8 L712,523.3 L713,524.7 L714,526.0 L715,527.3 L716,528.5 L717,529.8 L718,531.2 L719,532.6 L720,533.8 L721,535.0 L722,536.0 L723,537.0 L724,538.0 L725,539.0 L726,539.9 L727,540.7 L728,541.6 L729,542.6 L730,543.8 L731,545.1 L732,546.2 L733,547.1 L734,547.8 L735,548.6 L736,549.7 L737,551.0 L738,552.4 L739,553.5 L740,554.6 L741,555.6 L742,556.7 L743,557.9 L744,558.8 L745,559.2 L746,559.4 L747,559.5 L748,559.8 L749,560.5 L750,561.6 L751,562.8 L752,563.9 L753,564.8 L754,565.3 L755,565.6 L756,565.9 L757,566.1 L758,566.3 L759,566.4 L760,566.6 L761,566.8 L762,567.2 L763,567.9 L764,569.0 L765,569.9 L766,570.5 L767,570.8 L768,571.0 L769,571.6 L770,572.4 L771,573.2 L772,573.7 L773,573.5 L774,572.7 L775,571.8 L776,571.8 L777,572.8 L778,574.3 L779,576.0 L780,577.2 L781,577.5 L782,577.2 L783,577.1 L784,577.3 L785,577.7 L786,578.1 L787,578.9 L788,580.2 L789,581.2 L790,581.3 L791,580.4 L792,579.1 L793,578.2 L794,577.7 L795,577.3 L796,576.9 L797,576.8 L798,577.6 L799,579.0 L800,580.5 L801,581.3 L802,581.8 L803,582.2 L804,582.4 L805,581.8 L806,580.6 L807,579.8 L808,580.1 L809,581.4 L810,582.8 L811,583.7 L812,583.8 L813,583.1 L814,582.1 L815,581.4 L816,581.1 L817,581.1 L818,581.2 L819,581.1 L820,581.0 L821,581.3 L822,582.1 L823,583.1 L824,583.9 L825,584.2 L826,583.9 L827,583.5 L828,583.9 L829,584.8 L830,585.8 L831,586.3 L832,586.1 L833,585.3 L834,584.0 L835,582.8 L836,582.6 L837,583.4 L838,584.8 L839,585.8 L840,586.2 L841,586.3 L842,586.6 L843,586.8 L844,587.0 L845,587.5 L846,588.7 L847,590.2 L848,591.2 L849,591.0 L850,589.6 L851,587.3 L852,584.9 L853,583.5 L854,583.3 L855,583.7 L856,584.0 L857,583.8 L858,583.6 L859,583.6 L860,583.6 L861,583.9 L862,584.6 L863,585.6 L864,586.6 L865,587.1 L866,586.8 L867,585.9 L868,585.1 L869,585.2 L870,585.8 L871,586.4 L872,586.9 L873,587.5 L874,587.8 L875,587.6 L876,586.9 L877,586.0 L878,584.8 L879,583.8 L880,583.4 L881,583.8 L882,584.4 L883,584.5 L884,584.1 L885,583.6 L886,583.3 L887,583.4 L888,584.0 L889,584.6 L890,584.8 L891,584.8 L892,584.9 L893,585.2 L894,585.8 L895,586.2 L896,586.4 L897,586.2 L898,585.7 L899,585.1 L900,584.6 L901,584.6 L902,584.8 L903,584.8 L904,584.2 L905,583.3 L906,582.4 L907,581.7 L908,581.7 L909,582.5 L910,583.4 L911,583.9 L912,583.3 L913,582.4 L914,582.2 L915,583.0 L916,584.2 L917,585.0 L918,584.7 L919,583.3 L920,581.9 L921,581.6 L922,582.3 L923,582.9 L924,582.9 L925,582.3 L926,581.5 L927,580.4 L928,579.7 L929,579.7 L930,580.5 L931,581.5 L932,582.1 L933,582.0 L934,581.4 L935,580.9 L936,580.4 L937,580.0 L938,579.7 L939,579.8 L940,580.5 L941,581.4 L942,582.0 L943,581.9 L944,581.2 L945,580.4 L946,580.0 L947,580.1 L948,580.4 L949,580.2 L950,579.5 L951,578.9 L952,579.1 L953,580.2 L954,580.8" stroke="#7d4aa2"/>
<path d="M680,479.1 L681,480.6 L682,482.1 L683,483.6 L684,485.1 L685,486.6 L686,488.0 L687,489.5 L688,490.9 L689,492.4 L690,493.8 L691,495.3 L692,496.7 L693,498.1 L694,499.6 L695,501.0 L696,502.4 L697,503.9 L698,505.3 L699,506.7 L700,508.1 L701,509.5 L702,510.9 L703,512.3 L704,513.8 L705,515.3 L706,516.7 L707,518.0 L708,519.2 L709,520.5 L710,521.8 L711,523.1 L712,524.3 L713,525.5 L714,526.7 L715,527.9 L716,529.2 L717,530.5 L718,531.8 L719,533.0 L720,534.2 L721,535.5 L722,536.6 L723,537.5 L724,538.4 L725,539.4 L726,540.6 L727,541.9 L728,543.1 L729,544.2 L730,545.1 L731,546.0 L732,546.8 L733,547.6 L734,548.5 L735,549.5 L736,550.5 L737,551.4 L738,552.2 L739,553.2 L740,554.3 L741,555.5 L742,556.6 L743,557.5 L744,558.0 L745,558.3 L746,558.6 L747,559.1 L748,559.8 L749,560.4 L750,560.9 L751,561.3 L752,562.0 L753,562.7 L754,563.2 L755,563.5 L756,564.0 L757,565.0 L758,566.1 L759,567.0 L760,567.8 L761,568.5 L762,568.9 L763,569.1 L764,569.1 L765,569.1 L766,569.2 L767,569.6 L768,570.2 L769,570.7 L770,571.0 L771,571.2 L772,571.7 L773,572.3 L774,573.1 L775,573.7 L776,574.0 L777,573.6 L778,572.7 L779,572.3 L780,572.9 L781,574.3 L782,575.9 L783,577.0 L784,577.5 L785,577.9 L786,578.1 L787,577.9 L788,577.5 L789,577.2 L790,577.3 L791,577.4 L792,577.5 L793,577.6 L794,577.6 L795,577.5 L796,577.2 L797,576.9 L798,577.1 L799,577.9 L800,578.9 L801,579.7 L802,580.1 L803,580.2 L804,580.1 L805,580.0 L806,580.1 L807,580.5 L808,581.3 L809,582.5 L810,583.5 L811,583.6 L812,583.0 L813,582.7 L814,583.0 L815,583.4 L816,583.2 L817,582.7 L818,582.4 L819,582.2 L820,582.1 L821,581.9 L822,581.8 L823,582.0 L824,582.7 L825,583.3 L826,583.6 L827,583.5 L828,583.3 L829,583.5 L830,584.6 L831,585.9 L832,586.6 L833,586.2 L834,585.3 L835,584.7 L836,584.5 L837,584.7 L838,585.0 L839,585.2 L840,585.4 L841,586.0 L842,587.0 L843,587.5 L844,587.5 L845,587.2 L846,587.1 L847,587.1 L848,586.8 L849,586.0 L850,585.3 L851,584.7 L852,584.3 L853,583.9 L854,583.7 L855,583.7 L856,584.2 L857,584.9 L858,585.6 L859,585.9 L860,586.2 L861,587.0 L862,587.9 L863,588.7 L864,589.3 L865,589.4 L866,588.9 L867,588.0 L868,587.0 L869,586.6 L870,587.2 L871,588.2 L872,588.9 L873,588.9 L874,588.3 L875,587.4 L876,586.4 L877,585.6 L878,585.1 L879,584.7 L880,584.4 L881,584.4 L882,584.6 L883,584.5 L884,584.0 L885,583.4 L886,583.3 L887,583.4 L888,583.7 L889,584.1 L890,584.9 L891,585.6 L892,585.7 L893,585.2 L894,584.8 L895,584.9 L896,585.2 L897,585.4 L898,585.6 L899,585.5 L900,585.2 L901,585.2 L902,585.6 L903,586.0 L904,586.2 L905,585.9 L906,585.2 L907,584.3 L908,583.7 L909,583.6 L910,583.7 L911,583.7 L912,583.8 L913,584.2 L914,584.9 L915,585.5 L916,585.8 L917,585.5 L918,584.8 L919,584.0 L920,583.5 L921,583.3 L922,583.4 L923,583.8 L924,584.6 L925,585.0 L926,584.5 L927,583.8 L928,583.8 L929,584.5 L930,585.1 L931,584.6 L932,582.9 L933,581.3 L934,580.7 L935,580.8 L936,581.0 L937,581.2 L938,581.3 L939,581.2 L940,580.7 L941,579.9 L942,579.1 L943,578.7 L944,578.7 L945,579.1 L946,579.4 L947,579.6 L948,579.8 L949,579.9 L950,579.8 L951,579.6 L952,579.5 L953,579.9 L954,580.4" stroke="#6cc497"/>
<path d="M680,476.8 L681,478.3 L682,479.9 L683,481.4 L684,482.9 L685,484.5 L686,486.0 L687,487.5 L688,489.0 L689,490.5 L690,492.0 L691,493.5 L692,495.0 L693,496.5 L694,498.0 L695,499.5 L696,500.9 L697,502.4 L698,503.8 L699,505.3 L700,506.8 L701,508.2 L702,509.6 L703,511.0 L704,512.4 L705,513.9 L706,515.4 L707,516.8 L708,518.2 L709,519.7 L710,521.2 L711,522.7 L712,524.0 L713,525.2 L714,526.3 L715,527.4 L716,528.6 L717,530.0 L718,531.5 L719,533.1 L720,534.5 L721,535.8 L722,536.9 L723,537.9 L724,538.8 L725,539.7 L726,540.7 L727,541.7 L728,542.6 L729,543.5 L730,544.7 L731,545.9 L732,547.3 L733,548.4 L734,549.4 L735,550.1 L736,550.8 L737,551.7 L738,552.8 L739,553.8 L740,554.7 L741,555.6 L742,556.4 L743,557.0 L744,557.4 L745,557.8 L746,558.4 L747,559.1 L748,559.5 L749,559.8 L750,560.3 L751,561.1 L752,562.3 L753,563.8 L754,565.3 L755,566.3 L756,567.0 L757,567.3 L758,567.6 L759,568.1 L760,569.0 L761,570.0 L762,570.7 L763,570.8 L764,570.8 L765,570.8 L766,571.1 L767,571.6 L768,572.2 L769,572.5 L770,572.4 L771,572.4 L772,572.8 L773,573.8 L774,574.7 L775,575.3 L776,575.6 L777,576.0 L778,576.6 L779,577.0 L780,577.2 L781,577.2 L782,577.2 L783,576.9 L784,576.5 L785,575.9 L786,575.6 L787,575.8 L788,576.6 L789,577.7 L790,578.5 L791,578.5 L792,578.1 L793,578.1 L794,578.8 L795,579.6 L796,579.8 L797,579.4 L798,579.0 L799,579.1 L800,579.7 L801,580.3 L802,580.3 L803,579.8 L804,579.2 L805,579.0 L806,579.1 L807,579.2 L808,579.5 L809,580.1 L810,581.2 L811,582.7 L812,583.8 L813,584.3 L814,584.1 L815,583.6 L816,583.2 L817,582.8 L818,582.1 L819,581.6 L820,581.6 L821,581.9 L822,581.8 L823,581.5 L824,581.9 L825,583.6 L826,585.8 L827,587.6 L828,588.0 L829,587.2 L830,586.0 L831,584.7 L832,583.8 L833,583.1 L834,582.8 L835,582.9 L836,583.4 L837,584.6 L838,586.1 L839,587.5 L840,588.3 L841,588.7 L842,588.5 L843,588.0 L844,587.3 L845,586.9 L846,586.8 L847,586.8 L848,586.6 L849,586.3 L850,586.0 L851,585.9 L852,585.8 L853,585.5 L854,585.5 L855,585.8 L856,586.6 L857,587.5 L858,587.9 L859,587.5 L860,586.6 L861,585.7 L862,585.1 L863,585.0 L864,585.4 L865,586.2 L866,586.8 L867,587.1 L868,587.5 L869,588.2 L870,588.8 L871,588.6 L872,587.7 L873,586.8 L874,586.3 L875,586.0 L876,585.3 L877,584.5 L878,583.9 L879,583.9 L880,584.5 L881,585.6 L882,587.0 L883,588.0 L884,588.5 L885,588.0 L886,586.4 L887,584.2 L888,582.7 L889,582.7 L890,583.4 L891,584.1 L892,584.7 L893,585.4 L894,585.9 L895,585.6 L896,584.8 L897,584.5 L898,585.2 L899,586.0 L900,586.1 L901,585.5 L902,584.6 L903,583.4 L904,582.1 L905,581.5 L906,582.2 L907,583.6 L908,584.4 L909,584.1 L910,583.2 L911,582.5 L912,582.4 L913,582.8 L914,583.4 L915,584.0 L916,584.3 L917,584.2 L918,583.8 L919,583.4 L920,583.3 L921,583.7 L922,584.1 L923,584.1 L924,583.8 L925,583.5 L926,583.7 L927,584.2 L928,584.7 L929,584.6 L930,584.0 L931,583.6 L932,583.9 L933,584.4 L934,584.5 L935,584.0 L936,583.5 L937,583.4 L938,583.3 L939,583.1 L940,582.8 L941,582.9 L942,583.0 L943,582.6 L944,582.0 L945,581.8 L946,581.8 L947,581.5 L948,580.8 L949,580.2 L950,579.9 L951,579.7 L952,579.5 L953,579.4 L954,579.7" stroke="#d86a50"/>
<path d="M680,479.0 L681,480.6 L682,482.1 L683,483.7 L684,485.2 L685,486.7 L686,488.3 L687,489.8 L688,491.3 L689,492.8 L690,494.3 L691,495.8 L692,497.3 L693,498.8 L694,500.2 L695,501.7 L696,503.2 L697,504.6 L698,506.1 L699,507.6 L700,509.1 L701,510.6 L702,512.0 L703,513.4 L704,514.8 L705,516.3 L706,517.7 L707,519.0 L708,520.3 L709,521.7 L710,523.0 L711,524.4 L712,525.7 L713,527.1 L714,528.6 L715,530.2 L716,531.6 L717,533.0 L718,534.2 L719,535.4 L720,536.6 L721,537.8 L722,539.0 L723,540.1 L724,541.1 L725,542.2 L726,543.4 L727,544.7 L728,545.9 L729,547.0 L730,548.0 L731,549.0 L732,549.9 L733,550.7 L734,551.5 L735,552.5 L736,553.5 L737,554.6 L738,555.5 L739,556.6 L740,557.6 L741,558.6 L742,559.5 L743,560.4 L744,561.3 L745,562.0 L746,562.5 L747,562.9 L748,563.3 L749,564.1 L750,565.2 L751,566.6 L752,567.7 L753,568.3 L754,568.5 L755,568.6 L756,568.8 L757,569.1 L758,569.5 L759,570.0 L760,570.5 L761,571.3 L762,572.2 L763,573.0 L764,573.3 L765,573.0 L766,572.5 L767,572.4 L768,572.9 L769,573.7 L770,574.6 L771,575.7 L772,576.8 L773,577.7 L774,578.1 L775,578.1 L776,578.2 L777,578.6 L778,578.8 L779,578.6 L780,578.6 L781,579.3 L782,580.4 L783,581.3 L784,581.7 L785,581.4 L786,581.0 L787,581.2 L788,582.1 L789,583.4 L790,584.9 L791,586.0 L792,586.5 L793,586.1 L794,585.0 L795,583.9 L796,582.9 L797,581.8 L798,581.1 L799,581.2 L800,582.4 L801,583.8 L802,584.6 L803,584.5 L804,584.1 L805,584.1 L806,584.5 L807,585.1 L808,585.4 L809,584.8 L810,584.1 L811,584.2 L812,585.1 L813,585.7 L814,585.8 L815,585.9 L816,586.1 L817,586.2 L818,586.2 L819,586.4 L820,586.9 L821,587.4 L822,587.4 L823,587.1 L824,586.9 L825,587.8 L826,589.6 L827,591.8 L828,593.7 L829,594.7 L830,595.0 L831,594.8 L832,594.3 L833,593.8 L834,593.4 L835,593.0 L836,592.6 L837,591.7 L838,590.6 L839,589.9 L840,590.3 L841,590.8 L842,590.9 L843,590.7 L844,591.0 L845,591.8 L846,592.5 L847,592.6 L848,592.1 L849,591.5 L850,591.6 L851,592.2 L852,592.6 L853,592.1 L854,591.0 L855,590.1 L856,589.4 L857,589.0 L858,589.2 L859,589.6 L860,590.3 L861,590.9 L862,591.1 L863,590.7 L864,590.1 L865,589.5 L866,589.4 L867,589.8 L868,590.4 L869,590.8 L870,591.1 L871,591.6 L872,592.2 L873,592.5 L874,592.0 L875,590.7 L876,589.0 L877,587.5 L878,586.5 L879,586.3 L880,586.8 L881,588.0 L882,589.4 L883,590.3 L884,590.5 L885,590.0 L886,589.4 L887,589.6 L888,590.4 L889,591.2 L890,591.4 L891,591.0 L892,590.5 L893,589.9 L894,589.0 L895,587.7 L896,586.5 L897,585.8 L898,586.0 L899,587.0 L900,588.2 L901,589.2 L902,589.7 L903,589.9 L904,590.0 L905,589.8 L906,589.3 L907,588.5 L908,587.4 L909,586.3 L910,585.8 L911,586.3 L912,587.1 L913,587.1 L914,586.3 L915,585.3 L916,584.9 L917,584.9 L918,585.6 L919,586.9 L920,588.3 L921,589.1 L922,589.1 L923,588.7 L924,588.2 L925,588.0 L926,588.0 L927,587.8 L928,587.4 L929,587.1 L930,587.1 L931,587.3 L932,587.6 L933,588.0 L934,588.1 L935,587.4 L936,586.1 L937,585.4 L938,585.5 L939,585.8 L940,585.4 L941,584.9 L942,584.9 L943,585.3 L944,585.9 L945,586.5 L946,586.9 L947,586.9 L948,586.7 L949,586.6 L950,586.5 L951,586.3 L952,585.8 L953,585.1 L954,584.4" stroke="#7b3f9a"/>
<path d="M680,473.7 L681,475.3 L682,476.8 L683,478.3 L684,479.8 L685,481.3 L686,482.9 L687,484.4 L688,485.9 L689,487.4 L690,488.8 L691,490.3 L692,491.8 L693,493.3 L694,494.8 L695,496.3 L696,497.8 L697,499.3 L698,500.8 L699,502.3 L700,503.8 L701,505.3 L702,506.8 L703,508.3 L704,509.7 L705,511.1 L706,512.6 L707,514.0 L708,515.5 L709,516.9 L710,518.3 L711,519.7 L712,521.0 L713,522.4 L714,523.6 L715,524.8 L716,525.9 L717,527.1 L718,528.4 L719,529.9 L720,531.5 L721,533.0 L722,534.2 L723,535.2 L724,536.2 L725,537.2 L726,538.2 L727,539.3 L728,540.5 L729,541.8 L730,543.1 L731,544.2 L732,545.0 L733,545.8 L734,546.6 L735,547.6 L736,548.6 L737,549.6 L738,550.7 L739,551.9 L740,552.9 L741,553.5 L742,553.8 L743,554.3 L744,555.3 L745,556.5 L746,557.8 L747,558.8 L748,559.5 L749,560.0 L750,560.4 L751,560.8 L752,561.5 L753,562.2 L754,562.7 L755,563.0 L756,563.5 L757,564.3 L758,565.3 L759,566.5 L760,567.8 L761,568.7 L762,569.3 L763,569.5 L764,569.7 L765,569.6 L766,569.3 L767,568.7 L768,568.4 L769,568.7 L770,569.5 L771,570.4 L772,571.0 L773,571.0 L774,570.9 L775,571.3 L776,572.3 L777,573.4 L778,573.9 L779,573.9 L780,574.0 L781,574.5 L782,575.4 L783,576.4 L784,577.1 L785,577.5 L786,577.9 L787,578.6 L788,579.6 L789,580.3 L790,580.5 L791,580.1 L792,579.4 L793,578.8 L794,578.8 L795,579.5 L796,580.5 L797,581.0 L798,580.4 L799,579.1 L800,577.9 L801,577.6 L802,578.4 L803,579.9 L804,581.3 L805,582.1 L806,582.3 L807,582.8 L808,583.6 L809,584.3 L810,584.3 L811,583.9 L812,583.6 L813,583.4 L814,583.0 L815,582.7 L816,582.6 L817,582.7 L818,582.8 L819,582.9 L820,583.0 L821,583.0 L822,582.7 L823,582.1 L824,581.6 L825,581.3 L826,581.5 L827,582.2 L828,582.9 L829,583.5 L830,584.1 L831,584.6 L832,584.9 L833,585.1 L834,585.4 L835,585.9 L836,586.6 L837,587.3 L838,587.5 L839,587.1 L840,586.4 L841,585.8 L842,585.7 L843,586.1 L844,586.6 L845,587.0 L846,587.0 L847,586.3 L848,584.9 L849,583.8 L850,583.6 L851,584.1 L852,584.4 L853,584.3 L854,584.1 L855,583.9 L856,583.4 L857,582.5 L858,581.8 L859,581.6 L860,582.1 L861,583.2 L862,584.3 L863,584.9 L864,585.3 L865,586.0 L866,587.0 L867,587.9 L868,588.4 L869,588.4 L870,588.0 L871,587.7 L872,587.6 L873,587.9 L874,588.5 L875,589.1 L876,589.2 L877,588.2 L878,586.3 L879,584.7 L880,583.7 L881,583.4 L882,583.6 L883,584.2 L884,584.9 L885,585.6 L886,586.1 L887,586.0 L888,585.0 L889,583.4 L890,582.4 L891,582.6 L892,583.5 L893,584.2 L894,584.2 L895,583.5 L896,582.8 L897,582.5 L898,582.5 L899,582.6 L900,582.9 L901,583.5 L902,583.9 L903,584.0 L904,583.9 L905,583.8 L906,583.5 L907,582.5 L908,581.3 L909,580.8 L910,580.9 L911,581.6 L912,582.8 L913,584.5 L914,585.9 L915,586.6 L916,586.3 L917,585.4 L918,584.5 L919,584.3 L920,584.7 L921,585.5 L922,586.1 L923,586.2 L924,585.6 L925,584.3 L926,582.9 L927,581.8 L928,581.2 L929,581.0 L930,581.1 L931,580.9 L932,580.0 L933,579.1 L934,579.0 L935,579.8 L936,580.6 L937,580.7 L938,580.2 L939,579.3 L940,578.7 L941,578.9 L942,580.0 L943,581.3 L944,581.9 L945,581.4 L946,580.5 L947,580.1 L948,580.4 L949,581.2 L950,582.0 L951,582.5 L952,582.4 L953,582.3 L954,582.3" stroke="#cc5a5a"/>
<path d="M680,477.4 L681,479.0 L682,480.5 L683,482.0 L684,483.5 L685,485.0 L686,486.5 L687,488.0 L688,489.5 L689,491.0 L690,492.5 L691,494.0 L692,495.4 L693,496.9 L694,498.4 L695,499.8 L696,501.3 L697,502.7 L698,504.2 L699,505.7 L700,507.1 L701,508.6 L702,510.0 L703,511.3 L704,512.6 L705,514.0 L706,515.5 L707,517.0 L708,518.4 L709,519.7 L710,521.0 L711,522.2 L712,523.5 L713,524.6 L714,525.7 L715,526.9 L716,528.2 L717,529.7 L718,531.1 L719,532.5 L720,533.8 L721,535.1 L722,536.5 L723,537.9 L724,539.1 L725,540.1 L726,540.9 L727,541.8 L728,542.9 L729,544.3 L730,545.6 L731,546.6 L732,547.1 L733,547.6 L734,548.2 L735,549.3 L736,550.5 L737,551.8 L738,552.9 L739,553.8 L740,554.6 L741,555.2 L742,555.7 L743,556.4 L744,557.4 L745,558.5 L746,559.0 L747,559.2 L748,559.7 L749,560.4 L750,561.2 L751,561.8 L752,562.6 L753,563.4 L754,564.0 L755,564.1 L756,563.9 L757,564.0 L758,564.7 L759,566.0 L760,567.2 L761,568.2 L762,568.8 L763,569.1 L764,568.9 L765,568.8 L766,568.9 L767,569.5 L768,570.8 L769,572.2 L770,573.1 L771,573.1 L772,572.8 L773,572.7 L774,573.2 L775,574.3 L776,575.7 L777,576.9 L778,577.5 L779,577.5 L780,577.4 L781,577.6 L782,577.9 L783,578.0 L784,577.7 L785,577.4 L786,577.1 L787,576.9 L788,576.7 L789,576.9 L790,577.7 L791,578.6 L792,579.0 L793,578.5 L794,577.4 L795,576.5 L796,576.3 L797,576.9 L798,577.6 L799,578.3 L800,579.8 L801,582.1 L802,584.0 L803,585.0 L804,585.2 L805,585.0 L806,584.2 L807,582.9 L808,581.7 L809,581.4 L810,581.9 L811,582.7 L812,583.5 L813,584.0 L814,584.2 L815,584.2 L816,584.0 L817,583.5 L818,582.7 L819,581.7 L820,581.1 L821,581.3 L822,582.1 L823,582.8 L824,583.3 L825,583.5 L826,583.6 L827,583.7 L828,583.8 L829,583.7 L830,583.7 L831,584.3 L832,585.6 L833,586.8 L834,587.6 L835,588.1 L836,588.3 L837,588.2 L838,587.9 L839,587.8 L840,587.9 L841,587.8 L842,587.6 L843,587.3 L844,586.9 L845,586.6 L846,586.6 L847,587.1 L848,587.4 L849,587.1 L850,586.7 L851,586.6 L852,586.6 L853,586.4 L854,586.1 L855,586.2 L856,586.5 L857,586.4 L858,585.6 L859,584.5 L860,583.7 L861,583.2 L862,583.2 L863,583.8 L864,584.6 L865,585.6 L866,586.9 L867,587.7 L868,587.6 L869,586.6 L870,585.5 L871,584.7 L872,584.0 L873,583.2 L874,582.8 L875,583.4 L876,584.5 L877,585.4 L878,585.7 L879,585.4 L880,585.2 L881,585.2 L882,585.4 L883,585.6 L884,585.6 L885,585.4 L886,584.9 L887,584.3 L888,583.8 L889,583.5 L890,583.4 L891,583.2 L892,583.2 L893,583.4 L894,584.1 L895,585.1 L896,586.1 L897,586.4 L898,585.7 L899,584.8 L900,584.3 L901,584.4 L902,584.9 L903,585.5 L904,586.1 L905,586.4 L906,586.1 L907,585.7 L908,585.2 L909,584.5 L910,583.6 L911,583.1 L912,583.4 L913,584.0 L914,584.3 L915,584.3 L916,584.7 L917,585.1 L918,584.6 L919,583.0 L920,581.4 L921,581.0 L922,581.8 L923,582.8 L924,583.2 L925,583.0 L926,583.0 L927,583.6 L928,584.5 L929,584.8 L930,584.0 L931,582.6 L932,581.4 L933,580.5 L934,580.1 L935,580.2 L936,580.3 L937,580.1 L938,579.8 L939,580.0 L940,580.5 L941,580.6 L942,580.4 L943,580.4 L944,580.6 L945,580.6 L946,580.1 L947,579.9 L948,580.7 L949,581.6 L950,582.0 L951,582.0 L952,581.9 L953,581.6 L954,581.2" stroke="#6a3488"/>
<path d="M680,478.3 L681,479.9 L682,481.4 L683,483.0 L684,484.5 L685,486.1 L686,487.6 L687,489.1 L688,490.6 L689,492.1 L690,493.6 L691,495.1 L692,496.6 L693,498.1 L694,499.6 L695,501.0 L696,502.5 L697,504.0 L698,505.4 L699,506.9 L700,508.5 L701,509.9 L702,511.4 L703,512.8 L704,514.2 L705,515.7 L706,517.2 L707,518.7 L708,520.1 L709,521.4 L710,522.7 L711,524.0 L712,525.3 L713,526.6 L714,528.0 L715,529.4 L716,530.8 L717,532.0 L718,533.3 L719,534.5 L720,535.9 L721,537.3 L722,538.5 L723,539.6 L724,540.6 L725,541.6 L726,542.7 L727,543.9 L728,545.0 L729,546.0 L730,547.1 L731,548.3 L732,549.3 L733,550.2 L734,551.2 L735,552.3 L736,553.6 L737,554.9 L738,555.9 L739,556.8 L740,557.3 L741,557.8 L742,558.4 L743,559.2 L744,560.1 L745,560.8 L746,561.2 L747,561.8 L748,562.7 L749,563.8 L750,564.6 L751,565.3 L752,566.0 L753,566.7 L754,567.3 L755,567.9 L756,568.4 L757,568.6 L758,568.7 L759,568.8 L760,569.2 L761,570.0 L762,570.9 L763,571.4 L764,571.4 L765,571.1 L766,571.0 L767,571.4 L768,572.2 L769,573.3 L770,574.1 L771,574.7 L772,575.2 L773,575.9 L774,576.1 L775,575.9 L776,575.6 L777,575.7 L778,576.2 L779,576.7 L780,577.0 L781,577.4 L782,578.0 L783,578.9 L784,579.8 L785,580.7 L786,581.5 L787,581.9 L788,581.8 L789,581.6 L790,581.0 L791,580.1 L792,579.1 L793,578.7 L794,578.9 L795,579.4 L796,579.9 L797,580.2 L798,580.8 L799,581.5 L800,581.9 L801,581.8 L802,581.4 L803,581.5 L804,582.3 L805,583.2 L806,583.7 L807,583.8 L808,583.8 L809,583.8 L810,583.9 L811,584.2 L812,584.7 L813,585.4 L814,586.0 L815,586.2 L816,586.3 L817,586.4 L818,586.5 L819,586.2 L820,585.6 L821,585.4 L822,585.9 L823,586.7 L824,587.1 L825,586.9 L826,586.2 L827,585.5 L828,584.9 L829,584.8 L830,585.0 L831,585.4 L832,585.7 L833,586.2 L834,587.0 L835,587.8 L836,588.0 L837,587.8 L838,587.9 L839,588.4 L840,588.9 L841,588.8 L842,588.5 L843,588.8 L844,589.9 L845,590.9 L846,591.6 L847,591.9 L848,591.9 L849,591.1 L850,589.6 L851,588.1 L852,587.5 L853,587.4 L854,586.8 L855,586.1 L856,585.9 L857,586.6 L858,587.8 L859,588.9 L860,589.2 L861,588.7 L862,587.8 L863,587.2 L864,587.1 L865,587.1 L866,587.0 L867,587.1 L868,587.8 L869,589.0 L870,590.0 L871,590.4 L872,590.2 L873,590.1 L874,590.3 L875,590.6 L876,590.6 L877,590.0 L878,588.9 L879,587.8 L880,587.4 L881,587.5 L882,587.8 L883,588.2 L884,588.8 L885,589.4 L886,589.8 L887,589.8 L888,589.6 L889,589.5 L890,589.4 L891,588.9 L892,587.7 L893,585.9 L894,584.1 L895,583.4 L896,583.8 L897,585.1 L898,586.5 L899,587.6 L900,588.0 L901,587.7 L902,586.8 L903,585.4 L904,584.0 L905,582.7 L906,582.1 L907,582.2 L908,582.6 L909,583.2 L910,584.2 L911,585.7 L912,586.7 L913,586.5 L914,585.7 L915,585.0 L916,584.7 L917,584.6 L918,584.5 L919,584.6 L920,584.8 L921,585.5 L922,586.3 L923,586.4 L924,585.4 L925,584.1 L926,583.6 L927,584.2 L928,585.1 L929,585.7 L930,585.9 L931,585.9 L932,585.5 L933,585.1 L934,584.6 L935,583.6 L936,582.3 L937,581.3 L938,581.1 L939,581.4 L940,581.5 L941,581.1 L942,580.5 L943,580.6 L944,581.4 L945,582.3 L946,582.7 L947,582.8 L948,582.8 L949,582.7 L950,582.4 L951,582.0 L952,581.9 L953,582.4 L954,583.1" stroke="#9b75c4"/>
</g>
<line x1="252" y1="120.5" x2="252" y2="594.5" stroke="#66ee66" stroke-width="1.7"/>
<line x1="954.3" y1="120.5" x2="954.3" y2="594.5" stroke="#66ee66" stroke-width="1.7"/>
<line x1="252" y1="594.5" x2="954.3" y2="594.5" stroke="#f87272" stroke-width="1.6"/>
</svg>
<div class="t" id="t66" style="left:233.80px;top:591.00px;font-size:8.8px;color:#3a3d5c;-webkit-text-stroke:0.12px #3a3d5c;transform:scaleX(0.9300);letter-spacing:-0.364px;">0.0</div>
<div class="t" id="t67" style="left:961.70px;top:591.00px;font-size:8.8px;color:#3a3d5c;-webkit-text-stroke:0.12px #3a3d5c;transform:scaleX(0.9300);letter-spacing:-0.472px;">0.0</div>
<div class="t" id="t68" style="left:233.80px;top:543.00px;font-size:8.8px;color:#3a3d5c;-webkit-text-stroke:0.12px #3a3d5c;transform:scaleX(0.9300);letter-spacing:-0.364px;">0.1</div>
<div class="t" id="t69" style="left:961.70px;top:543.00px;font-size:8.8px;color:#3a3d5c;-webkit-text-stroke:0.12px #3a3d5c;transform:scaleX(0.9300);letter-spacing:-0.472px;">0.1</div>
<div class="t" id="t70" style="left:233.80px;top:496.00px;font-size:8.8px;color:#3a3d5c;-webkit-text-stroke:0.12px #3a3d5c;transform:scaleX(0.9300);letter-spacing:-0.364px;">0.2</div>
<div class="t" id="t71" style="left:961.70px;top:496.00px;font-size:8.8px;color:#3a3d5c;-webkit-text-stroke:0.12px #3a3d5c;transform:scaleX(0.9300);letter-spacing:-0.472px;">0.2</div>
<div class="t" id="t72" style="left:233.80px;top:449.00px;font-size:8.8px;color:#3a3d5c;-webkit-text-stroke:0.12px #3a3d5c;transform:scaleX(0.9300);letter-spacing:-0.364px;">0.3</div>
<div class="t" id="t73" style="left:961.70px;top:449.00px;font-size:8.8px;color:#3a3d5c;-webkit-text-stroke:0.12px #3a3d5c;transform:scaleX(0.9300);letter-spacing:-0.472px;">0.3</div>
<div class="t" id="t74" style="left:233.80px;top:401.00px;font-size:8.8px;color:#3a3d5c;-webkit-text-stroke:0.12px #3a3d5c;transform:scaleX(0.9300);letter-spacing:-0.364px;">0.4</div>
<div class="t" id="t75" style="left:961.70px;top:401.00px;font-size:8.8px;color:#3a3d5c;-webkit-text-stroke:0.12px #3a3d5c;transform:scaleX(0.9300);letter-spacing:-0.472px;">0.4</div>
<div class="t" id="t76" style="left:233.80px;top:354.00px;font-size:8.8px;color:#3a3d5c;-webkit-text-stroke:0.12px #3a3d5c;transform:scaleX(0.9300);letter-spacing:-0.364px;">0.5</div>
<div class="t" id="t77" style="left:961.70px;top:354.00px;font-size:8.8px;color:#3a3d5c;-webkit-text-stroke:0.12px #3a3d5c;transform:scaleX(0.9300);letter-spacing:-0.472px;">0.5</div>
<div class="t" id="t78" style="left:233.80px;top:306.00px;font-size:8.8px;color:#3a3d5c;-webkit-text-stroke:0.12px #3a3d5c;transform:scaleX(0.9300);letter-spacing:-0.364px;">0.6</div>
<div class="t" id="t79" style="left:961.70px;top:306.00px;font-size:8.8px;color:#3a3d5c;-webkit-text-stroke:0.12px #3a3d5c;transform:scaleX(0.9300);letter-spacing:-0.472px;">0.6</div>
<div class="t" id="t80" style="left:233.80px;top:259.00px;font-size:8.8px;color:#3a3d5c;-webkit-text-stroke:0.12px #3a3d5c;transform:scaleX(0.9300);letter-spacing:-0.364px;">0.7</div>
<div class="t" id="t81" style="left:961.70px;top:259.00px;font-size:8.8px;color:#3a3d5c;-webkit-text-stroke:0.12px #3a3d5c;transform:scaleX(0.9300);letter-spacing:-0.472px;">0.7</div>
<div class="t" id="t82" style="left:233.80px;top:211.00px;font-size:8.8px;color:#3a3d5c;-webkit-text-stroke:0.12px #3a3d5c;transform:scaleX(0.9300);letter-spacing:-0.364px;">0.8</div>
<div class="t" id="t83" style="left:961.70px;top:211.00px;font-size:8.8px;color:#3a3d5c;-webkit-text-stroke:0.12px #3a3d5c;transform:scaleX(0.9300);letter-spacing:-0.472px;">0.8</div>
<div class="t" id="t84" style="left:233.80px;top:164.00px;font-size:8.8px;color:#3a3d5c;-webkit-text-stroke:0.12px #3a3d5c;transform:scaleX(0.9300);letter-spacing:-0.364px;">0.9</div>
<div class="t" id="t85" style="left:961.70px;top:164.00px;font-size:8.8px;color:#3a3d5c;-webkit-text-stroke:0.12px #3a3d5c;transform:scaleX(0.9300);letter-spacing:-0.472px;">0.9</div>
<div class="t" id="t86" style="left:246.60px;top:108.00px;font-size:8.8px;color:#3a3d5c;-webkit-text-stroke:0.12px #3a3d5c;transform:scaleX(0.9300);letter-spacing:-1.052px;">AU</div>
<div class="t" id="t87" style="left:949.00px;top:108.00px;font-size:8.8px;color:#3a3d5c;-webkit-text-stroke:0.12px #3a3d5c;transform:scaleX(0.9300);letter-spacing:-1.052px;">AU</div>
<div class="t" id="t88" style="left:237.00px;top:600.00px;font-size:8.8px;color:#3a3d5c;-webkit-text-stroke:0.12px #3a3d5c;">&lambda;</div>
<div class="t" id="t89" style="left:258.70px;top:600.00px;font-size:8.6px;color:#1e2040;font-weight:bold;transform:scaleX(0.9573);">196-197</div>
<div class="t" id="t90" style="left:493.60px;top:600.00px;font-size:8.6px;color:#1e2040;font-weight:bold;">266-268</div>
<div class="t" id="t91" style="left:613.70px;top:600.00px;font-size:8.8px;color:#3a3d5c;-webkit-text-stroke:0.12px #3a3d5c;transform:scaleX(0.9300);letter-spacing:-0.516px;">300</div>
<div class="t" id="t92" style="left:780.60px;top:600.00px;font-size:8.8px;color:#3a3d5c;-webkit-text-stroke:0.12px #3a3d5c;transform:scaleX(0.9300);letter-spacing:-0.247px;">350</div>
<div class="t" id="t93" style="left:947.60px;top:600.00px;font-size:8.8px;color:#3a3d5c;-webkit-text-stroke:0.12px #3a3d5c;transform:scaleX(0.9300);letter-spacing:-0.462px;">400</div>
<div class="a" style="left:208px;top:313px;width:2px;height:2px;border-radius:1px;background:#b8b8b8"></div>
<div class="a" style="left:208px;top:320px;width:2px;height:2px;border-radius:1px;background:#b8b8b8"></div>
<div class="a" style="left:208px;top:327px;width:2px;height:2px;border-radius:1px;background:#b8b8b8"></div>
<div class="a" style="left:208px;top:373px;width:2px;height:2px;border-radius:1px;background:#b8b8b8"></div>
<div class="a" style="left:208px;top:380px;width:2px;height:2px;border-radius:1px;background:#b8b8b8"></div>
<div class="a" style="left:208px;top:387px;width:2px;height:2px;border-radius:1px;background:#b8b8b8"></div>
<div class="a" style="left:986.5px;top:318px;width:2px;height:2px;border-radius:1px;background:#b8b8b8"></div>
<div class="a" style="left:986.5px;top:324.5px;width:2px;height:2px;border-radius:1px;background:#b8b8b8"></div>
<div class="a" style="left:986.5px;top:331px;width:2px;height:2px;border-radius:1px;background:#b8b8b8"></div>
<div class="a" style="left:986.5px;top:378px;width:2px;height:2px;border-radius:1px;background:#b8b8b8"></div>
<div class="a" style="left:986.5px;top:385px;width:2px;height:2px;border-radius:1px;background:#b8b8b8"></div>
<div class="a" style="left:986.5px;top:391px;width:2px;height:2px;border-radius:1px;background:#b8b8b8"></div>
<svg class="a" style="left:985px;top:351.5px" width="4" height="7" viewBox="0 0 4 7"><path d="M0 0 V7 L4 3.5Z" fill="#111"/></svg>
<svg class="a" style="left:1005px;top:108px" width="15" height="8" viewBox="0 0 15 8"><rect x="1.1" y="0.8" width="1.6" height="6.3" fill="#de6a5a"/><circle cx="4.8" cy="4" r="1" fill="#5a5050"/><rect x="7" y="0.8" width="1.2" height="6.3" fill="#3a70b8"/><rect x="8.8" y="0.8" width="1.2" height="6.3" fill="#5a8ac8"/><rect x="10.6" y="0.8" width="1.2" height="6.3" fill="#5a8ac8"/><rect x="12.4" y="0.8" width="1.2" height="6.3" fill="#3a70b8"/></svg>
<svg class="a" style="left:1034px;top:102px" width="17" height="15" viewBox="0 0 17 15"><line x1="8.4" y1="0.8" x2="8.4" y2="13" stroke="#aaa" stroke-width="0.7"/><path d="M12 10 L15.8 13.5" stroke="#999" stroke-width="0.8"/><path d="M2 13.3 L5 12" stroke="#999" stroke-width="0.7"/><path d="M2.6 11.5 L4.5 7 L7 9.5" fill="none" stroke="#1d5aa8" stroke-width="1.8" stroke-linejoin="round"/><path d="M4.8 14 L7 11 L9.5 6.5 L12 10" fill="none" stroke="#1fb030" stroke-width="1.9" stroke-linejoin="round"/></svg>
<svg class="a" style="left:1071px;top:101.5px" width="18" height="17" viewBox="0 0 18 17"><circle cx="7.5" cy="7.2" r="5.6" fill="#fff" stroke="#2f6db5" stroke-width="1.6"/><path d="M7.5 4 V10.4 M4.3 7.2 H10.7" stroke="#2aa05a" stroke-width="1.8"/><path d="M11.5 11.2 L16 15.7" stroke="#2f6db5" stroke-width="2.4" stroke-linecap="round"/></svg>
<svg class="a" style="left:1109px;top:101px" width="17" height="17" viewBox="0 0 17 17"><line x1="8" y1="1.5" x2="8" y2="11" stroke="#aaa" stroke-width="0.7"/><path d="M2 13.5 Q2.5 9.5 5.5 9.5 Q7 10 8 11.5 L10.5 8.5 L12.5 12.5 Q10 16.5 6 16 Q3 16 2 13.5Z" fill="#1f72c4"/><path d="M3.5 15.5 L8 12.5 L12 7.5" fill="none" stroke="#2bc040" stroke-width="1.2"/><path d="M13 12 L14.5 10" stroke="#bbb" stroke-width="0.6"/><line x1="1.4" y1="1.2" x2="15.8" y2="15.6" stroke="#222" stroke-width="0.95"/></svg>
<svg class="a" style="left:1134px;top:101px" width="17" height="17" viewBox="0 0 17 17"><path d="M1.5 0.5 H9 L12 3.5 V14.5 H1.5 Z" fill="#fff" stroke="#777" stroke-width="0.8"/><path d="M9 0.5 V3.5 H12" fill="none" stroke="#777" stroke-width="0.7"/><path d="M8 12.5 H14.5 M12 10 L14.8 12.5 L12 15" fill="none" stroke="#2f7fd0" stroke-width="1.5"/></svg>
<div class="t" id="t173" style="left:1000.30px;top:122.00px;font-size:6.8px;color:#2d8fd5;-webkit-text-stroke:0.15px #2d8fd5;transform:scaleX(0.9300);letter-spacing:-0.121px;">Export to</div>
<div class="t" id="t174" style="left:996.10px;top:129.00px;font-size:6.8px;color:#2d8fd5;-webkit-text-stroke:0.15px #2d8fd5;transform:scaleX(0.9300);letter-spacing:-0.154px;">Comparison</div>
<div class="t" id="t175" style="left:1036.00px;top:122.00px;font-size:6.8px;color:#2d8fd5;-webkit-text-stroke:0.15px #2d8fd5;transform:scaleX(0.9300);letter-spacing:-0.103px;">View</div>
<div class="t" id="t176" style="left:1072.70px;top:122.00px;font-size:6.8px;color:#2d8fd5;-webkit-text-stroke:0.15px #2d8fd5;transform:scaleX(0.9300);letter-spacing:-0.272px;">Zoom</div>
<div class="t" id="t177" style="left:1112.10px;top:122.00px;font-size:6.8px;color:#2d8fd5;-webkit-text-stroke:0.15px #2d8fd5;transform:scaleX(0.9300);letter-spacing:-0.200px;">Line</div>
<div class="t" id="t178" style="left:1133.20px;top:122.00px;font-size:6.8px;color:#2d8fd5;-webkit-text-stroke:0.15px #2d8fd5;transform:scaleX(0.9300);letter-spacing:-0.125px;">Export</div>
<svg class="a" style="left:1058px;top:121px" width="6" height="5" viewBox="0 0 6 5"><path d="M0 0 H6 L3.0 5Z" fill="#555"/></svg>
<svg class="a" style="left:1096px;top:121px" width="6" height="5" viewBox="0 0 6 5"><path d="M0 0 H6 L3.0 5Z" fill="#555"/></svg>
<svg class="a" style="left:1155px;top:121px" width="6" height="5" viewBox="0 0 6 5"><path d="M0 0 H6 L3.0 5Z" fill="#555"/></svg>
<div class="a" style="left:1163.5px;top:98px;width:10.5px;height:45.5px;background:#dcdcdc"></div>
<svg class="a" style="left:1165.5px;top:118px" width="6" height="5" viewBox="0 0 6 5"><path d="M0 0 H6 L3.0 5Z" fill="#bdbdbd"/></svg>
<div class="a" style="left:1165px;top:116.5px;width:7px;height:0.8px;background:#bdbdbd"></div>
<div class="a" style="left:995px;top:151px;width:263px;height:23.8px;background:#d9d9d9"></div>
<div class="t" id="t59" style="left:1004.60px;top:158.00px;font-size:9.8px;color:#1a1a1a;font-weight:bold;transform:scaleX(0.9300);letter-spacing:-0.263px;">Purity</div>
<svg class="a" style="left:1240px;top:159.5px" width="9" height="5" viewBox="0 0 9 5"><path d="M0.5 0.5 L4.5 4.5 L8.5 0.5" fill="none" stroke="#777" stroke-width="1.1"/></svg>
<div class="a" style="left:995px;top:181px;width:263px;height:312.7px;background:#d9d9d9"></div>
<div class="a" style="left:1004px;top:187px;width:13.5px;height:13.5px;background:#0b73c7"></div>
<svg class="a" style="left:1004px;top:187px" width="13" height="13" viewBox="0 0 13 13"><path d="M3.2 7.3 L5.6 9.5 L10.2 5" fill="none" stroke="#fff" stroke-width="1.3"/></svg>
<div class="t" id="t60" style="left:1021.00px;top:189.00px;font-size:9.8px;color:#1a1a1a;font-weight:bold;transform:scaleX(0.9300);letter-spacing:-0.227px;">Correlation</div>
<svg class="a" style="left:1240px;top:191px" width="9" height="5" viewBox="0 0 9 5"><path d="M0.5 4.5 L4.5 0.5 L8.5 4.5" fill="none" stroke="#777" stroke-width="1.1"/></svg>
<div class="t" id="t61" style="left:999.50px;top:210.00px;font-size:10px;color:#333;-webkit-text-stroke:0.12px #333;transform:scaleX(0.9373);">Ref. spectrum substance filter:</div>
<div class="t" id="t62" style="left:1131.00px;top:210.00px;font-size:10px;color:#333;-webkit-text-stroke:0.12px #333;transform:scaleX(0.9561);">(All)</div>
<svg class="a" style="left:1155.7px;top:212.5px" width="6" height="5" viewBox="0 0 6 5"><path d="M0 0 H6 L3.0 5Z" fill="#555"/></svg>
<div class="a" style="left:1130.5px;top:222px;width:39px;height:1px;background:#c4c4c4"></div>
<div class="a" style="left:998px;top:225.4px;width:256.29999999999995px;height:16.3px;background:#142535"></div>
<div class="t" id="t94" style="left:1000.00px;top:231.00px;font-size:6.8px;color:#f0f0f0;-webkit-text-stroke:0.15px #f0f0f0;transform:scaleX(0.9300);letter-spacing:-0.080px;">Tr.</div>
<div class="t" id="t95" style="left:1016.70px;top:231.00px;font-size:6.8px;color:#f0f0f0;-webkit-text-stroke:0.15px #f0f0f0;transform:scaleX(0.9300);letter-spacing:-0.135px;"><i>R<span style="font-size:5px">F</span></i></div>
<div class="t" id="t96" style="left:1043.10px;top:231.00px;font-size:6.8px;color:#f0f0f0;-webkit-text-stroke:0.15px #f0f0f0;transform:scaleX(0.9300);">Sub.</div>
<div class="t" id="t97" style="left:1096.90px;top:231.00px;font-size:6.8px;color:#f0f0f0;-webkit-text-stroke:0.15px #f0f0f0;transform:scaleX(0.9501);">Ref. spectrum</div>
<div class="t" id="t98" style="left:1214.80px;top:231.00px;font-size:6.8px;color:#f0f0f0;-webkit-text-stroke:0.15px #f0f0f0;">Correlation</div>
<div class="a" style="left:998px;top:241.70px;width:256.29999999999995px;height:16.70px;background:#ffffff"></div>
<div class="t" id="t99" style="left:1002.00px;top:247.00px;font-size:6.6px;color:#333;-webkit-text-stroke:0.15px #333;transform:scaleX(0.7081);">1</div>
<div class="t" id="t100" style="left:1018.00px;top:247.00px;font-size:6.6px;color:#333;-webkit-text-stroke:0.15px #333;transform:scaleX(0.9688);">0.349</div>
<div class="t" id="t101" style="left:1044.80px;top:247.00px;font-size:6.6px;color:#333;-webkit-text-stroke:0.15px #333;transform:scaleX(0.9976);">sulfamerazin</div>
<div class="t" id="t102" style="left:1098.60px;top:244.00px;font-size:9.6px;color:#333;-webkit-text-stroke:0.12px #333;transform:scaleX(0.9300);letter-spacing:-0.027px;">Tr. 3 <i>R<span style="font-size:7px">F</span></i> 0.345 Sub....</div>
<svg class="a" style="left:1189.3px;top:247.29999999999998px" width="6" height="5" viewBox="0 0 6 5"><path d="M0 0 H6 L3.0 5Z" fill="#555"/></svg>
<div class="a" style="left:1098px;top:255.70px;width:105px;height:1px;background:#dadada"></div>
<div class="t" id="t103" style="left:1216.40px;top:247.00px;font-size:6.6px;color:#333;-webkit-text-stroke:0.15px #333;transform:scaleX(0.9813);">0.999726</div>
<div class="a" style="left:998px;top:258.30px;width:256.29999999999995px;height:16.70px;background:#e9edf2"></div>
<div class="t" id="t104" style="left:1002.00px;top:263.00px;font-size:6.6px;color:#333;-webkit-text-stroke:0.15px #333;transform:scaleX(0.7081);">2</div>
<div class="t" id="t105" style="left:1018.00px;top:263.00px;font-size:6.6px;color:#333;-webkit-text-stroke:0.15px #333;transform:scaleX(0.9688);">0.348</div>
<div class="t" id="t106" style="left:1044.80px;top:263.00px;font-size:6.6px;color:#333;-webkit-text-stroke:0.15px #333;transform:scaleX(0.9976);">sulfamerazin</div>
<div class="t" id="t107" style="left:1098.60px;top:261.00px;font-size:9.6px;color:#333;-webkit-text-stroke:0.12px #333;transform:scaleX(0.9300);letter-spacing:-0.027px;">Tr. 3 <i>R<span style="font-size:7px">F</span></i> 0.345 Sub....</div>
<svg class="a" style="left:1189.3px;top:263.90000000000003px" width="6" height="5" viewBox="0 0 6 5"><path d="M0 0 H6 L3.0 5Z" fill="#555"/></svg>
<div class="a" style="left:1098px;top:272.30px;width:105px;height:1px;background:#dadada"></div>
<div class="t" id="t108" style="left:1216.40px;top:263.00px;font-size:6.6px;color:#333;-webkit-text-stroke:0.15px #333;transform:scaleX(0.9813);">0.999522</div>
<div class="a" style="left:998px;top:274.90px;width:256.29999999999995px;height:16.70px;background:#ffffff"></div>
<div class="t" id="t109" style="left:1002.00px;top:280.00px;font-size:6.6px;color:#333;-webkit-text-stroke:0.15px #333;transform:scaleX(0.7081);">3</div>
<div class="t" id="t110" style="left:1018.00px;top:280.00px;font-size:6.6px;color:#333;-webkit-text-stroke:0.15px #333;transform:scaleX(0.9688);">0.345</div>
<div class="t" id="t111" style="left:1044.80px;top:280.00px;font-size:6.6px;color:#333;-webkit-text-stroke:0.15px #333;transform:scaleX(0.9976);">sulfamerazin</div>
<div class="t" id="t112" style="left:1098.60px;top:278.00px;font-size:9.6px;color:#333;-webkit-text-stroke:0.12px #333;transform:scaleX(0.9942);">(not set)</div>
<svg class="a" style="left:1141.7px;top:280.5px" width="6" height="5" viewBox="0 0 6 5"><path d="M0 0 H6 L3.0 5Z" fill="#555"/></svg>
<div class="a" style="left:1098px;top:288.90px;width:57px;height:1px;background:#dadada"></div>
<div class="a" style="left:998px;top:291.50px;width:256.29999999999995px;height:16.70px;background:#e9edf2"></div>
<div class="t" id="t113" style="left:1002.00px;top:296.00px;font-size:6.6px;color:#333;-webkit-text-stroke:0.15px #333;transform:scaleX(0.7081);">4</div>
<div class="t" id="t114" style="left:1018.00px;top:296.00px;font-size:6.6px;color:#333;-webkit-text-stroke:0.15px #333;transform:scaleX(0.9688);">0.345</div>
<div class="t" id="t115" style="left:1044.80px;top:296.00px;font-size:6.6px;color:#333;-webkit-text-stroke:0.15px #333;transform:scaleX(0.9976);">sulfamerazin</div>
<div class="t" id="t116" style="left:1098.60px;top:294.00px;font-size:9.6px;color:#333;-webkit-text-stroke:0.12px #333;transform:scaleX(0.9300);letter-spacing:-0.027px;">Tr. 3 <i>R<span style="font-size:7px">F</span></i> 0.345 Sub....</div>
<svg class="a" style="left:1189.3px;top:297.1px" width="6" height="5" viewBox="0 0 6 5"><path d="M0 0 H6 L3.0 5Z" fill="#555"/></svg>
<div class="a" style="left:1098px;top:305.50px;width:105px;height:1px;background:#dadada"></div>
<div class="t" id="t117" style="left:1216.40px;top:296.00px;font-size:6.6px;color:#333;-webkit-text-stroke:0.15px #333;transform:scaleX(0.9813);">0.999773</div>
<div class="a" style="left:998px;top:308.10px;width:256.29999999999995px;height:16.70px;background:#ffffff"></div>
<div class="t" id="t118" style="left:1002.00px;top:313.00px;font-size:6.6px;color:#333;-webkit-text-stroke:0.15px #333;transform:scaleX(0.7081);">5</div>
<div class="t" id="t119" style="left:1018.00px;top:313.00px;font-size:6.6px;color:#333;-webkit-text-stroke:0.15px #333;transform:scaleX(0.9688);">0.345</div>
<div class="t" id="t120" style="left:1044.80px;top:313.00px;font-size:6.6px;color:#333;-webkit-text-stroke:0.15px #333;transform:scaleX(0.9976);">sulfamerazin</div>
<div class="t" id="t121" style="left:1098.60px;top:311.00px;font-size:9.6px;color:#333;-webkit-text-stroke:0.12px #333;transform:scaleX(0.9300);letter-spacing:-0.027px;">Tr. 3 <i>R<span style="font-size:7px">F</span></i> 0.345 Sub....</div>
<svg class="a" style="left:1189.3px;top:313.70000000000005px" width="6" height="5" viewBox="0 0 6 5"><path d="M0 0 H6 L3.0 5Z" fill="#555"/></svg>
<div class="a" style="left:1098px;top:322.10px;width:105px;height:1px;background:#dadada"></div>
<div class="t" id="t122" style="left:1216.40px;top:313.00px;font-size:6.6px;color:#333;-webkit-text-stroke:0.15px #333;transform:scaleX(0.9813);">0.999563</div>
<div class="a" style="left:998px;top:324.70px;width:256.29999999999995px;height:16.70px;background:#e9edf2"></div>
<div class="t" id="t123" style="left:1002.00px;top:330.00px;font-size:6.6px;color:#333;-webkit-text-stroke:0.15px #333;transform:scaleX(0.7081);">6</div>
<div class="t" id="t124" style="left:1018.00px;top:330.00px;font-size:6.6px;color:#333;-webkit-text-stroke:0.15px #333;transform:scaleX(0.9688);">0.345</div>
<div class="t" id="t125" style="left:1044.80px;top:330.00px;font-size:6.6px;color:#333;-webkit-text-stroke:0.15px #333;transform:scaleX(0.9976);">sulfamerazin</div>
<div class="t" id="t126" style="left:1098.60px;top:328.00px;font-size:9.6px;color:#333;-webkit-text-stroke:0.12px #333;transform:scaleX(0.9300);letter-spacing:-0.027px;">Tr. 3 <i>R<span style="font-size:7px">F</span></i> 0.345 Sub....</div>
<svg class="a" style="left:1189.3px;top:330.3px" width="6" height="5" viewBox="0 0 6 5"><path d="M0 0 H6 L3.0 5Z" fill="#555"/></svg>
<div class="a" style="left:1098px;top:338.70px;width:105px;height:1px;background:#dadada"></div>
<div class="t" id="t127" style="left:1216.40px;top:330.00px;font-size:6.6px;color:#333;-webkit-text-stroke:0.15px #333;transform:scaleX(0.9813);">0.999757</div>
<div class="a" style="left:998px;top:341.30px;width:256.29999999999995px;height:16.70px;background:#ffffff"></div>
<div class="t" id="t128" style="left:1002.00px;top:346.00px;font-size:6.6px;color:#333;-webkit-text-stroke:0.15px #333;transform:scaleX(0.7081);">7</div>
<div class="t" id="t129" style="left:1018.00px;top:346.00px;font-size:6.6px;color:#333;-webkit-text-stroke:0.15px #333;transform:scaleX(0.9688);">0.345</div>
<div class="t" id="t130" style="left:1044.80px;top:346.00px;font-size:6.6px;color:#333;-webkit-text-stroke:0.15px #333;transform:scaleX(0.9976);">sulfamerazin</div>
<div class="t" id="t131" style="left:1098.60px;top:344.00px;font-size:9.6px;color:#333;-webkit-text-stroke:0.12px #333;transform:scaleX(0.9300);letter-spacing:-0.027px;">Tr. 3 <i>R<span style="font-size:7px">F</span></i> 0.345 Sub....</div>
<svg class="a" style="left:1189.3px;top:346.90000000000003px" width="6" height="5" viewBox="0 0 6 5"><path d="M0 0 H6 L3.0 5Z" fill="#555"/></svg>
<div class="a" style="left:1098px;top:355.30px;width:105px;height:1px;background:#dadada"></div>
<div class="t" id="t132" style="left:1216.40px;top:346.00px;font-size:6.6px;color:#333;-webkit-text-stroke:0.15px #333;transform:scaleX(0.9813);">0.999163</div>
<div class="a" style="left:998px;top:357.90px;width:256.29999999999995px;height:16.70px;background:#e9edf2"></div>
<div class="t" id="t133" style="left:1002.00px;top:363.00px;font-size:6.6px;color:#333;-webkit-text-stroke:0.15px #333;transform:scaleX(0.7081);">8</div>
<div class="t" id="t134" style="left:1018.00px;top:363.00px;font-size:6.6px;color:#333;-webkit-text-stroke:0.15px #333;transform:scaleX(0.9688);">0.346</div>
<div class="t" id="t135" style="left:1044.80px;top:363.00px;font-size:6.6px;color:#333;-webkit-text-stroke:0.15px #333;transform:scaleX(0.9976);">sulfamerazin</div>
<div class="t" id="t136" style="left:1098.60px;top:361.00px;font-size:9.6px;color:#333;-webkit-text-stroke:0.12px #333;transform:scaleX(0.9300);letter-spacing:-0.027px;">Tr. 3 <i>R<span style="font-size:7px">F</span></i> 0.345 Sub....</div>
<svg class="a" style="left:1189.3px;top:363.5px" width="6" height="5" viewBox="0 0 6 5"><path d="M0 0 H6 L3.0 5Z" fill="#555"/></svg>
<div class="a" style="left:1098px;top:371.90px;width:105px;height:1px;background:#dadada"></div>
<div class="t" id="t137" style="left:1216.40px;top:363.00px;font-size:6.6px;color:#333;-webkit-text-stroke:0.15px #333;transform:scaleX(0.9813);">0.999318</div>
<div class="a" style="left:998px;top:374.50px;width:256.29999999999995px;height:16.70px;background:#ffffff"></div>
<div class="t" id="t138" style="left:1002.00px;top:379.00px;font-size:6.6px;color:#333;-webkit-text-stroke:0.15px #333;transform:scaleX(0.7081);">9</div>
<div class="t" id="t139" style="left:1018.00px;top:379.00px;font-size:6.6px;color:#333;-webkit-text-stroke:0.15px #333;transform:scaleX(0.9688);">0.346</div>
<div class="t" id="t140" style="left:1044.80px;top:379.00px;font-size:6.6px;color:#333;-webkit-text-stroke:0.15px #333;transform:scaleX(0.9976);">sulfamerazin</div>
<div class="t" id="t141" style="left:1098.60px;top:377.00px;font-size:9.6px;color:#333;-webkit-text-stroke:0.12px #333;transform:scaleX(0.9300);letter-spacing:-0.027px;">Tr. 3 <i>R<span style="font-size:7px">F</span></i> 0.345 Sub....</div>
<svg class="a" style="left:1189.3px;top:380.1px" width="6" height="5" viewBox="0 0 6 5"><path d="M0 0 H6 L3.0 5Z" fill="#555"/></svg>
<div class="a" style="left:1098px;top:388.50px;width:105px;height:1px;background:#dadada"></div>
<div class="t" id="t142" style="left:1216.40px;top:379.00px;font-size:6.6px;color:#333;-webkit-text-stroke:0.15px #333;transform:scaleX(0.9813);">0.999218</div>
<div class="a" style="left:998px;top:391.10px;width:256.29999999999995px;height:16.70px;background:#e9edf2"></div>
<div class="t" id="t143" style="left:1002.00px;top:396.00px;font-size:6.6px;color:#333;-webkit-text-stroke:0.15px #333;transform:scaleX(1.0213);">10</div>
<div class="t" id="t144" style="left:1018.00px;top:396.00px;font-size:6.6px;color:#333;-webkit-text-stroke:0.15px #333;transform:scaleX(0.9688);">0.346</div>
<div class="t" id="t145" style="left:1044.80px;top:396.00px;font-size:6.6px;color:#333;-webkit-text-stroke:0.15px #333;transform:scaleX(0.9976);">sulfamerazin</div>
<div class="t" id="t146" style="left:1098.60px;top:394.00px;font-size:9.6px;color:#333;-webkit-text-stroke:0.12px #333;transform:scaleX(0.9300);letter-spacing:-0.027px;">Tr. 3 <i>R<span style="font-size:7px">F</span></i> 0.345 Sub....</div>
<svg class="a" style="left:1189.3px;top:396.70000000000005px" width="6" height="5" viewBox="0 0 6 5"><path d="M0 0 H6 L3.0 5Z" fill="#555"/></svg>
<div class="a" style="left:1098px;top:405.10px;width:105px;height:1px;background:#dadada"></div>
<div class="t" id="t147" style="left:1216.40px;top:396.00px;font-size:6.6px;color:#333;-webkit-text-stroke:0.15px #333;transform:scaleX(0.9813);">0.999282</div>
<div class="a" style="left:998px;top:407.70px;width:256.29999999999995px;height:16.70px;background:#ffffff"></div>
<div class="t" id="t148" style="left:1002.00px;top:413.00px;font-size:6.6px;color:#333;-webkit-text-stroke:0.15px #333;transform:scaleX(1.0934);">11</div>
<div class="t" id="t149" style="left:1018.00px;top:413.00px;font-size:6.6px;color:#333;-webkit-text-stroke:0.15px #333;transform:scaleX(0.9688);">0.345</div>
<div class="t" id="t150" style="left:1044.80px;top:413.00px;font-size:6.6px;color:#333;-webkit-text-stroke:0.15px #333;transform:scaleX(0.9976);">sulfamerazin</div>
<div class="t" id="t151" style="left:1098.60px;top:410.00px;font-size:9.6px;color:#333;-webkit-text-stroke:0.12px #333;transform:scaleX(0.9300);letter-spacing:-0.027px;">Tr. 3 <i>R<span style="font-size:7px">F</span></i> 0.345 Sub....</div>
<svg class="a" style="left:1189.3px;top:413.3px" width="6" height="5" viewBox="0 0 6 5"><path d="M0 0 H6 L3.0 5Z" fill="#555"/></svg>
<div class="a" style="left:1098px;top:421.70px;width:105px;height:1px;background:#dadada"></div>
<div class="t" id="t152" style="left:1216.40px;top:413.00px;font-size:6.6px;color:#333;-webkit-text-stroke:0.15px #333;transform:scaleX(0.9813);">0.999489</div>
<div class="a" style="left:998px;top:424.30px;width:256.29999999999995px;height:16.70px;background:#e9edf2"></div>
<div class="t" id="t153" style="left:1002.00px;top:429.00px;font-size:6.6px;color:#333;-webkit-text-stroke:0.15px #333;transform:scaleX(1.0213);">12</div>
<div class="t" id="t154" style="left:1018.00px;top:429.00px;font-size:6.6px;color:#333;-webkit-text-stroke:0.15px #333;transform:scaleX(0.9688);">0.343</div>
<div class="t" id="t155" style="left:1044.80px;top:429.00px;font-size:6.6px;color:#333;-webkit-text-stroke:0.15px #333;transform:scaleX(0.9976);">sulfamerazin</div>
<div class="t" id="t156" style="left:1098.60px;top:427.00px;font-size:9.6px;color:#333;-webkit-text-stroke:0.12px #333;transform:scaleX(0.9300);letter-spacing:-0.027px;">Tr. 3 <i>R<span style="font-size:7px">F</span></i> 0.345 Sub....</div>
<svg class="a" style="left:1189.3px;top:429.90000000000003px" width="6" height="5" viewBox="0 0 6 5"><path d="M0 0 H6 L3.0 5Z" fill="#555"/></svg>
<div class="a" style="left:1098px;top:438.30px;width:105px;height:1px;background:#dadada"></div>
<div class="t" id="t157" style="left:1216.40px;top:429.00px;font-size:6.6px;color:#333;-webkit-text-stroke:0.15px #333;transform:scaleX(0.9813);">0.999812</div>
<div class="a" style="left:998px;top:440.90px;width:256.29999999999995px;height:16.70px;background:#ffffff"></div>
<div class="t" id="t158" style="left:1002.00px;top:446.00px;font-size:6.6px;color:#333;-webkit-text-stroke:0.15px #333;transform:scaleX(1.0213);">13</div>
<div class="t" id="t159" style="left:1018.00px;top:446.00px;font-size:6.6px;color:#333;-webkit-text-stroke:0.15px #333;transform:scaleX(0.9688);">0.345</div>
<div class="t" id="t160" style="left:1044.80px;top:446.00px;font-size:6.6px;color:#333;-webkit-text-stroke:0.15px #333;transform:scaleX(0.9976);">sulfamerazin</div>
<div class="t" id="t161" style="left:1098.60px;top:444.00px;font-size:9.6px;color:#333;-webkit-text-stroke:0.12px #333;transform:scaleX(0.9300);letter-spacing:-0.027px;">Tr. 3 <i>R<span style="font-size:7px">F</span></i> 0.345 Sub....</div>
<svg class="a" style="left:1189.3px;top:446.5px" width="6" height="5" viewBox="0 0 6 5"><path d="M0 0 H6 L3.0 5Z" fill="#555"/></svg>
<div class="a" style="left:1098px;top:454.90px;width:105px;height:1px;background:#dadada"></div>
<div class="t" id="t162" style="left:1216.40px;top:446.00px;font-size:6.6px;color:#333;-webkit-text-stroke:0.15px #333;transform:scaleX(0.9813);">0.999349</div>
<div class="a" style="left:998px;top:457.50px;width:256.29999999999995px;height:16.70px;background:#e9edf2"></div>
<div class="t" id="t163" style="left:1002.00px;top:462.00px;font-size:6.6px;color:#333;-webkit-text-stroke:0.15px #333;transform:scaleX(1.0213);">14</div>
<div class="t" id="t164" style="left:1018.00px;top:462.00px;font-size:6.6px;color:#333;-webkit-text-stroke:0.15px #333;transform:scaleX(0.9688);">0.346</div>
<div class="t" id="t165" style="left:1044.80px;top:462.00px;font-size:6.6px;color:#333;-webkit-text-stroke:0.15px #333;transform:scaleX(0.9976);">sulfamerazin</div>
<div class="t" id="t166" style="left:1098.60px;top:460.00px;font-size:9.6px;color:#333;-webkit-text-stroke:0.12px #333;transform:scaleX(0.9300);letter-spacing:-0.027px;">Tr. 3 <i>R<span style="font-size:7px">F</span></i> 0.345 Sub....</div>
<svg class="a" style="left:1189.3px;top:463.1px" width="6" height="5" viewBox="0 0 6 5"><path d="M0 0 H6 L3.0 5Z" fill="#555"/></svg>
<div class="a" style="left:1098px;top:471.50px;width:105px;height:1px;background:#dadada"></div>
<div class="t" id="t167" style="left:1216.40px;top:462.00px;font-size:6.6px;color:#333;-webkit-text-stroke:0.15px #333;transform:scaleX(0.9813);">0.998919</div>
<div class="a" style="left:998px;top:474.10px;width:256.29999999999995px;height:16.70px;background:#ffffff"></div>
<div class="t" id="t168" style="left:1002.00px;top:479.00px;font-size:6.6px;color:#333;-webkit-text-stroke:0.15px #333;transform:scaleX(1.0213);">15</div>
<div class="t" id="t169" style="left:1018.00px;top:479.00px;font-size:6.6px;color:#333;-webkit-text-stroke:0.15px #333;transform:scaleX(0.9688);">0.349</div>
<div class="t" id="t170" style="left:1044.80px;top:479.00px;font-size:6.6px;color:#333;-webkit-text-stroke:0.15px #333;transform:scaleX(0.9976);">sulfamerazin</div>
<div class="t" id="t171" style="left:1098.60px;top:477.00px;font-size:9.6px;color:#333;-webkit-text-stroke:0.12px #333;transform:scaleX(0.9300);letter-spacing:-0.027px;">Tr. 3 <i>R<span style="font-size:7px">F</span></i> 0.345 Sub....</div>
<svg class="a" style="left:1189.3px;top:479.70000000000005px" width="6" height="5" viewBox="0 0 6 5"><path d="M0 0 H6 L3.0 5Z" fill="#555"/></svg>
<div class="a" style="left:1098px;top:488.10px;width:105px;height:1px;background:#dadada"></div>
<div class="t" id="t172" style="left:1216.40px;top:479.00px;font-size:6.6px;color:#333;-webkit-text-stroke:0.15px #333;transform:scaleX(0.9813);">0.999142</div>
<div class="a" style="left:1014.5px;top:241.6px;width:1px;height:249.0px;background:#dedede"></div>
<div class="a" style="left:1041px;top:241.6px;width:1px;height:249.0px;background:#dedede"></div>
<div class="a" style="left:1094.5px;top:241.6px;width:1px;height:249.0px;background:#dedede"></div>
<div class="a" style="left:1212.5px;top:241.6px;width:1px;height:249.0px;background:#dedede"></div>
<div class="a" style="left:995px;top:501px;width:263px;height:21.5px;background:#d9d9d9"></div>
<div class="a" style="left:1234px;top:501.5px;width:22px;height:21px;background:#0b74c9"></div>
<svg class="a" style="left:1241px;top:509px" width="9" height="5" viewBox="0 0 9 5"><path d="M0.5 0.5 L4.5 4.5 L8.5 0.5" fill="none" stroke="#1c3550" stroke-width="1.1"/></svg>
<div class="t" id="t63" style="left:1004.20px;top:507.00px;font-size:9.8px;color:#1a1a1a;font-weight:bold;transform:scaleX(0.9300);letter-spacing:-0.061px;">Maximums</div>
<div class="t" id="t64" style="left:116.50px;top:48.00px;font-size:38.4px;color:#ff0000;font-weight:bold;transform:scaleX(1.0096);">A</div>
<div class="a" style="left:92px;top:93px;width:64.5px;height:72.5px;border:4px solid #ff0000;border-radius:6px"></div>
<div class="t" id="t65" style="left:1194.50px;top:187.00px;font-size:38.8px;color:#ff0000;font-weight:bold;transform:scaleX(0.9204);">B</div>
<div class="a" style="left:980px;top:175.8px;width:288px;height:330px;border:4.2px solid #ff0000;border-radius:17px"></div>
</body></html>
